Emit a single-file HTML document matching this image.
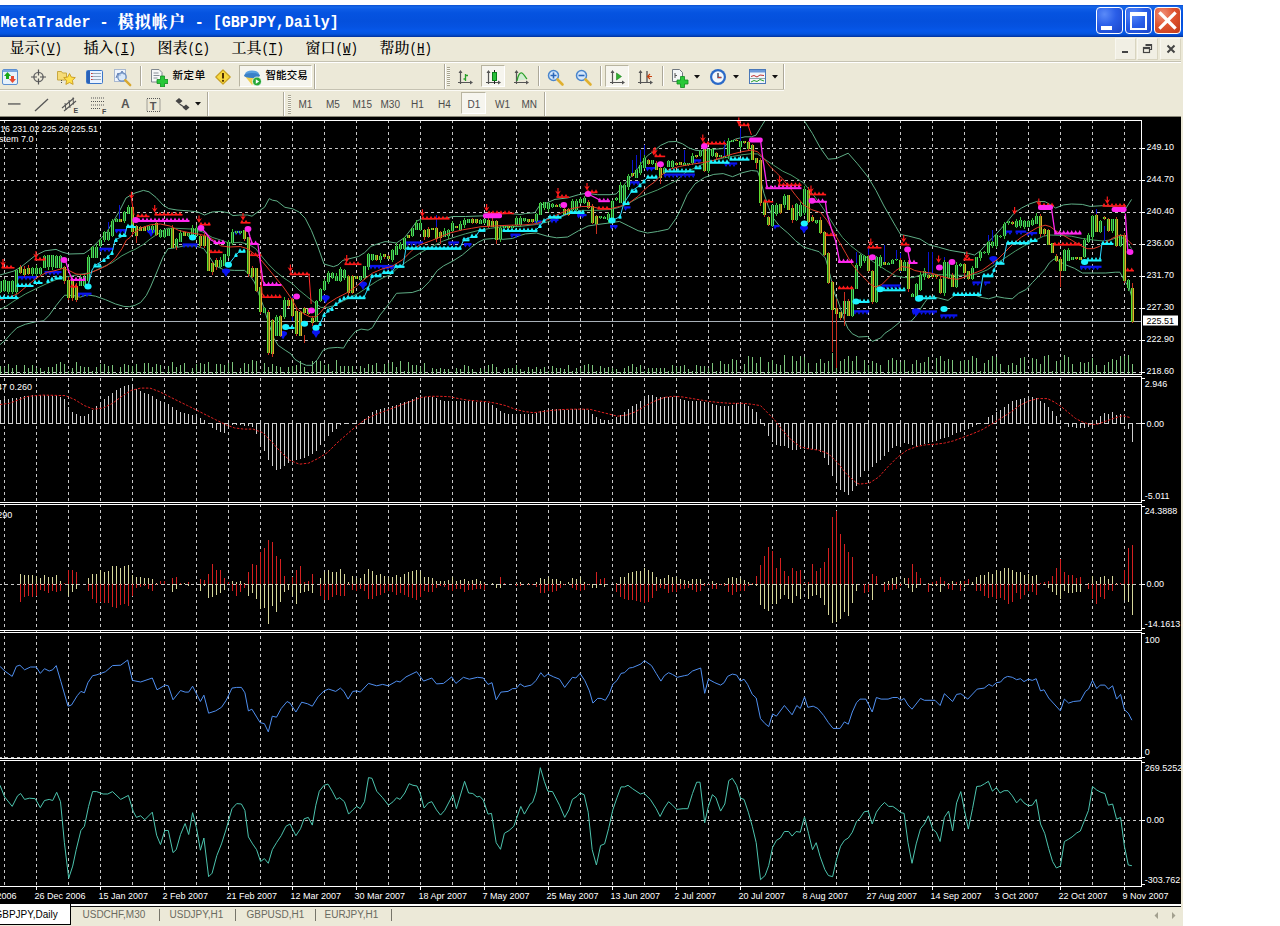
<!DOCTYPE html>
<html><head><meta charset="utf-8"><title>MetaTrader</title>
<style>
html,body{margin:0;padding:0;background:#fff}
body{width:1280px;height:926px;position:relative;overflow:hidden;font-family:"Liberation Sans","Noto Sans CJK SC",sans-serif}
#win{position:absolute;left:0;top:5px;width:1183px;height:921px;background:#ece9d8;overflow:hidden}
#page{position:absolute;left:0;top:0;width:1183px;height:926px;overflow:hidden}
#title{position:absolute;left:0;top:5px;width:1183px;height:32px;background:linear-gradient(to bottom,#0a4fd0 0,#1668ea 2px,#0d5ce6 4px,#0553e0 8px,#0450dc 16px,#0553e2 22px,#0658ea 26px,#0454de 29px,#0340b8 31px,#022f98 32px)}
#ttext{position:absolute;left:0.6px;top:10px;height:22px;line-height:22px;color:#fff;font:bold 15px/22px "Liberation Mono","Noto Serif CJK SC",monospace;white-space:pre;transform:scaleY(1.12);transform-origin:0 78%}
#ttext b{font:900 16px/22px "Noto Serif CJK SC",serif;letter-spacing:1px;display:inline-block;transform:scaleY(0.94);position:relative;top:1px}
.tb{position:absolute;top:7px;width:27px;height:27px;border:1px solid #fff;border-radius:4px;box-sizing:border-box;background:radial-gradient(circle at 30% 25%,#5a8af8 0,#2a5ee8 45%,#1a44c8 100%)}
#menu{position:absolute;left:0;top:37px;width:1183px;height:25px;background:#ece9d8}
.mi{position:absolute;top:41px;height:18px;font:500 15px/18px "Liberation Mono","Noto Serif CJK SC",serif;color:#000;white-space:pre}
.ml{font:12.5px/18px "Liberation Mono",monospace;display:inline-block;transform:scaleY(1.15);transform-origin:0 75%}
.mb{position:absolute;top:38px;width:21px;height:22px;box-sizing:border-box;background:#f1efe4;border:1px solid #f8f7f0;border-right-color:#d8d4c0;border-bottom-color:#d8d4c0}
.cj{position:absolute;font:500 10.5px/13px "Liberation Sans","Noto Sans CJK SC",sans-serif;color:#000;letter-spacing:0.6px;white-space:pre}
</style></head><body><div id="page">
<div id="win"></div>
<div id="title"></div>
<div id="ttext">MetaTrader - <b>模拟帐户</b> - [GBPJPY,Daily]</div>
<div class="tb" style="left:1096px"><div style="position:absolute;left:4px;top:18px;width:11px;height:4px;background:#fff"></div></div>
<div class="tb" style="left:1125px"><div style="position:absolute;left:4px;top:4px;width:13px;height:12px;border:2px solid #fff;border-top-width:4px"></div></div>
<div class="tb" style="left:1154px;background:radial-gradient(circle at 30% 25%,#f0907a 0,#e0532f 45%,#c03a1a 100%)"><svg width="25" height="25" viewBox="0 0 25 25" style="position:absolute;left:0;top:0"><path d="M5.5 5.5l14 14M19.5 5.5l-14 14" stroke="#fff" stroke-width="3.2" stroke-linecap="square"/></svg></div>
<div id="menu"></div>
<div class="mi" style="left:9.5px">显示<span class="ml">(<u>V</u>)</span></div><div class="mi" style="left:83.5px">插入<span class="ml">(<u>I</u>)</span></div><div class="mi" style="left:157.5px">图表<span class="ml">(<u>C</u>)</span></div><div class="mi" style="left:231.5px">工具<span class="ml">(<u>T</u>)</span></div><div class="mi" style="left:305.5px">窗口<span class="ml">(<u>W</u>)</span></div><div class="mi" style="left:379.5px">帮助<span class="ml">(<u>H</u>)</span></div>
<div class="mb" style="left:1115px"><div style="position:absolute;left:6px;top:12px;width:6px;height:2px;background:#444"></div></div>
<div class="mb" style="left:1137px"><svg width="19" height="20" style="position:absolute;left:0;top:0"><path d="M7.5 5.5h6v5h-2M7.5 6.5h6" stroke="#444" fill="none" stroke-width="1.2"/><rect x="5.5" y="8.5" width="6" height="5" fill="#f1efe4" stroke="#444" stroke-width="1.2"/><path d="M5.5 9.5h6" stroke="#444" stroke-width="1.2"/></svg></div>
<div class="mb" style="left:1160px"><svg width="19" height="20" style="position:absolute;left:0;top:0"><path d="M6.5 6.5l7 7M13.5 6.5l-7 7" stroke="#444" stroke-width="2"/></svg></div>
<div style="position:absolute;left:0;top:61px;width:1183px;height:1px;background:#c5c2b2"></div>
<div style="position:absolute;left:0;top:62px;width:1183px;height:1px;background:#fff"></div>
<!-- toolbar bands -->
<div style="position:absolute;left:0;top:89px;width:784px;height:1px;background:#c5c2b2"></div>
<div style="position:absolute;left:0;top:90px;width:784px;height:1px;background:#fbfaf5"></div>
<div style="position:absolute;left:0;top:116px;width:1183px;height:1px;background:#8a8878"></div>
<div style="position:absolute;left:140px;top:66px;width:1px;height:20px;background:#aca899;box-shadow:1px 0 0 #fff"></div><div style="position:absolute;left:314px;top:64px;width:1px;height:25px;background:#aca899;box-shadow:1px 0 0 #fff"></div><div style="position:absolute;left:444px;top:64px;width:1px;height:25px;background:#aca899;box-shadow:1px 0 0 #fff"></div><div style="position:absolute;left:447px;top:67px;width:3px;height:19px;background:repeating-linear-gradient(to bottom,#a8a490 0,#a8a490 1px,#f8f8f0 1px,#f8f8f0 2px)"></div><div style="position:absolute;left:538px;top:66px;width:1px;height:20px;background:#aca899;box-shadow:1px 0 0 #fff"></div><div style="position:absolute;left:600px;top:66px;width:1px;height:20px;background:#aca899;box-shadow:1px 0 0 #fff"></div><div style="position:absolute;left:662px;top:66px;width:1px;height:20px;background:#aca899;box-shadow:1px 0 0 #fff"></div><div style="position:absolute;left:783px;top:64px;width:1px;height:25px;background:#aca899;box-shadow:1px 0 0 #fff"></div><div style="position:absolute;left:207px;top:92px;width:1px;height:24px;background:#aca899;box-shadow:1px 0 0 #fff"></div><div style="position:absolute;left:283px;top:92px;width:1px;height:24px;background:#aca899;box-shadow:1px 0 0 #fff"></div><div style="position:absolute;left:288px;top:95px;width:3px;height:19px;background:repeating-linear-gradient(to bottom,#a8a490 0,#a8a490 1px,#f8f8f0 1px,#f8f8f0 2px)"></div><div style="position:absolute;left:544px;top:92px;width:1px;height:24px;background:#aca899;box-shadow:1px 0 0 #fff"></div><div style="position:absolute;left:239px;top:65px;width:73px;height:22px;background:#f6f5ee;border:1px solid #b8b4a0;border-right-color:#fff;border-bottom-color:#fff;box-sizing:border-box"></div><div style="position:absolute;left:481px;top:65px;width:24px;height:22px;background:#f6f5ee;border:1px solid #b8b4a0;border-right-color:#fff;border-bottom-color:#fff;box-sizing:border-box"></div><div style="position:absolute;left:605px;top:65px;width:24px;height:22px;background:#f6f5ee;border:1px solid #b8b4a0;border-right-color:#fff;border-bottom-color:#fff;box-sizing:border-box"></div><div style="position:absolute;left:461px;top:92px;width:25px;height:22px;background:#f6f5ee;border:1px solid #b8b4a0;border-right-color:#fff;border-bottom-color:#fff;box-sizing:border-box"></div>
<svg style="position:absolute;left:2px;top:69px" width="16" height="16" viewBox="0 0 16 16"><rect x="0.5" y="0.5" width="15" height="15" rx="1.5" fill="#e8f2fc" stroke="#5c8fd0"/><rect x="1" y="1" width="14" height="2" fill="#7aa7e0"/><path d="M5.5 3l3.5 4h-2v3h-3v-3h-2z" fill="#18a818"/><path d="M10.5 14l-3.5-4h2v-3h3v3h2z" fill="#e84a30"/></svg>
<svg style="position:absolute;left:31px;top:69px" width="16" height="16" viewBox="0 0 16 16"><circle cx="7.5" cy="8" r="4.6" fill="none" stroke="#666" stroke-width="1.4"/><path d="M7.5 0.5v6M7.5 9.5v6M0 8h6M9 8h6" stroke="#555" stroke-width="1.2"/></svg>
<svg style="position:absolute;left:57px;top:69px" width="19" height="16" viewBox="0 0 19 16"><path d="M0.5 2.5h4l1 1.5h4v7h-9z" fill="#f6dc78" stroke="#c8a840"/><path d="M12.5 4.5l1.8 3.6 4 .5-2.9 2.8.7 4-3.6-1.9-3.6 1.9.7-4-2.9-2.8 4-.5z" fill="#ffe14a" stroke="#c89a20" stroke-width="0.9"/><path d="M4.5 11v4" stroke="#555" stroke-dasharray="1 1"/></svg>
<svg style="position:absolute;left:86px;top:70px" width="17" height="14" viewBox="0 0 17 14"><rect x="0.5" y="0.5" width="16" height="13" rx="1" fill="#eaf3ff" stroke="#3a76c8"/><rect x="1" y="1" width="3" height="12" fill="#2a62b8"/><path d="M6 3.5h9M6 6.5h9M6 9.5h9" stroke="#9ab" stroke-width="1"/><path d="M5 3.5h1.5M5 6.5h1.5M5 9.5h1.5" stroke="#c33" stroke-width="1.2"/></svg>
<svg style="position:absolute;left:114px;top:69px" width="18" height="18" viewBox="0 0 18 18"><rect x="0.5" y="0.5" width="11" height="12" fill="#eef4fc" stroke="#a8b8d0"/><path d="M2 9l2-5 2 3 2-5 2 4" fill="none" stroke="#5a7ab0"/><circle cx="8" cy="8" r="4.2" fill="#cfe2f8" fill-opacity=".7" stroke="#6a8cc0" stroke-width="1.3"/><path d="M11.2 11.2l5 5" stroke="#d8a830" stroke-width="2.4" stroke-linecap="round"/></svg>
<svg style="position:absolute;left:151px;top:69px" width="17" height="18" viewBox="0 0 17 18"><path d="M0.5 0.5h7.5l3 3v9.5h-10.5z" fill="#f6f8f8" stroke="#808890"/><path d="M2.5 4h5M2.5 6.5h6M2.5 9h4" stroke="#8a9098"/><path d="M8 7.5h4v-0 4h4v4h-4v0h-4z" fill="none"/><path d="M9.5 7h4v3.5h3.5v4h-3.5v3.5h-4v-3.5h-3.5v-4h3.5z" fill="#28c838" stroke="#108a20" stroke-width="0.8"/></svg>
<svg style="position:absolute;left:214px;top:68px" width="18" height="18" viewBox="0 0 18 18"><path d="M9 1.8l7.2 7.2-7.2 7.2-7.2-7.2z" fill="#f8d840" stroke="#c8a020" stroke-width="1.2" stroke-linejoin="round"/><path d="M9 5v5.5" stroke="#503000" stroke-width="2"/><circle cx="9" cy="12.8" r="1.1" fill="#503000"/></svg>
<svg style="position:absolute;left:243px;top:69px" width="20" height="18" viewBox="0 0 20 18"><ellipse cx="9" cy="5" rx="7" ry="3.5" fill="#5aa0e0"/><path d="M1 6l8 10 8-10z" fill="#f0d050"/><ellipse cx="9" cy="6.5" rx="8" ry="2.5" fill="#3a80c8"/><circle cx="14" cy="12.5" r="4.5" fill="#28a838" stroke="#fff" stroke-width="0.8"/><path d="M12.8 10.3l3.4 2.2-3.4 2.2z" fill="#fff"/></svg>
<svg style="position:absolute;left:458px;top:70px" width="16" height="16" viewBox="0 0 16 16"><path d="M2.5 1v13M0 12.5h14" stroke="#555" stroke-width="1.2"/><path d="M2.5 0l-2 3h4zM15 12.5l-3-2v4z" fill="#555"/><path d="M7.5 4v7M5.5 9h2M7.5 5.5h2.5" stroke="#28a028" stroke-width="1.3" fill="none"/></svg>
<svg style="position:absolute;left:486px;top:70px" width="16" height="16" viewBox="0 0 16 16"><path d="M2.5 1v13M0 12.5h14" stroke="#555" stroke-width="1.2"/><path d="M2.5 0l-2 3h4zM15 12.5l-3-2v4z" fill="#555"/><path d="M8.5 0v14" stroke="#222" stroke-width="1"/><rect x="6.5" y="2.5" width="4" height="8" fill="#28c038" stroke="#0a7a1a"/></svg>
<svg style="position:absolute;left:514px;top:70px" width="16" height="16" viewBox="0 0 16 16"><path d="M2.5 1v13M0 12.5h14" stroke="#555" stroke-width="1.2"/><path d="M2.5 0l-2 3h4zM15 12.5l-3-2v4z" fill="#555"/><path d="M3 11c1-6 3-9 5-8s3 4 5 6" fill="#cfeccf" stroke="#28a028" stroke-width="1.2"/></svg>
<svg style="position:absolute;left:547px;top:69px" width="18" height="18" viewBox="0 0 18 18"><circle cx="6.5" cy="6.5" r="5" fill="#d6e8fb" stroke="#4a86cc" stroke-width="1.5"/><path d="M10.5 10.5l5 5" stroke="#e0b030" stroke-width="2.6" stroke-linecap="round"/><path d="M3.5 6.5h6M6.5 3.5v6" stroke="#2a66b8" stroke-width="1.6"/></svg>
<svg style="position:absolute;left:575px;top:69px" width="18" height="18" viewBox="0 0 18 18"><circle cx="6.5" cy="6.5" r="5" fill="#d6e8fb" stroke="#4a86cc" stroke-width="1.5"/><path d="M10.5 10.5l5 5" stroke="#e0b030" stroke-width="2.6" stroke-linecap="round"/><path d="M3.5 6.5h6" stroke="#2a66b8" stroke-width="1.6"/></svg>
<svg style="position:absolute;left:610px;top:70px" width="16" height="16" viewBox="0 0 16 16"><path d="M2.5 1v13M0 12.5h14" stroke="#555" stroke-width="1.2"/><path d="M2.5 0l-2 3h4zM15 12.5l-3-2v4z" fill="#555"/><path d="M6.5 3l5 3.5-5 3.5z" fill="#30b030" stroke="#208020" stroke-width=".6"/></svg>
<svg style="position:absolute;left:638px;top:70px" width="16" height="16" viewBox="0 0 16 16"><path d="M2.5 1v13M0 12.5h14" stroke="#555" stroke-width="1.2"/><path d="M2.5 0l-2 3h4zM15 12.5l-3-2v4z" fill="#555"/><path d="M9 1v11" stroke="#444" stroke-width="1.2"/><path d="M14 6.5h-4.5M12 4l-2.5 2.5 2.5 2.5" stroke="#c84010" stroke-width="1.2" fill="none"/></svg>
<svg style="position:absolute;left:671px;top:68px" width="18" height="20" viewBox="0 0 18 20"><path d="M1.5 1.5h7l3 3v9h-10z" fill="#f4f6f8" stroke="#707880"/><path d="M4 5v5M4 7.5h2" stroke="#555"/><path d="M9.5 8.5h4v3.5h3.5v4h-3.5v3.5h-4v-3.5h-3.5v-4h3.5z" fill="#28c838" stroke="#108a20" stroke-width="0.8"/></svg>
<svg style="position:absolute;left:709px;top:68px" width="18" height="18" viewBox="0 0 18 18"><circle cx="9" cy="9" r="8" fill="#2a6ac8"/><circle cx="9" cy="9" r="5.8" fill="#f4f8fc"/><path d="M9 5v4.5h3.5" stroke="#334" stroke-width="1.3" fill="none"/><path d="M9 9.5h3" stroke="#c33" stroke-width="1"/></svg>
<svg style="position:absolute;left:749px;top:69px" width="17" height="15" viewBox="0 0 17 15"><rect x="0.5" y="0.5" width="16" height="14" fill="#f2f6fa" stroke="#4a78b8"/><rect x="1" y="1" width="15" height="2.5" fill="#6a98d8"/><path d="M2 7.5l3-1 3 1.5 3-2 4 .5" stroke="#c03030" fill="none"/><path d="M1 9.5h15" stroke="#8aa"/><path d="M2 13l3-1.5 3 1 3-2 4 1.5" stroke="#28a028" fill="none"/></svg>
<svg style="position:absolute;left:694px;top:75px" width="7" height="4" viewBox="0 0 7 4"><path d="M0 0h6l-3 3.5z" fill="#111"/></svg>
<svg style="position:absolute;left:733px;top:75px" width="7" height="4" viewBox="0 0 7 4"><path d="M0 0h6l-3 3.5z" fill="#111"/></svg>
<svg style="position:absolute;left:772px;top:75px" width="7" height="4" viewBox="0 0 7 4"><path d="M0 0h6l-3 3.5z" fill="#111"/></svg>
<svg style="position:absolute;left:8px;top:103px" width="13" height="2" viewBox="0 0 13 2"><rect width="12.5" height="1.3" y="0.3" fill="#555"/></svg>
<svg style="position:absolute;left:34px;top:98px" width="15" height="14" viewBox="0 0 15 14"><path d="M1 13L14 1" stroke="#555" stroke-width="1.3"/></svg>
<svg style="position:absolute;left:61px;top:96px" width="18" height="18" viewBox="0 0 18 18"><path d="M1 12L13 2M3 15L15 5" stroke="#555" stroke-width="1.1"/><path d="M4 7l1 7M8 4l1 8M12 1.5l.500 7" stroke="#555" stroke-width="1"/><text x="12.5" y="17" font-size="7" font-weight="bold" fill="#444" font-family="Liberation Sans,sans-serif">E</text></svg>
<svg style="position:absolute;left:90px;top:96px" width="18" height="18" viewBox="0 0 18 18"><path d="M1 2h13M1 5.5h13M1 9h13M1 12.5h9" stroke="#555" stroke-dasharray="1 1" stroke-width="1.2"/><text x="12" y="17.5" font-size="7" font-weight="bold" fill="#444" font-family="Liberation Sans,sans-serif">F</text></svg>
<div style="position:absolute;left:121px;top:97px;font:bold 12px 'Liberation Sans',sans-serif;color:#555">A</div>
<svg style="position:absolute;left:146px;top:97px" width="16" height="16" viewBox="0 0 16 16"><rect x="1" y="1.5" width="13" height="13" fill="none" stroke="#555" stroke-dasharray="1 1"/><text x="3.8" y="12.5" font-size="11" font-weight="bold" fill="#555" font-family="Liberation Sans,sans-serif">T</text></svg>
<svg style="position:absolute;left:175px;top:98px" width="16" height="13" viewBox="0 0 16 13"><path d="M4 0l3.5 3-3.5 3-3.5-3zM11 6.5l3.5 3-3.5 3-3.5-3z" fill="#444"/><path d="M4.5 6l4.5 3" stroke="#444" stroke-width="1.2"/></svg>
<svg style="position:absolute;left:195px;top:102px" width="7" height="4" viewBox="0 0 7 4"><path d="M0 0h6l-3 3.5z" fill="#111"/></svg>
<div style="position:absolute;left:298.5px;top:99px;font:10px 'Liberation Sans',sans-serif;color:#4c4c4c;line-height:12px">M1</div><div style="position:absolute;left:326px;top:99px;font:10px 'Liberation Sans',sans-serif;color:#4c4c4c;line-height:12px">M5</div><div style="position:absolute;left:352.5px;top:99px;font:10px 'Liberation Sans',sans-serif;color:#4c4c4c;line-height:12px">M15</div><div style="position:absolute;left:380.5px;top:99px;font:10px 'Liberation Sans',sans-serif;color:#4c4c4c;line-height:12px">M30</div><div style="position:absolute;left:411px;top:99px;font:10px 'Liberation Sans',sans-serif;color:#4c4c4c;line-height:12px">H1</div><div style="position:absolute;left:438px;top:99px;font:10px 'Liberation Sans',sans-serif;color:#4c4c4c;line-height:12px">H4</div><div style="position:absolute;left:467.5px;top:99px;font:10px 'Liberation Sans',sans-serif;color:#4c4c4c;line-height:12px">D1</div><div style="position:absolute;left:495px;top:99px;font:10px 'Liberation Sans',sans-serif;color:#4c4c4c;line-height:12px">W1</div><div style="position:absolute;left:521.5px;top:99px;font:10px 'Liberation Sans',sans-serif;color:#4c4c4c;line-height:12px">MN</div>
<div class="cj" style="left:172.5px;top:68.5px">新定单</div>
<div class="cj" style="left:265.5px;top:68.5px;letter-spacing:0.1px">智能交易</div>
<svg width="1181" height="787" viewBox="0 117 1181 787" style="position:absolute;left:0;top:117px;display:block" font-family="'Liberation Sans',sans-serif" font-size="9">
<rect x="0" y="117" width="1181" height="787" fill="#000"/>
<g stroke="#c6c6c6" stroke-width="1" stroke-dasharray="3 3" shape-rendering="crispEdges">
<line x1="4.5" y1="120" x2="4.5" y2="886"/>
<line x1="36.5" y1="120" x2="36.5" y2="886"/>
<line x1="68.5" y1="120" x2="68.5" y2="886"/>
<line x1="100.5" y1="120" x2="100.5" y2="886"/>
<line x1="132.5" y1="120" x2="132.5" y2="886"/>
<line x1="164.5" y1="120" x2="164.5" y2="886"/>
<line x1="196.5" y1="120" x2="196.5" y2="886"/>
<line x1="228.5" y1="120" x2="228.5" y2="886"/>
<line x1="260.5" y1="120" x2="260.5" y2="886"/>
<line x1="292.5" y1="120" x2="292.5" y2="886"/>
<line x1="324.5" y1="120" x2="324.5" y2="886"/>
<line x1="356.5" y1="120" x2="356.5" y2="886"/>
<line x1="388.5" y1="120" x2="388.5" y2="886"/>
<line x1="420.5" y1="120" x2="420.5" y2="886"/>
<line x1="452.5" y1="120" x2="452.5" y2="886"/>
<line x1="484.5" y1="120" x2="484.5" y2="886"/>
<line x1="516.5" y1="120" x2="516.5" y2="886"/>
<line x1="548.5" y1="120" x2="548.5" y2="886"/>
<line x1="580.5" y1="120" x2="580.5" y2="886"/>
<line x1="612.5" y1="120" x2="612.5" y2="886"/>
<line x1="644.5" y1="120" x2="644.5" y2="886"/>
<line x1="676.5" y1="120" x2="676.5" y2="886"/>
<line x1="708.5" y1="120" x2="708.5" y2="886"/>
<line x1="740.5" y1="120" x2="740.5" y2="886"/>
<line x1="772.5" y1="120" x2="772.5" y2="886"/>
<line x1="804.5" y1="120" x2="804.5" y2="886"/>
<line x1="836.5" y1="120" x2="836.5" y2="886"/>
<line x1="868.5" y1="120" x2="868.5" y2="886"/>
<line x1="900.5" y1="120" x2="900.5" y2="886"/>
<line x1="932.5" y1="120" x2="932.5" y2="886"/>
<line x1="964.5" y1="120" x2="964.5" y2="886"/>
<line x1="996.5" y1="120" x2="996.5" y2="886"/>
<line x1="1028.5" y1="120" x2="1028.5" y2="886"/>
<line x1="1060.5" y1="120" x2="1060.5" y2="886"/>
<line x1="1092.5" y1="120" x2="1092.5" y2="886"/>
<line x1="1124.5" y1="120" x2="1124.5" y2="886"/>
<line x1="-1" y1="148.5" x2="1141" y2="148.5"/>
<line x1="-1" y1="180.5" x2="1141" y2="180.5"/>
<line x1="-1" y1="212.5" x2="1141" y2="212.5"/>
<line x1="-1" y1="244.5" x2="1141" y2="244.5"/>
<line x1="-1" y1="276.5" x2="1141" y2="276.5"/>
<line x1="-1" y1="308.5" x2="1141" y2="308.5"/>
<line x1="-1" y1="340.5" x2="1141" y2="340.5"/>
<line x1="-1" y1="372.5" x2="1141" y2="372.5"/>
<line x1="-1" y1="584.5" x2="1141" y2="584.5"/>
<line x1="-1" y1="820.5" x2="1141" y2="820.5"/>
<line x1="-1" y1="757.5" x2="1141" y2="757.5"/>
</g>
<g fill="#7cc47c" shape-rendering="crispEdges">
<rect x="0" y="366" width="1" height="8"/>
<rect x="4" y="367.1" width="1" height="6.9"/>
<rect x="8" y="363.8" width="1" height="10.2"/>
<rect x="12" y="367.7" width="1" height="6.3"/>
<rect x="16" y="364.5" width="1" height="9.5"/>
<rect x="20" y="372.9" width="1" height="1.1"/>
<rect x="24" y="364.7" width="1" height="9.3"/>
<rect x="28" y="367.9" width="1" height="6.1"/>
<rect x="32" y="365.2" width="1" height="8.8"/>
<rect x="36" y="367.7" width="1" height="6.3"/>
<rect x="40" y="367.5" width="1" height="6.5"/>
<rect x="44" y="371.3" width="1" height="2.7"/>
<rect x="48" y="367.3" width="1" height="6.7"/>
<rect x="52" y="366.6" width="1" height="7.4"/>
<rect x="56" y="363.9" width="1" height="10.1"/>
<rect x="60" y="361.8" width="1" height="12.2"/>
<rect x="64" y="364.3" width="1" height="9.7"/>
<rect x="68" y="371" width="1" height="3"/>
<rect x="72" y="367.8" width="1" height="6.2"/>
<rect x="76" y="362.4" width="1" height="11.6"/>
<rect x="80" y="366.2" width="1" height="7.8"/>
<rect x="84" y="367.2" width="1" height="6.8"/>
<rect x="88" y="367.4" width="1" height="6.6"/>
<rect x="92" y="371.4" width="1" height="2.6"/>
<rect x="96" y="366.9" width="1" height="7.1"/>
<rect x="100" y="364.2" width="1" height="9.8"/>
<rect x="104" y="363.8" width="1" height="10.2"/>
<rect x="108" y="365.6" width="1" height="8.4"/>
<rect x="112" y="364.5" width="1" height="9.5"/>
<rect x="116" y="372.9" width="1" height="1.1"/>
<rect x="120" y="366.8" width="1" height="7.2"/>
<rect x="124" y="363.6" width="1" height="10.4"/>
<rect x="128" y="365.3" width="1" height="8.7"/>
<rect x="132" y="366" width="1" height="8"/>
<rect x="136" y="364.2" width="1" height="9.8"/>
<rect x="140" y="372.4" width="1" height="1.6"/>
<rect x="144" y="362.8" width="1" height="11.2"/>
<rect x="148" y="363.4" width="1" height="10.6"/>
<rect x="152" y="366.5" width="1" height="7.5"/>
<rect x="156" y="364.3" width="1" height="9.7"/>
<rect x="160" y="364.6" width="1" height="9.4"/>
<rect x="164" y="371.5" width="1" height="2.5"/>
<rect x="168" y="366.2" width="1" height="7.8"/>
<rect x="172" y="361.5" width="1" height="12.5"/>
<rect x="176" y="367.4" width="1" height="6.6"/>
<rect x="180" y="365.3" width="1" height="8.7"/>
<rect x="184" y="363" width="1" height="11"/>
<rect x="188" y="372" width="1" height="2"/>
<rect x="192" y="367.9" width="1" height="6.1"/>
<rect x="196" y="363.6" width="1" height="10.4"/>
<rect x="200" y="363" width="1" height="11"/>
<rect x="204" y="364.3" width="1" height="9.7"/>
<rect x="208" y="362.2" width="1" height="11.8"/>
<rect x="212" y="371.6" width="1" height="2.4"/>
<rect x="216" y="364.1" width="1" height="9.9"/>
<rect x="220" y="364.2" width="1" height="9.8"/>
<rect x="224" y="365.1" width="1" height="8.9"/>
<rect x="228" y="362.5" width="1" height="11.5"/>
<rect x="232" y="361.8" width="1" height="12.2"/>
<rect x="236" y="371.7" width="1" height="2.3"/>
<rect x="240" y="367.7" width="1" height="6.3"/>
<rect x="244" y="363.4" width="1" height="10.6"/>
<rect x="248" y="363.8" width="1" height="10.2"/>
<rect x="252" y="360.1" width="1" height="13.9"/>
<rect x="256" y="361.3" width="1" height="12.7"/>
<rect x="260" y="372.2" width="1" height="1.8"/>
<rect x="264" y="362.5" width="1" height="11.5"/>
<rect x="268" y="367.3" width="1" height="6.7"/>
<rect x="272" y="364" width="1" height="10"/>
<rect x="276" y="366.2" width="1" height="7.8"/>
<rect x="280" y="366.6" width="1" height="7.4"/>
<rect x="284" y="371.5" width="1" height="2.5"/>
<rect x="288" y="366.5" width="1" height="7.5"/>
<rect x="292" y="365.6" width="1" height="8.4"/>
<rect x="296" y="364.6" width="1" height="9.4"/>
<rect x="300" y="361" width="1" height="13"/>
<rect x="304" y="366.9" width="1" height="7.1"/>
<rect x="308" y="371.9" width="1" height="2.1"/>
<rect x="312" y="360.9" width="1" height="13.1"/>
<rect x="316" y="361.4" width="1" height="12.6"/>
<rect x="320" y="361" width="1" height="13"/>
<rect x="324" y="365.4" width="1" height="8.6"/>
<rect x="328" y="364.4" width="1" height="9.6"/>
<rect x="332" y="371.2" width="1" height="2.8"/>
<rect x="336" y="360.3" width="1" height="13.7"/>
<rect x="340" y="366.4" width="1" height="7.6"/>
<rect x="344" y="366.2" width="1" height="7.8"/>
<rect x="348" y="365.8" width="1" height="8.2"/>
<rect x="352" y="365.7" width="1" height="8.3"/>
<rect x="356" y="371.8" width="1" height="2.2"/>
<rect x="360" y="365.5" width="1" height="8.5"/>
<rect x="364" y="367.5" width="1" height="6.5"/>
<rect x="368" y="364.4" width="1" height="9.6"/>
<rect x="372" y="364.7" width="1" height="9.3"/>
<rect x="376" y="363.3" width="1" height="10.7"/>
<rect x="380" y="371.6" width="1" height="2.4"/>
<rect x="384" y="363.6" width="1" height="10.4"/>
<rect x="388" y="362.9" width="1" height="11.1"/>
<rect x="392" y="362.4" width="1" height="11.6"/>
<rect x="396" y="367.1" width="1" height="6.9"/>
<rect x="400" y="360.8" width="1" height="13.2"/>
<rect x="404" y="371.3" width="1" height="2.7"/>
<rect x="408" y="361.5" width="1" height="12.5"/>
<rect x="412" y="364.6" width="1" height="9.4"/>
<rect x="416" y="364.5" width="1" height="9.5"/>
<rect x="420" y="366.7" width="1" height="7.3"/>
<rect x="424" y="362.7" width="1" height="11.3"/>
<rect x="428" y="372.9" width="1" height="1.1"/>
<rect x="432" y="368.4" width="1" height="5.6"/>
<rect x="436" y="368.6" width="1" height="5.4"/>
<rect x="440" y="367.7" width="1" height="6.3"/>
<rect x="444" y="369.2" width="1" height="4.8"/>
<rect x="448" y="369.4" width="1" height="4.6"/>
<rect x="452" y="372.8" width="1" height="1.2"/>
<rect x="456" y="367.5" width="1" height="6.5"/>
<rect x="460" y="369.3" width="1" height="4.7"/>
<rect x="464" y="364.9" width="1" height="9.1"/>
<rect x="468" y="366.2" width="1" height="7.8"/>
<rect x="472" y="368.7" width="1" height="5.3"/>
<rect x="476" y="372.3" width="1" height="1.7"/>
<rect x="480" y="367.5" width="1" height="6.5"/>
<rect x="484" y="368.8" width="1" height="5.2"/>
<rect x="488" y="365" width="1" height="9"/>
<rect x="492" y="364.2" width="1" height="9.8"/>
<rect x="496" y="367" width="1" height="7"/>
<rect x="500" y="372.8" width="1" height="1.2"/>
<rect x="504" y="368.9" width="1" height="5.1"/>
<rect x="508" y="367.7" width="1" height="6.3"/>
<rect x="512" y="368.1" width="1" height="5.9"/>
<rect x="516" y="365.1" width="1" height="8.9"/>
<rect x="520" y="368.6" width="1" height="5.4"/>
<rect x="524" y="371.1" width="1" height="2.9"/>
<rect x="528" y="366.7" width="1" height="7.3"/>
<rect x="532" y="368.7" width="1" height="5.3"/>
<rect x="536" y="366.6" width="1" height="7.4"/>
<rect x="540" y="369.3" width="1" height="4.7"/>
<rect x="544" y="366.7" width="1" height="7.3"/>
<rect x="548" y="371.3" width="1" height="2.7"/>
<rect x="552" y="365.8" width="1" height="8.2"/>
<rect x="556" y="368.1" width="1" height="5.9"/>
<rect x="560" y="367.5" width="1" height="6.5"/>
<rect x="564" y="368.6" width="1" height="5.4"/>
<rect x="568" y="365.4" width="1" height="8.6"/>
<rect x="572" y="371.4" width="1" height="2.6"/>
<rect x="576" y="367.7" width="1" height="6.3"/>
<rect x="580" y="368.3" width="1" height="5.7"/>
<rect x="584" y="365.2" width="1" height="8.8"/>
<rect x="588" y="364.3" width="1" height="9.7"/>
<rect x="592" y="365" width="1" height="9"/>
<rect x="596" y="371.4" width="1" height="2.6"/>
<rect x="600" y="365.6" width="1" height="8.4"/>
<rect x="604" y="368.3" width="1" height="5.7"/>
<rect x="608" y="366.7" width="1" height="7.3"/>
<rect x="612" y="367.6" width="1" height="6.4"/>
<rect x="616" y="369.3" width="1" height="4.7"/>
<rect x="620" y="372.4" width="1" height="1.6"/>
<rect x="624" y="368.1" width="1" height="5.9"/>
<rect x="628" y="365.8" width="1" height="8.2"/>
<rect x="632" y="364.4" width="1" height="9.6"/>
<rect x="636" y="367.1" width="1" height="6.9"/>
<rect x="640" y="364.5" width="1" height="9.5"/>
<rect x="644" y="371.1" width="1" height="2.9"/>
<rect x="648" y="367.5" width="1" height="6.5"/>
<rect x="652" y="368.3" width="1" height="5.7"/>
<rect x="656" y="368.3" width="1" height="5.7"/>
<rect x="660" y="368.4" width="1" height="5.6"/>
<rect x="664" y="368.4" width="1" height="5.6"/>
<rect x="668" y="371.2" width="1" height="2.8"/>
<rect x="672" y="365" width="1" height="9"/>
<rect x="676" y="366.9" width="1" height="7.1"/>
<rect x="680" y="366" width="1" height="8"/>
<rect x="684" y="365.3" width="1" height="8.7"/>
<rect x="688" y="369" width="1" height="5"/>
<rect x="692" y="371.2" width="1" height="2.8"/>
<rect x="696" y="365.3" width="1" height="8.7"/>
<rect x="700" y="365.5" width="1" height="8.5"/>
<rect x="704" y="366.4" width="1" height="7.6"/>
<rect x="708" y="367.7" width="1" height="6.3"/>
<rect x="712" y="363.3" width="1" height="10.7"/>
<rect x="716" y="371.4" width="1" height="2.6"/>
<rect x="720" y="360.7" width="1" height="13.3"/>
<rect x="724" y="364.3" width="1" height="9.7"/>
<rect x="728" y="363.8" width="1" height="10.2"/>
<rect x="732" y="358.7" width="1" height="15.3"/>
<rect x="736" y="359.9" width="1" height="14.1"/>
<rect x="740" y="372.7" width="1" height="1.3"/>
<rect x="744" y="364.2" width="1" height="9.8"/>
<rect x="748" y="356.2" width="1" height="17.8"/>
<rect x="752" y="356.5" width="1" height="17.5"/>
<rect x="756" y="363" width="1" height="11"/>
<rect x="760" y="356.9" width="1" height="17.1"/>
<rect x="764" y="371.7" width="1" height="2.3"/>
<rect x="768" y="361.7" width="1" height="12.3"/>
<rect x="772" y="359.7" width="1" height="14.3"/>
<rect x="776" y="363.9" width="1" height="10.1"/>
<rect x="780" y="365.1" width="1" height="8.9"/>
<rect x="784" y="355.4" width="1" height="18.6"/>
<rect x="788" y="371.9" width="1" height="2.1"/>
<rect x="792" y="355.8" width="1" height="18.2"/>
<rect x="796" y="360.8" width="1" height="13.2"/>
<rect x="800" y="356.4" width="1" height="17.6"/>
<rect x="804" y="356.9" width="1" height="17.1"/>
<rect x="808" y="363.1" width="1" height="10.9"/>
<rect x="812" y="372.4" width="1" height="1.6"/>
<rect x="816" y="362.8" width="1" height="11.2"/>
<rect x="820" y="359.3" width="1" height="14.7"/>
<rect x="824" y="362.6" width="1" height="11.4"/>
<rect x="828" y="361" width="1" height="13"/>
<rect x="832" y="353" width="1" height="21"/>
<rect x="836" y="368" width="1" height="6"/>
<rect x="840" y="360.6" width="1" height="13.4"/>
<rect x="844" y="359.3" width="1" height="14.7"/>
<rect x="848" y="356.1" width="1" height="17.9"/>
<rect x="852" y="361" width="1" height="13"/>
<rect x="856" y="355.9" width="1" height="18.1"/>
<rect x="860" y="371.9" width="1" height="2.1"/>
<rect x="864" y="359.9" width="1" height="14.1"/>
<rect x="868" y="365" width="1" height="9"/>
<rect x="872" y="360.8" width="1" height="13.2"/>
<rect x="876" y="363.4" width="1" height="10.6"/>
<rect x="880" y="365.2" width="1" height="8.8"/>
<rect x="884" y="372.7" width="1" height="1.3"/>
<rect x="888" y="360.4" width="1" height="13.6"/>
<rect x="892" y="357.9" width="1" height="16.1"/>
<rect x="896" y="359.6" width="1" height="14.4"/>
<rect x="900" y="361.9" width="1" height="12.1"/>
<rect x="904" y="360" width="1" height="14"/>
<rect x="908" y="371.4" width="1" height="2.6"/>
<rect x="912" y="364.2" width="1" height="9.8"/>
<rect x="916" y="359.6" width="1" height="14.4"/>
<rect x="920" y="362.7" width="1" height="11.3"/>
<rect x="924" y="362.4" width="1" height="11.6"/>
<rect x="928" y="357.4" width="1" height="16.6"/>
<rect x="932" y="371.9" width="1" height="2.1"/>
<rect x="936" y="357.5" width="1" height="16.5"/>
<rect x="940" y="356" width="1" height="18"/>
<rect x="944" y="360.7" width="1" height="13.3"/>
<rect x="948" y="359" width="1" height="15"/>
<rect x="952" y="360.1" width="1" height="13.9"/>
<rect x="956" y="371.6" width="1" height="2.4"/>
<rect x="960" y="360.6" width="1" height="13.4"/>
<rect x="964" y="359.8" width="1" height="14.2"/>
<rect x="968" y="360.4" width="1" height="13.6"/>
<rect x="972" y="355.7" width="1" height="18.3"/>
<rect x="976" y="358.1" width="1" height="15.9"/>
<rect x="980" y="371.1" width="1" height="2.9"/>
<rect x="984" y="362.6" width="1" height="11.4"/>
<rect x="988" y="359.6" width="1" height="14.4"/>
<rect x="992" y="355.7" width="1" height="18.3"/>
<rect x="996" y="356.7" width="1" height="17.3"/>
<rect x="1000" y="363.8" width="1" height="10.2"/>
<rect x="1004" y="372.1" width="1" height="1.9"/>
<rect x="1008" y="364.5" width="1" height="9.5"/>
<rect x="1012" y="362.8" width="1" height="11.2"/>
<rect x="1016" y="364.5" width="1" height="9.5"/>
<rect x="1020" y="358.4" width="1" height="15.6"/>
<rect x="1024" y="357.3" width="1" height="16.7"/>
<rect x="1028" y="372.7" width="1" height="1.3"/>
<rect x="1032" y="358" width="1" height="16"/>
<rect x="1036" y="358.5" width="1" height="15.5"/>
<rect x="1040" y="363.8" width="1" height="10.2"/>
<rect x="1044" y="356.3" width="1" height="17.7"/>
<rect x="1048" y="355.4" width="1" height="18.6"/>
<rect x="1052" y="371.1" width="1" height="2.9"/>
<rect x="1056" y="361.2" width="1" height="12.8"/>
<rect x="1060" y="360.3" width="1" height="13.7"/>
<rect x="1064" y="355.2" width="1" height="18.8"/>
<rect x="1068" y="356.8" width="1" height="17.2"/>
<rect x="1072" y="363.6" width="1" height="10.4"/>
<rect x="1076" y="372" width="1" height="2"/>
<rect x="1080" y="361.8" width="1" height="12.2"/>
<rect x="1084" y="363.2" width="1" height="10.8"/>
<rect x="1088" y="362" width="1" height="12"/>
<rect x="1092" y="357.9" width="1" height="16.1"/>
<rect x="1096" y="365" width="1" height="9"/>
<rect x="1100" y="372.1" width="1" height="1.9"/>
<rect x="1104" y="365" width="1" height="9"/>
<rect x="1108" y="361.9" width="1" height="12.1"/>
<rect x="1112" y="358.9" width="1" height="15.1"/>
<rect x="1116" y="360" width="1" height="14"/>
<rect x="1120" y="356" width="1" height="18"/>
<rect x="1124" y="356" width="1" height="18"/>
<rect x="1128" y="355.4" width="1" height="18.6"/>
<rect x="1132" y="364.2" width="1" height="9.8"/>
</g>
<polyline points="0,275 14,271 21,267 35,255.7 45,250.8 56,249.4 62,252 69,254 84,253.6 91,248.7 98,241.6 107,231.8 112,223.4 119,212 126,198 131,195 135,193 143.4,190.4 149,191.8 156,197.4 163,205 168.7,208.6 177,210 189.8,211 198,212 204.5,215 212,212 220.7,211.4 228.4,212.8 233,215.6 240,215 247.4,215 252,216.2 259.8,210.4 264.5,207.3 269.2,198.6 272.4,200.2 277,201 284.9,207.3 292.7,208.8 299,212 305.2,218.2 311.5,230.7 317.8,246.4 324,264 333.4,266.7 338,265 342.8,260.4 349,258.8 358.5,256.5 364.7,252.6 371,246.3 377.3,244 385,241.6 390,242 396.5,243 404.4,237.7 410.6,229.9 416.9,221 421.6,218.9 431,218.9 446.6,218 453,216.5 465.4,216.5 484.2,215.8 493.6,214.2 509.3,213.4 520,214.5 525.4,213.5 534.8,212.7 539.5,205.7 547.3,202.6 555,199.4 567.7,197.9 578.6,194.7 586.5,193.2 597.4,194.7 610,194.7 616.2,194 622.5,186.9 628.7,179 635,172.8 641.3,163.4 647.5,155.6 654.3,150.9 660.5,145.4 668.4,141.8 676.2,141.5 682.5,143.8 688.7,147.8 695,150.1 701.2,150.9 713.8,149.3 723.2,148.5 727.9,143 735.7,139 745,136.8 751.4,136.8 756,135.2 760.7,127.4 764.7,121" fill="none" stroke="#5fae86" stroke-width="1" /><polyline points="804.4,121 812.3,133.3 820.3,147.9 828.3,159.2 836.3,158.5 848.2,153.2 857.5,163.8 868,177 876,190.4 884,206 889.6,215.7 895.9,226.7 900.6,234.5 908.4,236 920,239 929.2,244.8 938.6,247.2 949.6,250.3 959,251.9 968.4,253.4 974.6,255 980.9,250.3 987.2,243.2 995,235.4 1001.3,228.4 1007.5,221.3 1013.8,213.5 1021.6,208 1029.4,204 1037.3,201.3 1045.1,201.7 1050,204.5 1055.7,208 1063.5,204.9 1071.3,204 1082.3,204.4 1090.1,206.4 1102.6,205.7 1112,206.4 1121.4,208 1126.1,208 1131.6,199.4" fill="none" stroke="#5fae86" stroke-width="1" />
<polyline points="0,344.7 5.6,339.8 11.3,333.4 16.9,327.8 25.3,324.3 35.2,321.9 43.6,320.8 49.2,315.2 56.3,305.3 61.9,298.3 64.7,295.2 73.1,295.5 80.2,297.2 87.2,294.8 95.6,296.2 105.5,299.7 115.3,303.9 123.8,306.4 129.4,306.7 135,305.3 140.6,302.5 146.3,295.5 150.5,287 156,274 163,257 168,248.7 174.3,248 184.2,245.8 195.4,245.8 203.8,248.7 209.5,257 215,265.5 223.5,269.7 234.7,270.4 244.6,270.4 248.8,274 254.4,282 258.6,293.6 263,305 267,318 271,330 273.9,338.3 278.1,345.3 285.2,350.2 290.8,353.8 295,359.4 300.6,362.9 306.3,365.3 311.9,365.3 317.5,359.4 323.1,350.2 328.8,348.1 337.2,347.4 343.5,348.1 348.5,339.7 355.5,331.3 361.1,329.1 368.1,330.1 372.4,327.7 375.2,322.8 380,315 385,309 392,299.6 396.5,293.3 412.2,292.5 421.6,289.4 429.4,281.5 437.2,270.6 443.5,265.9 452.9,261 462.3,255 471.7,247 478,242.4 484.2,239.3 493.6,238.5 503,239.3 512.4,238.5 520,235.5 525.4,233.9 536.4,233 547.3,236.2 556.7,237.8 567.7,237 578.6,230.7 588,226 597.4,224.5 610,222.9 619.4,221.4 628.7,226 638.1,230.7 647.5,233 657.4,231.5 668.4,229.2 676.2,218.2 680.9,208.8 687.1,194.7 695,183.8 704.4,177.5 713.8,174.4 723.2,173.6 732.6,176.7 742,172.8 751.4,170.5 757.6,171.2 760.7,180.6 763.9,193.2 768.6,207.3 773.3,218.2 779.5,226 787.8,233 795.7,240.8 803.5,247 811.3,249.4 819.1,251.7 825.4,258 828.5,269 831.7,281.5 834.8,294 838,301 841.2,310.8 844.5,320.6 847.8,328.3 852.2,333.7 858.7,337 867.5,336.5 872.4,341.4 876.2,339.8 880.6,338 885,333.2 891.6,328.8 900.3,321.7 911.2,321.2 915.6,316.2 918.3,312 924.5,302.7 929.2,296.5 938.6,298 948,300.4 954.3,295.7 963.7,294.9 974.6,294.9 980.9,297.3 988.7,298.8 996.6,296.5 1004.4,298 1012.2,298.8 1018.5,293.3 1026.3,289.4 1032.6,282.4 1038.8,276 1044.7,269.9 1049.4,262.8 1054.1,258.9 1058.8,261.2 1066.6,265.2 1074.4,268.3 1082.3,273 1105.8,273 1115.2,272.2 1119.9,272.2 1124.6,280.8 1129.3,287.9 1131.6,296.5" fill="none" stroke="#5fae86" stroke-width="1" />
<polyline points="0,309.5 5.6,306.7 14,301 25.3,294 36.6,288.4 46.4,283.8 60,278 78.6,274.6 91,272.5 101,268 112,262.7 122,255.7 130,251.5 135,249.4 143.4,244.4 150.5,238.8 157.5,234 167.3,228.3 175.8,228.3 191.2,229 202.4,231.8 212.3,237.4 220.7,240 229,243 240.4,242.3 248.8,244.4 255.8,248.7 259.8,254 267.7,263.5 275.5,271.4 283.3,277.6 292.7,283.9 299,290 306.8,296.4 314.6,302.7 320.9,307.4 327.2,307.4 333.4,305.8 346,299.6 358.5,293.3 367.9,287 377.3,280.8 385,276.9 390,275 396.5,269 407.5,261 420,253 431,247 443.5,240.8 452.9,237.7 465.4,233.8 478,230.6 490.5,228.3 503,226.7 520,226.4 536.4,224.5 547.3,222 559.8,217.4 569.2,213.5 581.8,210.4 594.3,210.4 610,209.6 619.4,207.3 628.7,203.3 638.1,197.9 647.5,193.8 657.4,190 668.4,184.5 676.2,180.6 687.1,171.2 695,168 704.4,163.4 713.8,160.3 723.2,158 732.6,156.4 742,154.8 751.4,153.7 757.6,154 763.9,158.7 773.3,165 782.7,171.2 791,175 803.5,182.8 811.3,192.2 820.7,204.8 827,214 834.8,226.7 842.6,237.6 850.5,245.5 858.3,251.7 867.7,258 877.1,264.3 886.5,270.5 895.9,276 905.3,277.6 913,277.6 920,275.2 927.7,273.8 938.6,274.6 959,275.3 968.4,275.3 977.8,273.8 987.2,269.9 996.6,263.6 1006,257.3 1015.4,251 1024.7,245.6 1034.1,240.9 1043.5,236.2 1050,235 1060.4,235.4 1071.3,236.2 1082.3,238.5 1093.2,240 1102.6,240.9 1110.5,240 1118.3,237 1124.6,238.5 1127.7,243.2 1131.6,248.7" fill="none" stroke="#4a9a6a" stroke-width="1" />
<rect x="0" y="321" width="1142" height="1" fill="#a8b0b8" shape-rendering="crispEdges"/>
<g fill="#0a14f0">
<rect x="16.5" y="276" width="20" height="2.2"/>
<path d="M16.5 278l3 0l-1.5 2.6z"/>
<path d="M20.5 278l3 0l-1.5 2.6z"/>
<path d="M24.5 278l3 0l-1.5 2.6z"/>
<path d="M28.5 278l3 0l-1.5 2.6z"/>
<path d="M32.5 278l3 0l-1.5 2.6z"/>
<rect x="44.5" y="271" width="17" height="2.2"/>
<path d="M44.5 273l3 0l-1.5 2.6z"/>
<path d="M48.5 273l3 0l-1.5 2.6z"/>
<path d="M52.5 273l3 0l-1.5 2.6z"/>
<path d="M56.5 273l3 0l-1.5 2.6z"/>
<rect x="77.5" y="292.6" width="14" height="2.2"/>
<path d="M77.5 294.6l3 0l-1.5 2.6z"/>
<path d="M81.5 294.6l3 0l-1.5 2.6z"/>
<path d="M85.5 294.6l3 0l-1.5 2.6z"/>
<rect x="99.5" y="247.7" width="14" height="2.2"/>
<path d="M99.5 249.7l3 0l-1.5 2.6z"/>
<path d="M103.5 249.7l3 0l-1.5 2.6z"/>
<path d="M107.5 249.7l3 0l-1.5 2.6z"/>
<rect x="115.1" y="229" width="11.4" height="2.2"/>
<path d="M115.1 231l3 0l-1.5 2.6z"/>
<path d="M119.1 231l3 0l-1.5 2.6z"/>
<path d="M123.1 231l3 0l-1.5 2.6z"/>
<rect x="182.5" y="243.4" width="15" height="2.2"/>
<path d="M182.5 245.4l3 0l-1.5 2.6z"/>
<path d="M186.5 245.4l3 0l-1.5 2.6z"/>
<path d="M190.5 245.4l3 0l-1.5 2.6z"/>
<path d="M194.5 245.4l3 0l-1.5 2.6z"/>
<rect x="234.5" y="230.8" width="7" height="2.2"/>
<path d="M234.5 232.8l3 0l-1.5 2.6z"/>
<path d="M238.5 232.8l3 0l-1.5 2.6z"/>
<rect x="369.5" y="264.9" width="24" height="2.2"/>
<path d="M369.5 266.9l3 0l-1.5 2.6z"/>
<path d="M373.5 266.9l3 0l-1.5 2.6z"/>
<path d="M377.5 266.9l3 0l-1.5 2.6z"/>
<path d="M381.5 266.9l3 0l-1.5 2.6z"/>
<path d="M385.5 266.9l3 0l-1.5 2.6z"/>
<path d="M389.5 266.9l3 0l-1.5 2.6z"/>
<rect x="382.5" y="265.7" width="12" height="2.2"/>
<path d="M382.5 267.7l3 0l-1.5 2.6z"/>
<path d="M386.5 267.7l3 0l-1.5 2.6z"/>
<path d="M390.5 267.7l3 0l-1.5 2.6z"/>
<rect x="406" y="241.4" width="17.1" height="2.2"/>
<path d="M406 243.4l3 0l-1.5 2.6z"/>
<path d="M410 243.4l3 0l-1.5 2.6z"/>
<path d="M414 243.4l3 0l-1.5 2.6z"/>
<path d="M418 243.4l3 0l-1.5 2.6z"/>
<rect x="448.3" y="241.4" width="10.8" height="2.2"/>
<path d="M448.3 243.4l3 0l-1.5 2.6z"/>
<path d="M452.3 243.4l3 0l-1.5 2.6z"/>
<rect x="463.9" y="243" width="7.6" height="2.2"/>
<path d="M463.9 245l3 0l-1.5 2.6z"/>
<path d="M467.9 245l3 0l-1.5 2.6z"/>
<rect x="510.5" y="233.6" width="10" height="2.2"/>
<path d="M510.5 235.6l3 0l-1.5 2.6z"/>
<path d="M514.5 235.6l3 0l-1.5 2.6z"/>
<rect x="534.5" y="220.4" width="7" height="2.2"/>
<path d="M534.5 222.4l3 0l-1.5 2.6z"/>
<path d="M538.5 222.4l3 0l-1.5 2.6z"/>
<rect x="550.5" y="218.8" width="8" height="2.2"/>
<path d="M550.5 220.8l3 0l-1.5 2.6z"/>
<path d="M554.5 220.8l3 0l-1.5 2.6z"/>
<rect x="577.1" y="214" width="9.4" height="2.2"/>
<path d="M577.1 216l3 0l-1.5 2.6z"/>
<path d="M581.1 216l3 0l-1.5 2.6z"/>
<rect x="610" y="225" width="7.5" height="2.2"/>
<path d="M610 227l3 0l-1.5 2.6z"/>
<path d="M614 227l3 0l-1.5 2.6z"/>
<rect x="624.1" y="206.3" width="6.4" height="2.2"/>
<path d="M624.1 208.3l3 0l-1.5 2.6z"/>
<rect x="628.5" y="181.2" width="11" height="2.2"/>
<path d="M628.5 183.2l3 0l-1.5 2.6z"/>
<path d="M632.5 183.2l3 0l-1.5 2.6z"/>
<path d="M636.5 183.2l3 0l-1.5 2.6z"/>
<rect x="646" y="167" width="9.3" height="2.2"/>
<path d="M646 169l3 0l-1.5 2.6z"/>
<path d="M650 169l3 0l-1.5 2.6z"/>
<rect x="663.7" y="173.5" width="31.2" height="2.2"/>
<path d="M663.7 175.5l3 0l-1.5 2.6z"/>
<path d="M667.7 175.5l3 0l-1.5 2.6z"/>
<path d="M671.7 175.5l3 0l-1.5 2.6z"/>
<path d="M675.7 175.5l3 0l-1.5 2.6z"/>
<path d="M679.7 175.5l3 0l-1.5 2.6z"/>
<path d="M683.7 175.5l3 0l-1.5 2.6z"/>
<path d="M687.7 175.5l3 0l-1.5 2.6z"/>
<path d="M691.7 175.5l3 0l-1.5 2.6z"/>
<rect x="693.5" y="159.3" width="7.7" height="2.2"/>
<path d="M693.5 161.3l3 0l-1.5 2.6z"/>
<path d="M697.5 161.3l3 0l-1.5 2.6z"/>
<rect x="724.5" y="162.4" width="12.7" height="2.2"/>
<path d="M724.5 164.4l3 0l-1.5 2.6z"/>
<path d="M728.5 164.4l3 0l-1.5 2.6z"/>
<path d="M732.5 164.4l3 0l-1.5 2.6z"/>
<rect x="773.5" y="225" width="6" height="2.2"/>
<path d="M773.5 227l3 0l-1.5 2.6z"/>
<rect x="853.5" y="310.2" width="15.7" height="2.2"/>
<path d="M853.5 312.2l3 0l-1.5 2.6z"/>
<path d="M857.5 312.2l3 0l-1.5 2.6z"/>
<path d="M861.5 312.2l3 0l-1.5 2.6z"/>
<path d="M865.5 312.2l3 0l-1.5 2.6z"/>
<rect x="881.5" y="284.4" width="19" height="2.2"/>
<path d="M881.5 286.4l3 0l-1.5 2.6z"/>
<path d="M885.5 286.4l3 0l-1.5 2.6z"/>
<path d="M889.5 286.4l3 0l-1.5 2.6z"/>
<path d="M893.5 286.4l3 0l-1.5 2.6z"/>
<path d="M897.5 286.4l3 0l-1.5 2.6z"/>
<rect x="912.1" y="310.4" width="24.9" height="2.2"/>
<path d="M912.1 312.4l3 0l-1.5 2.6z"/>
<path d="M916.1 312.4l3 0l-1.5 2.6z"/>
<path d="M920.1 312.4l3 0l-1.5 2.6z"/>
<path d="M924.1 312.4l3 0l-1.5 2.6z"/>
<path d="M928.1 312.4l3 0l-1.5 2.6z"/>
<path d="M932.1 312.4l3 0l-1.5 2.6z"/>
<rect x="940.3" y="314.3" width="17" height="2.2"/>
<path d="M940.3 316.3l3 0l-1.5 2.6z"/>
<path d="M944.3 316.3l3 0l-1.5 2.6z"/>
<path d="M948.3 316.3l3 0l-1.5 2.6z"/>
<path d="M952.3 316.3l3 0l-1.5 2.6z"/>
<rect x="972.4" y="281.4" width="8.4" height="2.2"/>
<path d="M972.4 283.4l3 0l-1.5 2.6z"/>
<path d="M976.4 283.4l3 0l-1.5 2.6z"/>
<rect x="984.1" y="281.4" width="6.1" height="2.2"/>
<path d="M984.1 283.4l3 0l-1.5 2.6z"/>
<rect x="1004.5" y="230.5" width="7.6" height="2.2"/>
<path d="M1004.5 232.5l3 0l-1.5 2.6z"/>
<path d="M1008.5 232.5l3 0l-1.5 2.6z"/>
<rect x="1015.5" y="230.5" width="10.7" height="2.2"/>
<path d="M1015.5 232.5l3 0l-1.5 2.6z"/>
<path d="M1019.5 232.5l3 0l-1.5 2.6z"/>
<rect x="1026.4" y="232" width="10.8" height="2.2"/>
<path d="M1026.4 234l3 0l-1.5 2.6z"/>
<path d="M1030.4 234l3 0l-1.5 2.6z"/>
<rect x="1080" y="265.7" width="21.5" height="2.2"/>
<path d="M1080 267.7l3 0l-1.5 2.6z"/>
<path d="M1084 267.7l3 0l-1.5 2.6z"/>
<path d="M1088 267.7l3 0l-1.5 2.6z"/>
<path d="M1092 267.7l3 0l-1.5 2.6z"/>
<path d="M1096 267.7l3 0l-1.5 2.6z"/>
<path d="M147 230l8 0l-4 7z"/>
<ellipse cx="151" cy="231" rx="4" ry="2.5"/>
<path d="M222 270l8 0l-4 7z"/>
<ellipse cx="226" cy="271" rx="4" ry="2.5"/>
<path d="M279 332.6l8 0l-4 7z"/>
<ellipse cx="283" cy="333.6" rx="4" ry="2.5"/>
<path d="M312 331l8 0l-4 7z"/>
<ellipse cx="316" cy="332" rx="4" ry="2.5"/>
<path d="M321.6 296.6l8 0l-4 7z"/>
<ellipse cx="325.6" cy="297.6" rx="4" ry="2.5"/>
<path d="M359 283l8 0l-4 7z"/>
<ellipse cx="363" cy="284" rx="4" ry="2.5"/>
<path d="M800 226.8l8 0l-4 7z"/>
<ellipse cx="804" cy="227.8" rx="4" ry="2.5"/>
<path d="M912 309.8l8 0l-4 7z"/>
<ellipse cx="916" cy="310.8" rx="4" ry="2.5"/>
<path d="M989.4 257.5l8 0l-4 7z"/>
<ellipse cx="993.4" cy="258.5" rx="4" ry="2.5"/>
</g>
<g fill="#0a14d0" shape-rendering="crispEdges">
<rect x="108" y="222" width="1" height="10"/>
<rect x="119" y="205" width="1" height="14"/>
<rect x="632" y="160" width="1" height="16"/>
<rect x="636" y="155" width="1" height="15"/>
<rect x="640" y="150" width="1" height="15"/>
<rect x="644" y="145" width="1" height="13"/>
<rect x="856" y="252" width="1" height="20"/>
<rect x="868" y="248" width="1" height="20"/>
<rect x="884" y="245" width="1" height="17"/>
<rect x="896" y="250" width="1" height="10"/>
<rect x="900" y="253" width="1" height="19"/>
<rect x="928" y="252" width="1" height="23"/>
<rect x="932" y="252" width="1" height="24"/>
<rect x="944" y="257" width="1" height="19"/>
<rect x="956" y="262" width="1" height="8"/>
<rect x="988" y="235" width="1" height="8"/>
<rect x="992" y="230" width="1" height="12"/>
<rect x="1096" y="209" width="1" height="21"/>
<rect x="1104" y="226" width="1" height="15"/>
<rect x="292" y="296" width="1" height="25"/>
<rect x="436" y="215" width="1" height="13"/>
<rect x="684" y="150" width="1" height="13"/>
<rect x="724" y="140" width="1" height="16"/>
<rect x="740" y="128" width="1" height="13"/>
</g>
<g shape-rendering="crispEdges">
<rect x="0" y="280.6" width="1" height="12.5" fill="#35c035"/>
<rect x="-1" y="280.6" width="3" height="11" fill="#1c5c1c"/>
<rect x="-1" y="280.6" width="1" height="11" fill="#48e048"/>
<rect x="1" y="280.6" width="1" height="11" fill="#48e070"/>
<rect x="4" y="278.9" width="1" height="13.3" fill="#35c035"/>
<rect x="3" y="280.3" width="3" height="11" fill="#1c5c1c"/>
<rect x="3" y="280.3" width="1" height="11" fill="#48e048"/>
<rect x="5" y="280.3" width="1" height="11" fill="#48e070"/>
<rect x="8" y="281" width="1" height="12.5" fill="#35c035"/>
<rect x="7" y="281.4" width="3" height="11" fill="#1c5c1c"/>
<rect x="7" y="281.4" width="1" height="11" fill="#48e048"/>
<rect x="9" y="281.4" width="1" height="11" fill="#48e070"/>
<rect x="12" y="279.7" width="1" height="14.5" fill="#35c035"/>
<rect x="11" y="280.6" width="3" height="11" fill="#1c5c1c"/>
<rect x="11" y="280.6" width="1" height="11" fill="#48e048"/>
<rect x="13" y="280.6" width="1" height="11" fill="#48e070"/>
<rect x="16" y="270" width="1" height="24.3" fill="#35c035"/>
<rect x="15" y="270" width="3" height="22" fill="#1c5c1c"/>
<rect x="15" y="270" width="1" height="22" fill="#48e048"/>
<rect x="17" y="270" width="1" height="22" fill="#48e070"/>
<rect x="20" y="264.9" width="1" height="8.9" fill="#d03020"/>
<rect x="19" y="267.4" width="3" height="6" fill="#6a7a18"/>
<rect x="19" y="267.4" width="1" height="6" fill="#60e030"/>
<rect x="21" y="267.4" width="1" height="6" fill="#e0b428"/>
<rect x="24" y="265.8" width="1" height="10.9" fill="#d03020"/>
<rect x="23" y="268.6" width="3" height="6" fill="#6a7a18"/>
<rect x="23" y="268.6" width="1" height="6" fill="#60e030"/>
<rect x="25" y="268.6" width="1" height="6" fill="#e0b428"/>
<rect x="28" y="265.1" width="1" height="9.6" fill="#d03020"/>
<rect x="27" y="267.8" width="3" height="6" fill="#6a7a18"/>
<rect x="27" y="267.8" width="1" height="6" fill="#60e030"/>
<rect x="29" y="267.8" width="1" height="6" fill="#e0b428"/>
<rect x="32" y="267.2" width="1" height="8.3" fill="#35c035"/>
<rect x="31" y="268.3" width="3" height="6" fill="#1c5c1c"/>
<rect x="31" y="268.3" width="1" height="6" fill="#48e048"/>
<rect x="33" y="268.3" width="1" height="6" fill="#48e070"/>
<rect x="36" y="264.7" width="1" height="10.8" fill="#35c035"/>
<rect x="35" y="267.6" width="3" height="6" fill="#1c5c1c"/>
<rect x="35" y="267.6" width="1" height="6" fill="#48e048"/>
<rect x="37" y="267.6" width="1" height="6" fill="#48e070"/>
<rect x="40" y="266.8" width="1" height="8.4" fill="#35c035"/>
<rect x="39" y="267.9" width="3" height="6" fill="#1c5c1c"/>
<rect x="39" y="267.9" width="1" height="6" fill="#48e048"/>
<rect x="41" y="267.9" width="1" height="6" fill="#48e070"/>
<rect x="44" y="254.8" width="1" height="13" fill="#35c035"/>
<rect x="43" y="255.6" width="3" height="12" fill="#1c5c1c"/>
<rect x="43" y="255.6" width="1" height="12" fill="#48e048"/>
<rect x="45" y="255.6" width="1" height="12" fill="#48e070"/>
<rect x="48" y="254.9" width="1" height="14.8" fill="#35c035"/>
<rect x="47" y="255.2" width="3" height="12" fill="#1c5c1c"/>
<rect x="47" y="255.2" width="1" height="12" fill="#48e048"/>
<rect x="49" y="255.2" width="1" height="12" fill="#48e070"/>
<rect x="52" y="254.5" width="1" height="15.7" fill="#35c035"/>
<rect x="51" y="255.3" width="3" height="12" fill="#1c5c1c"/>
<rect x="51" y="255.3" width="1" height="12" fill="#48e048"/>
<rect x="53" y="255.3" width="1" height="12" fill="#48e070"/>
<rect x="56" y="254.9" width="1" height="13.5" fill="#35c035"/>
<rect x="55" y="255.6" width="3" height="12" fill="#1c5c1c"/>
<rect x="55" y="255.6" width="1" height="12" fill="#48e048"/>
<rect x="57" y="255.6" width="1" height="12" fill="#48e070"/>
<rect x="60" y="254.6" width="1" height="14.1" fill="#35c035"/>
<rect x="59" y="256.2" width="3" height="12" fill="#1c5c1c"/>
<rect x="59" y="256.2" width="1" height="12" fill="#48e048"/>
<rect x="61" y="256.2" width="1" height="12" fill="#48e070"/>
<rect x="64" y="265.9" width="1" height="18" fill="#d03020"/>
<rect x="63" y="267" width="3" height="14" fill="#6a7a18"/>
<rect x="63" y="267" width="1" height="14" fill="#60e030"/>
<rect x="65" y="267" width="1" height="14" fill="#e0b428"/>
<rect x="68" y="276.8" width="1" height="23.6" fill="#d03020"/>
<rect x="67" y="279.5" width="3" height="18.5" fill="#6a7a18"/>
<rect x="67" y="279.5" width="1" height="18.5" fill="#60e030"/>
<rect x="69" y="279.5" width="1" height="18.5" fill="#e0b428"/>
<rect x="72" y="277.6" width="1" height="23.1" fill="#d03020"/>
<rect x="71" y="279.5" width="3" height="18.5" fill="#6a7a18"/>
<rect x="71" y="279.5" width="1" height="18.5" fill="#60e030"/>
<rect x="73" y="279.5" width="1" height="18.5" fill="#e0b428"/>
<rect x="76" y="283.2" width="1" height="18.5" fill="#d03020"/>
<rect x="75" y="286" width="3" height="14" fill="#6a7a18"/>
<rect x="75" y="286" width="1" height="14" fill="#60e030"/>
<rect x="77" y="286" width="1" height="14" fill="#e0b428"/>
<rect x="80" y="274.8" width="1" height="11.3" fill="#35c035"/>
<rect x="79" y="277" width="3" height="9" fill="#1c5c1c"/>
<rect x="79" y="277" width="1" height="9" fill="#48e048"/>
<rect x="81" y="277" width="1" height="9" fill="#48e070"/>
<rect x="84" y="274.8" width="1" height="12.5" fill="#35c035"/>
<rect x="83" y="277" width="3" height="9" fill="#1c5c1c"/>
<rect x="83" y="277" width="1" height="9" fill="#48e048"/>
<rect x="85" y="277" width="1" height="9" fill="#48e070"/>
<rect x="88" y="254.7" width="1" height="28.2" fill="#35c035"/>
<rect x="87" y="257" width="3" height="24" fill="#1c5c1c"/>
<rect x="87" y="257" width="1" height="24" fill="#48e048"/>
<rect x="89" y="257" width="1" height="24" fill="#48e070"/>
<rect x="92" y="246.1" width="1" height="12" fill="#35c035"/>
<rect x="91" y="247" width="3" height="11" fill="#1c5c1c"/>
<rect x="91" y="247" width="1" height="11" fill="#48e048"/>
<rect x="93" y="247" width="1" height="11" fill="#48e070"/>
<rect x="96" y="244.2" width="1" height="14.2" fill="#35c035"/>
<rect x="95" y="247" width="3" height="11" fill="#1c5c1c"/>
<rect x="95" y="247" width="1" height="11" fill="#48e048"/>
<rect x="97" y="247" width="1" height="11" fill="#48e070"/>
<rect x="100" y="238.1" width="1" height="8.9" fill="#35c035"/>
<rect x="99" y="239.6" width="3" height="6.5" fill="#1c5c1c"/>
<rect x="99" y="239.6" width="1" height="6.5" fill="#48e048"/>
<rect x="101" y="239.6" width="1" height="6.5" fill="#48e070"/>
<rect x="104" y="231.1" width="1" height="11.1" fill="#35c035"/>
<rect x="103" y="232" width="3" height="8" fill="#1c5c1c"/>
<rect x="103" y="232" width="1" height="8" fill="#48e048"/>
<rect x="105" y="232" width="1" height="8" fill="#48e070"/>
<rect x="108" y="229.1" width="1" height="11.7" fill="#35c035"/>
<rect x="107" y="232" width="3" height="8" fill="#1c5c1c"/>
<rect x="107" y="232" width="1" height="8" fill="#48e048"/>
<rect x="109" y="232" width="1" height="8" fill="#48e070"/>
<rect x="112" y="218.5" width="1" height="18.4" fill="#35c035"/>
<rect x="111" y="220.5" width="3" height="15.5" fill="#1c5c1c"/>
<rect x="111" y="220.5" width="1" height="15.5" fill="#48e048"/>
<rect x="113" y="220.5" width="1" height="15.5" fill="#48e070"/>
<rect x="116" y="218" width="1" height="4.1" fill="#35c035"/>
<rect x="115" y="218.6" width="3" height="3" fill="#1c5c1c"/>
<rect x="115" y="218.6" width="1" height="3" fill="#48e048"/>
<rect x="117" y="218.6" width="1" height="3" fill="#48e070"/>
<rect x="120" y="218.7" width="1" height="3.4" fill="#d03020"/>
<rect x="119" y="218.9" width="3" height="3" fill="#6a7a18"/>
<rect x="119" y="218.9" width="1" height="3" fill="#60e030"/>
<rect x="121" y="218.9" width="1" height="3" fill="#e0b428"/>
<rect x="124" y="211.4" width="1" height="11.8" fill="#35c035"/>
<rect x="123" y="212" width="3" height="8.5" fill="#1c5c1c"/>
<rect x="123" y="212" width="1" height="8.5" fill="#48e048"/>
<rect x="125" y="212" width="1" height="8.5" fill="#48e070"/>
<rect x="128" y="205" width="1" height="9.2" fill="#35c035"/>
<rect x="127" y="206.5" width="3" height="7" fill="#1c5c1c"/>
<rect x="127" y="206.5" width="1" height="7" fill="#48e048"/>
<rect x="129" y="206.5" width="1" height="7" fill="#48e070"/>
<rect x="132" y="203.8" width="1" height="31.2" fill="#d03020"/>
<rect x="131" y="206.5" width="3" height="25.5" fill="#6a7a18"/>
<rect x="131" y="206.5" width="1" height="25.5" fill="#60e030"/>
<rect x="133" y="206.5" width="1" height="25.5" fill="#e0b428"/>
<rect x="136" y="224.7" width="1" height="11.8" fill="#d03020"/>
<rect x="135" y="226" width="3" height="10" fill="#6a7a18"/>
<rect x="135" y="226" width="1" height="10" fill="#60e030"/>
<rect x="137" y="226" width="1" height="10" fill="#e0b428"/>
<rect x="140" y="226.2" width="1" height="4.8" fill="#d03020"/>
<rect x="139" y="226.8" width="3" height="4" fill="#6a7a18"/>
<rect x="139" y="226.8" width="1" height="4" fill="#60e030"/>
<rect x="141" y="226.8" width="1" height="4" fill="#e0b428"/>
<rect x="144" y="225.7" width="1" height="5.3" fill="#d03020"/>
<rect x="143" y="226.7" width="3" height="4" fill="#6a7a18"/>
<rect x="143" y="226.7" width="1" height="4" fill="#60e030"/>
<rect x="145" y="226.7" width="1" height="4" fill="#e0b428"/>
<rect x="148" y="225.5" width="1" height="5.5" fill="#35c035"/>
<rect x="147" y="226.2" width="3" height="4" fill="#1c5c1c"/>
<rect x="147" y="226.2" width="1" height="4" fill="#48e048"/>
<rect x="149" y="226.2" width="1" height="4" fill="#48e070"/>
<rect x="152" y="224.3" width="1" height="8.4" fill="#35c035"/>
<rect x="151" y="226" width="3" height="4" fill="#1c5c1c"/>
<rect x="151" y="226" width="1" height="4" fill="#48e048"/>
<rect x="153" y="226" width="1" height="4" fill="#48e070"/>
<rect x="156" y="220.8" width="1" height="15.1" fill="#d03020"/>
<rect x="155" y="223" width="3" height="11.6" fill="#6a7a18"/>
<rect x="155" y="223" width="1" height="11.6" fill="#60e030"/>
<rect x="157" y="223" width="1" height="11.6" fill="#e0b428"/>
<rect x="160" y="228.5" width="1" height="9.8" fill="#35c035"/>
<rect x="159" y="229.7" width="3" height="7" fill="#1c5c1c"/>
<rect x="159" y="229.7" width="1" height="7" fill="#48e048"/>
<rect x="161" y="229.7" width="1" height="7" fill="#48e070"/>
<rect x="164" y="228.6" width="1" height="9.1" fill="#35c035"/>
<rect x="163" y="229.8" width="3" height="7" fill="#1c5c1c"/>
<rect x="163" y="229.8" width="1" height="7" fill="#48e048"/>
<rect x="165" y="229.8" width="1" height="7" fill="#48e070"/>
<rect x="168" y="228.4" width="1" height="8" fill="#35c035"/>
<rect x="167" y="228.6" width="3" height="7" fill="#1c5c1c"/>
<rect x="167" y="228.6" width="1" height="7" fill="#48e048"/>
<rect x="169" y="228.6" width="1" height="7" fill="#48e070"/>
<rect x="172" y="225.1" width="1" height="23.3" fill="#d03020"/>
<rect x="171" y="228" width="3" height="20" fill="#6a7a18"/>
<rect x="171" y="228" width="1" height="20" fill="#60e030"/>
<rect x="173" y="228" width="1" height="20" fill="#e0b428"/>
<rect x="176" y="237.5" width="1" height="10.9" fill="#35c035"/>
<rect x="175" y="239" width="3" height="7.5" fill="#1c5c1c"/>
<rect x="175" y="239" width="1" height="7.5" fill="#48e048"/>
<rect x="177" y="239" width="1" height="7.5" fill="#48e070"/>
<rect x="180" y="229.9" width="1" height="12.3" fill="#35c035"/>
<rect x="179" y="232.5" width="3" height="9.1" fill="#1c5c1c"/>
<rect x="179" y="232.5" width="1" height="9.1" fill="#48e048"/>
<rect x="181" y="232.5" width="1" height="9.1" fill="#48e070"/>
<rect x="184" y="231.7" width="1" height="4.1" fill="#d03020"/>
<rect x="183" y="232" width="3" height="3.5" fill="#6a7a18"/>
<rect x="183" y="232" width="1" height="3.5" fill="#60e030"/>
<rect x="185" y="232" width="1" height="3.5" fill="#e0b428"/>
<rect x="188" y="232.2" width="1" height="4.5" fill="#35c035"/>
<rect x="187" y="232.7" width="3" height="3.5" fill="#1c5c1c"/>
<rect x="187" y="232.7" width="1" height="3.5" fill="#48e048"/>
<rect x="189" y="232.7" width="1" height="3.5" fill="#48e070"/>
<rect x="192" y="224.8" width="1" height="13.4" fill="#35c035"/>
<rect x="191" y="227.7" width="3" height="8" fill="#1c5c1c"/>
<rect x="191" y="227.7" width="1" height="8" fill="#48e048"/>
<rect x="193" y="227.7" width="1" height="8" fill="#48e070"/>
<rect x="196" y="225.4" width="1" height="10.7" fill="#35c035"/>
<rect x="195" y="228" width="3" height="8" fill="#1c5c1c"/>
<rect x="195" y="228" width="1" height="8" fill="#48e048"/>
<rect x="197" y="228" width="1" height="8" fill="#48e070"/>
<rect x="200" y="235.4" width="1" height="12.7" fill="#d03020"/>
<rect x="199" y="235.5" width="3" height="10.5" fill="#6a7a18"/>
<rect x="199" y="235.5" width="1" height="10.5" fill="#60e030"/>
<rect x="201" y="235.5" width="1" height="10.5" fill="#e0b428"/>
<rect x="204" y="233.1" width="1" height="14.6" fill="#d03020"/>
<rect x="203" y="235.8" width="3" height="10.5" fill="#6a7a18"/>
<rect x="203" y="235.8" width="1" height="10.5" fill="#60e030"/>
<rect x="205" y="235.8" width="1" height="10.5" fill="#e0b428"/>
<rect x="208" y="235.2" width="1" height="35.8" fill="#d03020"/>
<rect x="207" y="237" width="3" height="34" fill="#6a7a18"/>
<rect x="207" y="237" width="1" height="34" fill="#60e030"/>
<rect x="209" y="237" width="1" height="34" fill="#e0b428"/>
<rect x="212" y="261.5" width="1" height="13.3" fill="#d03020"/>
<rect x="211" y="262.7" width="3" height="9.3" fill="#6a7a18"/>
<rect x="211" y="262.7" width="1" height="9.3" fill="#60e030"/>
<rect x="213" y="262.7" width="1" height="9.3" fill="#e0b428"/>
<rect x="216" y="257.8" width="1" height="12" fill="#d03020"/>
<rect x="215" y="260.2" width="3" height="7" fill="#6a7a18"/>
<rect x="215" y="260.2" width="1" height="7" fill="#60e030"/>
<rect x="217" y="260.2" width="1" height="7" fill="#e0b428"/>
<rect x="220" y="257.3" width="1" height="10.7" fill="#35c035"/>
<rect x="219" y="260.3" width="3" height="7" fill="#1c5c1c"/>
<rect x="219" y="260.3" width="1" height="7" fill="#48e048"/>
<rect x="221" y="260.3" width="1" height="7" fill="#48e070"/>
<rect x="224" y="253.7" width="1" height="12.3" fill="#35c035"/>
<rect x="223" y="254" width="3" height="11.5" fill="#1c5c1c"/>
<rect x="223" y="254" width="1" height="11.5" fill="#48e048"/>
<rect x="225" y="254" width="1" height="11.5" fill="#48e070"/>
<rect x="228" y="240" width="1" height="17.7" fill="#35c035"/>
<rect x="227" y="241.6" width="3" height="14.1" fill="#1c5c1c"/>
<rect x="227" y="241.6" width="1" height="14.1" fill="#48e048"/>
<rect x="229" y="241.6" width="1" height="14.1" fill="#48e070"/>
<rect x="232" y="229" width="1" height="16.2" fill="#35c035"/>
<rect x="231" y="231.8" width="3" height="11.2" fill="#1c5c1c"/>
<rect x="231" y="231.8" width="1" height="11.2" fill="#48e048"/>
<rect x="233" y="231.8" width="1" height="11.2" fill="#48e070"/>
<rect x="236" y="230.6" width="1" height="3.7" fill="#35c035"/>
<rect x="235" y="231.4" width="3" height="2" fill="#1c5c1c"/>
<rect x="235" y="231.4" width="1" height="2" fill="#48e048"/>
<rect x="237" y="231.4" width="1" height="2" fill="#48e070"/>
<rect x="240" y="230.5" width="1" height="3.2" fill="#35c035"/>
<rect x="239" y="231" width="3" height="2" fill="#1c5c1c"/>
<rect x="239" y="231" width="1" height="2" fill="#48e048"/>
<rect x="241" y="231" width="1" height="2" fill="#48e070"/>
<rect x="244" y="229.9" width="1" height="11.5" fill="#d03020"/>
<rect x="243" y="230" width="3" height="9" fill="#6a7a18"/>
<rect x="243" y="230" width="1" height="9" fill="#60e030"/>
<rect x="245" y="230" width="1" height="9" fill="#e0b428"/>
<rect x="248" y="236.7" width="1" height="40.1" fill="#d03020"/>
<rect x="247" y="237.4" width="3" height="36.6" fill="#6a7a18"/>
<rect x="247" y="237.4" width="1" height="36.6" fill="#60e030"/>
<rect x="249" y="237.4" width="1" height="36.6" fill="#e0b428"/>
<rect x="252" y="266.1" width="1" height="11.5" fill="#d03020"/>
<rect x="251" y="268" width="3" height="8.7" fill="#6a7a18"/>
<rect x="251" y="268" width="1" height="8.7" fill="#60e030"/>
<rect x="253" y="268" width="1" height="8.7" fill="#e0b428"/>
<rect x="256" y="267.6" width="1" height="23.9" fill="#d03020"/>
<rect x="255" y="268" width="3" height="22.8" fill="#6a7a18"/>
<rect x="255" y="268" width="1" height="22.8" fill="#60e030"/>
<rect x="257" y="268" width="1" height="22.8" fill="#e0b428"/>
<rect x="260" y="285.1" width="1" height="29" fill="#d03020"/>
<rect x="259" y="287" width="3" height="25" fill="#6a7a18"/>
<rect x="259" y="287" width="1" height="25" fill="#60e030"/>
<rect x="261" y="287" width="1" height="25" fill="#e0b428"/>
<rect x="264" y="307.4" width="1" height="5.5" fill="#35c035"/>
<rect x="263" y="307.7" width="3" height="5" fill="#1c5c1c"/>
<rect x="263" y="307.7" width="1" height="5" fill="#48e048"/>
<rect x="265" y="307.7" width="1" height="5" fill="#48e070"/>
<rect x="268" y="310.4" width="1" height="44.1" fill="#d03020"/>
<rect x="267" y="312" width="3" height="40.8" fill="#6a7a18"/>
<rect x="267" y="312" width="1" height="40.8" fill="#60e030"/>
<rect x="269" y="312" width="1" height="40.8" fill="#e0b428"/>
<rect x="272" y="318.8" width="1" height="35.8" fill="#d03020"/>
<rect x="271" y="320" width="3" height="34" fill="#6a7a18"/>
<rect x="271" y="320" width="1" height="34" fill="#60e030"/>
<rect x="273" y="320" width="1" height="34" fill="#e0b428"/>
<rect x="276" y="315" width="1" height="20.6" fill="#35c035"/>
<rect x="275" y="316.8" width="3" height="18.8" fill="#1c5c1c"/>
<rect x="275" y="316.8" width="1" height="18.8" fill="#48e048"/>
<rect x="277" y="316.8" width="1" height="18.8" fill="#48e070"/>
<rect x="280" y="315.1" width="1" height="21.9" fill="#d03020"/>
<rect x="279" y="316" width="3" height="19.6" fill="#6a7a18"/>
<rect x="279" y="316" width="1" height="19.6" fill="#60e030"/>
<rect x="281" y="316" width="1" height="19.6" fill="#e0b428"/>
<rect x="284" y="296.7" width="1" height="22" fill="#35c035"/>
<rect x="283" y="299.6" width="3" height="17.2" fill="#1c5c1c"/>
<rect x="283" y="299.6" width="1" height="17.2" fill="#48e048"/>
<rect x="285" y="299.6" width="1" height="17.2" fill="#48e070"/>
<rect x="288" y="297.6" width="1" height="10.1" fill="#d03020"/>
<rect x="287" y="300.3" width="3" height="6" fill="#6a7a18"/>
<rect x="287" y="300.3" width="1" height="6" fill="#60e030"/>
<rect x="289" y="300.3" width="1" height="6" fill="#e0b428"/>
<rect x="292" y="298.3" width="1" height="18.4" fill="#d03020"/>
<rect x="291" y="299" width="3" height="17" fill="#6a7a18"/>
<rect x="291" y="299" width="1" height="17" fill="#60e030"/>
<rect x="293" y="299" width="1" height="17" fill="#e0b428"/>
<rect x="296" y="307.6" width="1" height="28.5" fill="#d03020"/>
<rect x="295" y="310.5" width="3" height="23.5" fill="#6a7a18"/>
<rect x="295" y="310.5" width="1" height="23.5" fill="#60e030"/>
<rect x="297" y="310.5" width="1" height="23.5" fill="#e0b428"/>
<rect x="300" y="311.1" width="1" height="24.6" fill="#d03020"/>
<rect x="299" y="312" width="3" height="23.6" fill="#6a7a18"/>
<rect x="299" y="312" width="1" height="23.6" fill="#60e030"/>
<rect x="301" y="312" width="1" height="23.6" fill="#e0b428"/>
<rect x="304" y="306.8" width="1" height="8.5" fill="#d03020"/>
<rect x="303" y="308.3" width="3" height="5" fill="#6a7a18"/>
<rect x="303" y="308.3" width="1" height="5" fill="#60e030"/>
<rect x="305" y="308.3" width="1" height="5" fill="#e0b428"/>
<rect x="308" y="307.5" width="1" height="7" fill="#d03020"/>
<rect x="307" y="308.8" width="3" height="5" fill="#6a7a18"/>
<rect x="307" y="308.8" width="1" height="5" fill="#60e030"/>
<rect x="309" y="308.8" width="1" height="5" fill="#e0b428"/>
<rect x="312" y="316" width="1" height="9.8" fill="#d03020"/>
<rect x="311" y="318" width="3" height="5" fill="#6a7a18"/>
<rect x="311" y="318" width="1" height="5" fill="#60e030"/>
<rect x="313" y="318" width="1" height="5" fill="#e0b428"/>
<rect x="316" y="300.3" width="1" height="21.3" fill="#35c035"/>
<rect x="315" y="301" width="3" height="20.5" fill="#1c5c1c"/>
<rect x="315" y="301" width="1" height="20.5" fill="#48e048"/>
<rect x="317" y="301" width="1" height="20.5" fill="#48e070"/>
<rect x="320" y="287.6" width="1" height="14.7" fill="#35c035"/>
<rect x="319" y="288.6" width="3" height="12.4" fill="#1c5c1c"/>
<rect x="319" y="288.6" width="1" height="12.4" fill="#48e048"/>
<rect x="321" y="288.6" width="1" height="12.4" fill="#48e070"/>
<rect x="324" y="278.8" width="1" height="11.8" fill="#35c035"/>
<rect x="323" y="280.8" width="3" height="9.2" fill="#1c5c1c"/>
<rect x="323" y="280.8" width="1" height="9.2" fill="#48e048"/>
<rect x="325" y="280.8" width="1" height="9.2" fill="#48e070"/>
<rect x="328" y="270.6" width="1" height="13.6" fill="#35c035"/>
<rect x="327" y="273" width="3" height="9" fill="#1c5c1c"/>
<rect x="327" y="273" width="1" height="9" fill="#48e048"/>
<rect x="329" y="273" width="1" height="9" fill="#48e070"/>
<rect x="332" y="271.8" width="1" height="6.7" fill="#35c035"/>
<rect x="331" y="273.3" width="3" height="4.6" fill="#1c5c1c"/>
<rect x="331" y="273.3" width="1" height="4.6" fill="#48e048"/>
<rect x="333" y="273.3" width="1" height="4.6" fill="#48e070"/>
<rect x="336" y="272.8" width="1" height="8.6" fill="#35c035"/>
<rect x="335" y="275.7" width="3" height="4.8" fill="#1c5c1c"/>
<rect x="335" y="275.7" width="1" height="4.8" fill="#48e048"/>
<rect x="337" y="275.7" width="1" height="4.8" fill="#48e070"/>
<rect x="340" y="266.5" width="1" height="15" fill="#35c035"/>
<rect x="339" y="269" width="3" height="11.8" fill="#1c5c1c"/>
<rect x="339" y="269" width="1" height="11.8" fill="#48e048"/>
<rect x="341" y="269" width="1" height="11.8" fill="#48e070"/>
<rect x="344" y="269.1" width="1" height="10.7" fill="#35c035"/>
<rect x="343" y="269.8" width="3" height="7.8" fill="#1c5c1c"/>
<rect x="343" y="269.8" width="1" height="7.8" fill="#48e048"/>
<rect x="345" y="269.8" width="1" height="7.8" fill="#48e070"/>
<rect x="348" y="275.1" width="1" height="20.7" fill="#d03020"/>
<rect x="347" y="276" width="3" height="17" fill="#6a7a18"/>
<rect x="347" y="276" width="1" height="17" fill="#60e030"/>
<rect x="349" y="276" width="1" height="17" fill="#e0b428"/>
<rect x="352" y="274.5" width="1" height="19" fill="#d03020"/>
<rect x="351" y="276" width="3" height="17" fill="#6a7a18"/>
<rect x="351" y="276" width="1" height="17" fill="#60e030"/>
<rect x="353" y="276" width="1" height="17" fill="#e0b428"/>
<rect x="356" y="275.6" width="1" height="3.8" fill="#d03020"/>
<rect x="355" y="275.8" width="3" height="3" fill="#6a7a18"/>
<rect x="355" y="275.8" width="1" height="3" fill="#60e030"/>
<rect x="357" y="275.8" width="1" height="3" fill="#e0b428"/>
<rect x="360" y="276" width="1" height="4.9" fill="#35c035"/>
<rect x="359" y="276.8" width="3" height="3" fill="#1c5c1c"/>
<rect x="359" y="276.8" width="1" height="3" fill="#48e048"/>
<rect x="361" y="276.8" width="1" height="3" fill="#48e070"/>
<rect x="364" y="265.6" width="1" height="14" fill="#35c035"/>
<rect x="363" y="266" width="3" height="12.4" fill="#1c5c1c"/>
<rect x="363" y="266" width="1" height="12.4" fill="#48e048"/>
<rect x="365" y="266" width="1" height="12.4" fill="#48e070"/>
<rect x="368" y="253.4" width="1" height="16.3" fill="#35c035"/>
<rect x="367" y="254" width="3" height="12.7" fill="#1c5c1c"/>
<rect x="367" y="254" width="1" height="12.7" fill="#48e048"/>
<rect x="369" y="254" width="1" height="12.7" fill="#48e070"/>
<rect x="372" y="253.6" width="1" height="7" fill="#35c035"/>
<rect x="371" y="254" width="3" height="6.4" fill="#1c5c1c"/>
<rect x="371" y="254" width="1" height="6.4" fill="#48e048"/>
<rect x="373" y="254" width="1" height="6.4" fill="#48e070"/>
<rect x="376" y="254.7" width="1" height="6.1" fill="#d03020"/>
<rect x="375" y="254.9" width="3" height="4.7" fill="#6a7a18"/>
<rect x="375" y="254.9" width="1" height="4.7" fill="#60e030"/>
<rect x="377" y="254.9" width="1" height="4.7" fill="#e0b428"/>
<rect x="380" y="252.9" width="1" height="10" fill="#35c035"/>
<rect x="379" y="255.6" width="3" height="4.7" fill="#1c5c1c"/>
<rect x="379" y="255.6" width="1" height="4.7" fill="#48e048"/>
<rect x="381" y="255.6" width="1" height="4.7" fill="#48e070"/>
<rect x="384" y="253.5" width="1" height="5.1" fill="#d03020"/>
<rect x="383" y="254.3" width="3" height="3" fill="#6a7a18"/>
<rect x="383" y="254.3" width="1" height="3" fill="#60e030"/>
<rect x="385" y="254.3" width="1" height="3" fill="#e0b428"/>
<rect x="388" y="254.5" width="1" height="4.5" fill="#d03020"/>
<rect x="387" y="255.6" width="3" height="3" fill="#6a7a18"/>
<rect x="387" y="255.6" width="1" height="3" fill="#60e030"/>
<rect x="389" y="255.6" width="1" height="3" fill="#e0b428"/>
<rect x="392" y="249.4" width="1" height="13" fill="#35c035"/>
<rect x="391" y="250" width="3" height="9.6" fill="#1c5c1c"/>
<rect x="391" y="250" width="1" height="9.6" fill="#48e048"/>
<rect x="393" y="250" width="1" height="9.6" fill="#48e070"/>
<rect x="396" y="243.3" width="1" height="11.8" fill="#35c035"/>
<rect x="395" y="245.5" width="3" height="9.5" fill="#1c5c1c"/>
<rect x="395" y="245.5" width="1" height="9.5" fill="#48e048"/>
<rect x="397" y="245.5" width="1" height="9.5" fill="#48e070"/>
<rect x="400" y="242" width="1" height="7.7" fill="#35c035"/>
<rect x="399" y="244" width="3" height="4.6" fill="#1c5c1c"/>
<rect x="399" y="244" width="1" height="4.6" fill="#48e048"/>
<rect x="401" y="244" width="1" height="4.6" fill="#48e070"/>
<rect x="404" y="236.6" width="1" height="13" fill="#35c035"/>
<rect x="403" y="237.7" width="3" height="10.9" fill="#1c5c1c"/>
<rect x="403" y="237.7" width="1" height="10.9" fill="#48e048"/>
<rect x="405" y="237.7" width="1" height="10.9" fill="#48e070"/>
<rect x="408" y="234.5" width="1" height="3.4" fill="#d03020"/>
<rect x="407" y="234.7" width="3" height="3.2" fill="#6a7a18"/>
<rect x="407" y="234.7" width="1" height="3.2" fill="#60e030"/>
<rect x="409" y="234.7" width="1" height="3.2" fill="#e0b428"/>
<rect x="412" y="227.5" width="1" height="9.6" fill="#35c035"/>
<rect x="411" y="228.3" width="3" height="7.7" fill="#1c5c1c"/>
<rect x="411" y="228.3" width="1" height="7.7" fill="#48e048"/>
<rect x="413" y="228.3" width="1" height="7.7" fill="#48e070"/>
<rect x="416" y="220" width="1" height="10.2" fill="#35c035"/>
<rect x="415" y="222.9" width="3" height="7" fill="#1c5c1c"/>
<rect x="415" y="222.9" width="1" height="7" fill="#48e048"/>
<rect x="417" y="222.9" width="1" height="7" fill="#48e070"/>
<rect x="420" y="220.2" width="1" height="10.5" fill="#35c035"/>
<rect x="419" y="223.1" width="3" height="7" fill="#1c5c1c"/>
<rect x="419" y="223.1" width="1" height="7" fill="#48e048"/>
<rect x="421" y="223.1" width="1" height="7" fill="#48e070"/>
<rect x="424" y="228.5" width="1" height="11.3" fill="#d03020"/>
<rect x="423" y="229.5" width="3" height="7.8" fill="#6a7a18"/>
<rect x="423" y="229.5" width="1" height="7.8" fill="#60e030"/>
<rect x="425" y="229.5" width="1" height="7.8" fill="#e0b428"/>
<rect x="428" y="226.6" width="1" height="11.6" fill="#d03020"/>
<rect x="427" y="229.1" width="3" height="7.8" fill="#6a7a18"/>
<rect x="427" y="229.1" width="1" height="7.8" fill="#60e030"/>
<rect x="429" y="229.1" width="1" height="7.8" fill="#e0b428"/>
<rect x="432" y="227.7" width="1" height="2.6" fill="#d03020"/>
<rect x="431" y="227.8" width="3" height="2" fill="#6a7a18"/>
<rect x="431" y="227.8" width="1" height="2" fill="#60e030"/>
<rect x="433" y="227.8" width="1" height="2" fill="#e0b428"/>
<rect x="436" y="227.2" width="1" height="14.6" fill="#d03020"/>
<rect x="435" y="228.3" width="3" height="10.7" fill="#6a7a18"/>
<rect x="435" y="228.3" width="1" height="10.7" fill="#60e030"/>
<rect x="437" y="228.3" width="1" height="10.7" fill="#e0b428"/>
<rect x="440" y="231.4" width="1" height="7.7" fill="#d03020"/>
<rect x="439" y="232" width="3" height="6" fill="#6a7a18"/>
<rect x="439" y="232" width="1" height="6" fill="#60e030"/>
<rect x="441" y="232" width="1" height="6" fill="#e0b428"/>
<rect x="444" y="228" width="1" height="8.9" fill="#35c035"/>
<rect x="443" y="230.7" width="3" height="6.1" fill="#1c5c1c"/>
<rect x="443" y="230.7" width="1" height="6.1" fill="#48e048"/>
<rect x="445" y="230.7" width="1" height="6.1" fill="#48e070"/>
<rect x="448" y="228.7" width="1" height="9.8" fill="#35c035"/>
<rect x="447" y="230" width="3" height="6.1" fill="#1c5c1c"/>
<rect x="447" y="230" width="1" height="6.1" fill="#48e048"/>
<rect x="449" y="230" width="1" height="6.1" fill="#48e070"/>
<rect x="452" y="220.5" width="1" height="11" fill="#35c035"/>
<rect x="451" y="222.8" width="3" height="8.6" fill="#1c5c1c"/>
<rect x="451" y="222.8" width="1" height="8.6" fill="#48e048"/>
<rect x="453" y="222.8" width="1" height="8.6" fill="#48e070"/>
<rect x="456" y="225.5" width="1" height="2.1" fill="#d03020"/>
<rect x="455" y="225.6" width="3" height="2" fill="#6a7a18"/>
<rect x="455" y="225.6" width="1" height="2" fill="#60e030"/>
<rect x="457" y="225.6" width="1" height="2" fill="#e0b428"/>
<rect x="460" y="220.8" width="1" height="9.8" fill="#35c035"/>
<rect x="459" y="223.6" width="3" height="6.3" fill="#1c5c1c"/>
<rect x="459" y="223.6" width="1" height="6.3" fill="#48e048"/>
<rect x="461" y="223.6" width="1" height="6.3" fill="#48e070"/>
<rect x="464" y="217.5" width="1" height="10.2" fill="#35c035"/>
<rect x="463" y="219.7" width="3" height="5.3" fill="#1c5c1c"/>
<rect x="463" y="219.7" width="1" height="5.3" fill="#48e048"/>
<rect x="465" y="219.7" width="1" height="5.3" fill="#48e070"/>
<rect x="468" y="218.8" width="1" height="4.6" fill="#35c035"/>
<rect x="467" y="219.2" width="3" height="3.9" fill="#1c5c1c"/>
<rect x="467" y="219.2" width="1" height="3.9" fill="#48e048"/>
<rect x="469" y="219.2" width="1" height="3.9" fill="#48e070"/>
<rect x="472" y="217.8" width="1" height="5.8" fill="#d03020"/>
<rect x="471" y="218.9" width="3" height="3.9" fill="#6a7a18"/>
<rect x="471" y="218.9" width="1" height="3.9" fill="#60e030"/>
<rect x="473" y="218.9" width="1" height="3.9" fill="#e0b428"/>
<rect x="476" y="218.7" width="1" height="5.1" fill="#d03020"/>
<rect x="475" y="219" width="3" height="3.9" fill="#6a7a18"/>
<rect x="475" y="219" width="1" height="3.9" fill="#60e030"/>
<rect x="477" y="219" width="1" height="3.9" fill="#e0b428"/>
<rect x="480" y="219.3" width="1" height="4.6" fill="#35c035"/>
<rect x="479" y="219.7" width="3" height="3.9" fill="#1c5c1c"/>
<rect x="479" y="219.7" width="1" height="3.9" fill="#48e048"/>
<rect x="481" y="219.7" width="1" height="3.9" fill="#48e070"/>
<rect x="484" y="219.3" width="1" height="4.8" fill="#35c035"/>
<rect x="483" y="219.3" width="3" height="3.9" fill="#1c5c1c"/>
<rect x="483" y="219.3" width="1" height="3.9" fill="#48e048"/>
<rect x="485" y="219.3" width="1" height="3.9" fill="#48e070"/>
<rect x="488" y="217.1" width="1" height="10.9" fill="#d03020"/>
<rect x="487" y="219.8" width="3" height="6.2" fill="#6a7a18"/>
<rect x="487" y="219.8" width="1" height="6.2" fill="#60e030"/>
<rect x="489" y="219.8" width="1" height="6.2" fill="#e0b428"/>
<rect x="492" y="218.2" width="1" height="9.1" fill="#d03020"/>
<rect x="491" y="221" width="3" height="6.2" fill="#6a7a18"/>
<rect x="491" y="221" width="1" height="6.2" fill="#60e030"/>
<rect x="493" y="221" width="1" height="6.2" fill="#e0b428"/>
<rect x="496" y="220.3" width="1" height="21.1" fill="#d03020"/>
<rect x="495" y="221" width="3" height="19" fill="#6a7a18"/>
<rect x="495" y="221" width="1" height="19" fill="#60e030"/>
<rect x="497" y="221" width="1" height="19" fill="#e0b428"/>
<rect x="500" y="225.4" width="1" height="16.4" fill="#35c035"/>
<rect x="499" y="228.3" width="3" height="10.7" fill="#1c5c1c"/>
<rect x="499" y="228.3" width="1" height="10.7" fill="#48e048"/>
<rect x="501" y="228.3" width="1" height="10.7" fill="#48e070"/>
<rect x="504" y="225.5" width="1" height="2.8" fill="#35c035"/>
<rect x="503" y="225.9" width="3" height="2" fill="#1c5c1c"/>
<rect x="503" y="225.9" width="1" height="2" fill="#48e048"/>
<rect x="505" y="225.9" width="1" height="2" fill="#48e070"/>
<rect x="508" y="225.8" width="1" height="3.1" fill="#d03020"/>
<rect x="507" y="226.3" width="3" height="2" fill="#6a7a18"/>
<rect x="507" y="226.3" width="1" height="2" fill="#60e030"/>
<rect x="509" y="226.3" width="1" height="2" fill="#e0b428"/>
<rect x="512" y="225.1" width="1" height="3.3" fill="#35c035"/>
<rect x="511" y="226.2" width="3" height="2" fill="#1c5c1c"/>
<rect x="511" y="226.2" width="1" height="2" fill="#48e048"/>
<rect x="513" y="226.2" width="1" height="2" fill="#48e070"/>
<rect x="516" y="215.6" width="1" height="11.1" fill="#35c035"/>
<rect x="515" y="218" width="3" height="6.5" fill="#1c5c1c"/>
<rect x="515" y="218" width="1" height="6.5" fill="#48e048"/>
<rect x="517" y="218" width="1" height="6.5" fill="#48e070"/>
<rect x="520" y="215.5" width="1" height="11.3" fill="#35c035"/>
<rect x="519" y="218" width="3" height="6.5" fill="#1c5c1c"/>
<rect x="519" y="218" width="1" height="6.5" fill="#48e048"/>
<rect x="521" y="218" width="1" height="6.5" fill="#48e070"/>
<rect x="524" y="217.6" width="1" height="4.1" fill="#35c035"/>
<rect x="523" y="218.3" width="3" height="3" fill="#1c5c1c"/>
<rect x="523" y="218.3" width="1" height="3" fill="#48e048"/>
<rect x="525" y="218.3" width="1" height="3" fill="#48e070"/>
<rect x="528" y="218.9" width="1" height="3.8" fill="#d03020"/>
<rect x="527" y="219.3" width="3" height="3" fill="#6a7a18"/>
<rect x="527" y="219.3" width="1" height="3" fill="#60e030"/>
<rect x="529" y="219.3" width="1" height="3" fill="#e0b428"/>
<rect x="532" y="218.5" width="1" height="4" fill="#d03020"/>
<rect x="531" y="219.4" width="3" height="3" fill="#6a7a18"/>
<rect x="531" y="219.4" width="1" height="3" fill="#60e030"/>
<rect x="533" y="219.4" width="1" height="3" fill="#e0b428"/>
<rect x="536" y="212.9" width="1" height="10.4" fill="#35c035"/>
<rect x="535" y="213.5" width="3" height="7.5" fill="#1c5c1c"/>
<rect x="535" y="213.5" width="1" height="7.5" fill="#48e048"/>
<rect x="537" y="213.5" width="1" height="7.5" fill="#48e070"/>
<rect x="540" y="202.3" width="1" height="12.9" fill="#35c035"/>
<rect x="539" y="203" width="3" height="12" fill="#1c5c1c"/>
<rect x="539" y="203" width="1" height="12" fill="#48e048"/>
<rect x="541" y="203" width="1" height="12" fill="#48e070"/>
<rect x="544" y="202.3" width="1" height="7.6" fill="#35c035"/>
<rect x="543" y="202.4" width="3" height="5.8" fill="#1c5c1c"/>
<rect x="543" y="202.4" width="1" height="5.8" fill="#48e048"/>
<rect x="545" y="202.4" width="1" height="5.8" fill="#48e070"/>
<rect x="548" y="202.4" width="1" height="9.7" fill="#35c035"/>
<rect x="547" y="203.4" width="3" height="5.8" fill="#1c5c1c"/>
<rect x="547" y="203.4" width="1" height="5.8" fill="#48e048"/>
<rect x="549" y="203.4" width="1" height="5.8" fill="#48e070"/>
<rect x="552" y="203.2" width="1" height="4.7" fill="#35c035"/>
<rect x="551" y="204.2" width="3" height="2.5" fill="#1c5c1c"/>
<rect x="551" y="204.2" width="1" height="2.5" fill="#48e048"/>
<rect x="553" y="204.2" width="1" height="2.5" fill="#48e070"/>
<rect x="556" y="204.2" width="1" height="2.9" fill="#d03020"/>
<rect x="555" y="204.5" width="3" height="2.5" fill="#6a7a18"/>
<rect x="555" y="204.5" width="1" height="2.5" fill="#60e030"/>
<rect x="557" y="204.5" width="1" height="2.5" fill="#e0b428"/>
<rect x="560" y="204.3" width="1" height="3.2" fill="#35c035"/>
<rect x="559" y="204.4" width="3" height="2.5" fill="#1c5c1c"/>
<rect x="559" y="204.4" width="1" height="2.5" fill="#48e048"/>
<rect x="561" y="204.4" width="1" height="2.5" fill="#48e070"/>
<rect x="564" y="206.7" width="1" height="9.7" fill="#d03020"/>
<rect x="563" y="208.8" width="3" height="6.2" fill="#6a7a18"/>
<rect x="563" y="208.8" width="1" height="6.2" fill="#60e030"/>
<rect x="565" y="208.8" width="1" height="6.2" fill="#e0b428"/>
<rect x="568" y="208.1" width="1" height="8.2" fill="#d03020"/>
<rect x="567" y="208.8" width="3" height="6.2" fill="#6a7a18"/>
<rect x="567" y="208.8" width="1" height="6.2" fill="#60e030"/>
<rect x="569" y="208.8" width="1" height="6.2" fill="#e0b428"/>
<rect x="572" y="199.1" width="1" height="12.5" fill="#35c035"/>
<rect x="571" y="201" width="3" height="8.6" fill="#1c5c1c"/>
<rect x="571" y="201" width="1" height="8.6" fill="#48e048"/>
<rect x="573" y="201" width="1" height="8.6" fill="#48e070"/>
<rect x="576" y="198.8" width="1" height="13.4" fill="#35c035"/>
<rect x="575" y="201" width="3" height="8.6" fill="#1c5c1c"/>
<rect x="575" y="201" width="1" height="8.6" fill="#48e048"/>
<rect x="577" y="201" width="1" height="8.6" fill="#48e070"/>
<rect x="580" y="196.6" width="1" height="7.1" fill="#35c035"/>
<rect x="579" y="198.6" width="3" height="4.7" fill="#1c5c1c"/>
<rect x="579" y="198.6" width="1" height="4.7" fill="#48e048"/>
<rect x="581" y="198.6" width="1" height="4.7" fill="#48e070"/>
<rect x="584" y="195.8" width="1" height="8.1" fill="#35c035"/>
<rect x="583" y="198.3" width="3" height="4.7" fill="#1c5c1c"/>
<rect x="583" y="198.3" width="1" height="4.7" fill="#48e048"/>
<rect x="585" y="198.3" width="1" height="4.7" fill="#48e070"/>
<rect x="588" y="200.1" width="1" height="9" fill="#d03020"/>
<rect x="587" y="201.8" width="3" height="6.2" fill="#6a7a18"/>
<rect x="587" y="201.8" width="1" height="6.2" fill="#60e030"/>
<rect x="589" y="201.8" width="1" height="6.2" fill="#e0b428"/>
<rect x="592" y="203.5" width="1" height="20.1" fill="#d03020"/>
<rect x="591" y="205.7" width="3" height="17.3" fill="#6a7a18"/>
<rect x="591" y="205.7" width="1" height="17.3" fill="#60e030"/>
<rect x="593" y="205.7" width="1" height="17.3" fill="#e0b428"/>
<rect x="596" y="215.2" width="1" height="9.6" fill="#d03020"/>
<rect x="595" y="215.9" width="3" height="8.1" fill="#6a7a18"/>
<rect x="595" y="215.9" width="1" height="8.1" fill="#60e030"/>
<rect x="597" y="215.9" width="1" height="8.1" fill="#e0b428"/>
<rect x="600" y="215.9" width="1" height="3.2" fill="#35c035"/>
<rect x="599" y="216.1" width="3" height="2" fill="#1c5c1c"/>
<rect x="599" y="216.1" width="1" height="2" fill="#48e048"/>
<rect x="601" y="216.1" width="1" height="2" fill="#48e070"/>
<rect x="604" y="215.8" width="1" height="3.1" fill="#35c035"/>
<rect x="603" y="216.5" width="3" height="2" fill="#1c5c1c"/>
<rect x="603" y="216.5" width="1" height="2" fill="#48e048"/>
<rect x="605" y="216.5" width="1" height="2" fill="#48e070"/>
<rect x="608" y="212.3" width="1" height="10.5" fill="#35c035"/>
<rect x="607" y="213.5" width="3" height="6.3" fill="#1c5c1c"/>
<rect x="607" y="213.5" width="1" height="6.3" fill="#48e048"/>
<rect x="609" y="213.5" width="1" height="6.3" fill="#48e070"/>
<rect x="612" y="199.5" width="1" height="21" fill="#35c035"/>
<rect x="611" y="201" width="3" height="18.8" fill="#1c5c1c"/>
<rect x="611" y="201" width="1" height="18.8" fill="#48e048"/>
<rect x="613" y="201" width="1" height="18.8" fill="#48e070"/>
<rect x="616" y="197.4" width="1" height="3.8" fill="#35c035"/>
<rect x="615" y="198.3" width="3" height="2" fill="#1c5c1c"/>
<rect x="615" y="198.3" width="1" height="2" fill="#48e048"/>
<rect x="617" y="198.3" width="1" height="2" fill="#48e070"/>
<rect x="620" y="182" width="1" height="20.9" fill="#35c035"/>
<rect x="619" y="185" width="3" height="17.6" fill="#1c5c1c"/>
<rect x="619" y="185" width="1" height="17.6" fill="#48e048"/>
<rect x="621" y="185" width="1" height="17.6" fill="#48e070"/>
<rect x="624" y="183.6" width="1" height="21.5" fill="#35c035"/>
<rect x="623" y="185" width="3" height="17.6" fill="#1c5c1c"/>
<rect x="623" y="185" width="1" height="17.6" fill="#48e048"/>
<rect x="625" y="185" width="1" height="17.6" fill="#48e070"/>
<rect x="628" y="173.5" width="1" height="16.3" fill="#35c035"/>
<rect x="627" y="176" width="3" height="11" fill="#1c5c1c"/>
<rect x="627" y="176" width="1" height="11" fill="#48e048"/>
<rect x="629" y="176" width="1" height="11" fill="#48e070"/>
<rect x="632" y="173.4" width="1" height="3.4" fill="#d03020"/>
<rect x="631" y="173.4" width="3" height="3" fill="#6a7a18"/>
<rect x="631" y="173.4" width="1" height="3" fill="#60e030"/>
<rect x="633" y="173.4" width="1" height="3" fill="#e0b428"/>
<rect x="636" y="169.3" width="1" height="8.7" fill="#35c035"/>
<rect x="635" y="169.7" width="3" height="7.8" fill="#1c5c1c"/>
<rect x="635" y="169.7" width="1" height="7.8" fill="#48e048"/>
<rect x="637" y="169.7" width="1" height="7.8" fill="#48e070"/>
<rect x="640" y="162.1" width="1" height="12.5" fill="#35c035"/>
<rect x="639" y="165" width="3" height="7.8" fill="#1c5c1c"/>
<rect x="639" y="165" width="1" height="7.8" fill="#48e048"/>
<rect x="641" y="165" width="1" height="7.8" fill="#48e070"/>
<rect x="644" y="155.2" width="1" height="13.9" fill="#35c035"/>
<rect x="643" y="158" width="3" height="10" fill="#1c5c1c"/>
<rect x="643" y="158" width="1" height="10" fill="#48e048"/>
<rect x="645" y="158" width="1" height="10" fill="#48e070"/>
<rect x="648" y="159.2" width="1" height="5.5" fill="#d03020"/>
<rect x="647" y="160.2" width="3" height="3.9" fill="#6a7a18"/>
<rect x="647" y="160.2" width="1" height="3.9" fill="#60e030"/>
<rect x="649" y="160.2" width="1" height="3.9" fill="#e0b428"/>
<rect x="652" y="159.7" width="1" height="5.1" fill="#35c035"/>
<rect x="651" y="160" width="3" height="3.9" fill="#1c5c1c"/>
<rect x="651" y="160" width="1" height="3.9" fill="#48e048"/>
<rect x="653" y="160" width="1" height="3.9" fill="#48e070"/>
<rect x="656" y="160.6" width="1" height="9.5" fill="#d03020"/>
<rect x="655" y="163.4" width="3" height="6.3" fill="#6a7a18"/>
<rect x="655" y="163.4" width="1" height="6.3" fill="#60e030"/>
<rect x="657" y="163.4" width="1" height="6.3" fill="#e0b428"/>
<rect x="660" y="166.2" width="1" height="13.1" fill="#d03020"/>
<rect x="659" y="168" width="3" height="9.5" fill="#6a7a18"/>
<rect x="659" y="168" width="1" height="9.5" fill="#60e030"/>
<rect x="661" y="168" width="1" height="9.5" fill="#e0b428"/>
<rect x="664" y="167.3" width="1" height="6.5" fill="#35c035"/>
<rect x="663" y="168" width="3" height="4.7" fill="#1c5c1c"/>
<rect x="663" y="168" width="1" height="4.7" fill="#48e048"/>
<rect x="665" y="168" width="1" height="4.7" fill="#48e070"/>
<rect x="668" y="160.1" width="1" height="7.2" fill="#35c035"/>
<rect x="667" y="160.5" width="3" height="6.2" fill="#1c5c1c"/>
<rect x="667" y="160.5" width="1" height="6.2" fill="#48e048"/>
<rect x="669" y="160.5" width="1" height="6.2" fill="#48e070"/>
<rect x="672" y="159.7" width="1" height="8.8" fill="#35c035"/>
<rect x="671" y="160.5" width="3" height="6.2" fill="#1c5c1c"/>
<rect x="671" y="160.5" width="1" height="6.2" fill="#48e048"/>
<rect x="673" y="160.5" width="1" height="6.2" fill="#48e070"/>
<rect x="676" y="162.1" width="1" height="3.4" fill="#d03020"/>
<rect x="675" y="162.9" width="3" height="2.4" fill="#6a7a18"/>
<rect x="675" y="162.9" width="1" height="2.4" fill="#60e030"/>
<rect x="677" y="162.9" width="1" height="2.4" fill="#e0b428"/>
<rect x="680" y="162.2" width="1" height="2.8" fill="#d03020"/>
<rect x="679" y="162.2" width="3" height="2.4" fill="#6a7a18"/>
<rect x="679" y="162.2" width="1" height="2.4" fill="#60e030"/>
<rect x="681" y="162.2" width="1" height="2.4" fill="#e0b428"/>
<rect x="684" y="162.3" width="1" height="3.4" fill="#35c035"/>
<rect x="683" y="163.1" width="3" height="2.4" fill="#1c5c1c"/>
<rect x="683" y="163.1" width="1" height="2.4" fill="#48e048"/>
<rect x="685" y="163.1" width="1" height="2.4" fill="#48e070"/>
<rect x="688" y="162.5" width="1" height="3" fill="#35c035"/>
<rect x="687" y="162.9" width="3" height="2.4" fill="#1c5c1c"/>
<rect x="687" y="162.9" width="1" height="2.4" fill="#48e048"/>
<rect x="689" y="162.9" width="1" height="2.4" fill="#48e070"/>
<rect x="692" y="153.2" width="1" height="11.8" fill="#35c035"/>
<rect x="691" y="155.6" width="3" height="7.8" fill="#1c5c1c"/>
<rect x="691" y="155.6" width="1" height="7.8" fill="#48e048"/>
<rect x="693" y="155.6" width="1" height="7.8" fill="#48e070"/>
<rect x="696" y="155.3" width="1" height="2.2" fill="#d03020"/>
<rect x="695" y="155.4" width="3" height="2" fill="#6a7a18"/>
<rect x="695" y="155.4" width="1" height="2" fill="#60e030"/>
<rect x="697" y="155.4" width="1" height="2" fill="#e0b428"/>
<rect x="700" y="149.7" width="1" height="7.5" fill="#35c035"/>
<rect x="699" y="150.9" width="3" height="4.7" fill="#1c5c1c"/>
<rect x="699" y="150.9" width="1" height="4.7" fill="#48e048"/>
<rect x="701" y="150.9" width="1" height="4.7" fill="#48e070"/>
<rect x="704" y="147.4" width="1" height="24.1" fill="#d03020"/>
<rect x="703" y="149.3" width="3" height="21.9" fill="#6a7a18"/>
<rect x="703" y="149.3" width="1" height="21.9" fill="#60e030"/>
<rect x="705" y="149.3" width="1" height="21.9" fill="#e0b428"/>
<rect x="708" y="148.8" width="1" height="24.5" fill="#35c035"/>
<rect x="707" y="149.3" width="3" height="21.9" fill="#1c5c1c"/>
<rect x="707" y="149.3" width="1" height="21.9" fill="#48e048"/>
<rect x="709" y="149.3" width="1" height="21.9" fill="#48e070"/>
<rect x="712" y="148.1" width="1" height="8.4" fill="#35c035"/>
<rect x="711" y="149.3" width="3" height="6.3" fill="#1c5c1c"/>
<rect x="711" y="149.3" width="1" height="6.3" fill="#48e048"/>
<rect x="713" y="149.3" width="1" height="6.3" fill="#48e070"/>
<rect x="716" y="151.6" width="1" height="8.3" fill="#d03020"/>
<rect x="715" y="152.5" width="3" height="4.5" fill="#6a7a18"/>
<rect x="715" y="152.5" width="1" height="4.5" fill="#60e030"/>
<rect x="717" y="152.5" width="1" height="4.5" fill="#e0b428"/>
<rect x="720" y="154.8" width="1" height="2.5" fill="#35c035"/>
<rect x="719" y="155.2" width="3" height="1.4" fill="#1c5c1c"/>
<rect x="719" y="155.2" width="1" height="1.4" fill="#48e048"/>
<rect x="721" y="155.2" width="1" height="1.4" fill="#48e070"/>
<rect x="724" y="155.7" width="1" height="2.3" fill="#35c035"/>
<rect x="723" y="156.2" width="3" height="1.4" fill="#1c5c1c"/>
<rect x="723" y="156.2" width="1" height="1.4" fill="#48e048"/>
<rect x="725" y="156.2" width="1" height="1.4" fill="#48e070"/>
<rect x="728" y="138.1" width="1" height="20.5" fill="#35c035"/>
<rect x="727" y="140.7" width="3" height="14.9" fill="#1c5c1c"/>
<rect x="727" y="140.7" width="1" height="14.9" fill="#48e048"/>
<rect x="729" y="140.7" width="1" height="14.9" fill="#48e070"/>
<rect x="732" y="139.9" width="1" height="2.2" fill="#35c035"/>
<rect x="731" y="140.4" width="3" height="1.5" fill="#1c5c1c"/>
<rect x="731" y="140.4" width="1" height="1.5" fill="#48e048"/>
<rect x="733" y="140.4" width="1" height="1.5" fill="#48e070"/>
<rect x="736" y="138.7" width="1" height="2.6" fill="#d03020"/>
<rect x="735" y="139.6" width="3" height="1.5" fill="#6a7a18"/>
<rect x="735" y="139.6" width="1" height="1.5" fill="#60e030"/>
<rect x="737" y="139.6" width="1" height="1.5" fill="#e0b428"/>
<rect x="740" y="140.7" width="1" height="9" fill="#35c035"/>
<rect x="739" y="140.7" width="3" height="6.3" fill="#1c5c1c"/>
<rect x="739" y="140.7" width="1" height="6.3" fill="#48e048"/>
<rect x="741" y="140.7" width="1" height="6.3" fill="#48e070"/>
<rect x="744" y="140.5" width="1" height="3.5" fill="#d03020"/>
<rect x="743" y="141" width="3" height="2" fill="#6a7a18"/>
<rect x="743" y="141" width="1" height="2" fill="#60e030"/>
<rect x="745" y="141" width="1" height="2" fill="#e0b428"/>
<rect x="748" y="141.1" width="1" height="10.1" fill="#d03020"/>
<rect x="747" y="142.3" width="3" height="6.2" fill="#6a7a18"/>
<rect x="747" y="142.3" width="1" height="6.2" fill="#60e030"/>
<rect x="749" y="142.3" width="1" height="6.2" fill="#e0b428"/>
<rect x="752" y="144" width="1" height="16" fill="#d03020"/>
<rect x="751" y="145.4" width="3" height="14.1" fill="#6a7a18"/>
<rect x="751" y="145.4" width="1" height="14.1" fill="#60e030"/>
<rect x="753" y="145.4" width="1" height="14.1" fill="#e0b428"/>
<rect x="756" y="158" width="1" height="6.3" fill="#d03020"/>
<rect x="755" y="158" width="3" height="4.6" fill="#6a7a18"/>
<rect x="755" y="158" width="1" height="4.6" fill="#60e030"/>
<rect x="757" y="158" width="1" height="4.6" fill="#e0b428"/>
<rect x="760" y="158.4" width="1" height="47.7" fill="#d03020"/>
<rect x="759" y="160.3" width="3" height="43" fill="#6a7a18"/>
<rect x="759" y="160.3" width="1" height="43" fill="#60e030"/>
<rect x="761" y="160.3" width="1" height="43" fill="#e0b428"/>
<rect x="764" y="201.5" width="1" height="15.3" fill="#d03020"/>
<rect x="763" y="201.8" width="3" height="13.2" fill="#6a7a18"/>
<rect x="763" y="201.8" width="1" height="13.2" fill="#60e030"/>
<rect x="765" y="201.8" width="1" height="13.2" fill="#e0b428"/>
<rect x="768" y="215.5" width="1" height="10.5" fill="#d03020"/>
<rect x="767" y="216.6" width="3" height="7.9" fill="#6a7a18"/>
<rect x="767" y="216.6" width="1" height="7.9" fill="#60e030"/>
<rect x="769" y="216.6" width="1" height="7.9" fill="#e0b428"/>
<rect x="772" y="204.6" width="1" height="22.3" fill="#35c035"/>
<rect x="771" y="205" width="3" height="21" fill="#1c5c1c"/>
<rect x="771" y="205" width="1" height="21" fill="#48e048"/>
<rect x="773" y="205" width="1" height="21" fill="#48e070"/>
<rect x="776" y="203.4" width="1" height="12.8" fill="#35c035"/>
<rect x="775" y="205" width="3" height="8.5" fill="#1c5c1c"/>
<rect x="775" y="205" width="1" height="8.5" fill="#48e048"/>
<rect x="777" y="205" width="1" height="8.5" fill="#48e070"/>
<rect x="780" y="203.7" width="1" height="10.4" fill="#d03020"/>
<rect x="779" y="204" width="3" height="8.6" fill="#6a7a18"/>
<rect x="779" y="204" width="1" height="8.6" fill="#60e030"/>
<rect x="781" y="204" width="1" height="8.6" fill="#e0b428"/>
<rect x="784" y="193.6" width="1" height="14.1" fill="#35c035"/>
<rect x="783" y="196" width="3" height="8.8" fill="#1c5c1c"/>
<rect x="783" y="196" width="1" height="8.8" fill="#48e048"/>
<rect x="785" y="196" width="1" height="8.8" fill="#48e070"/>
<rect x="788" y="194.8" width="1" height="15.1" fill="#d03020"/>
<rect x="787" y="195.4" width="3" height="14.1" fill="#6a7a18"/>
<rect x="787" y="195.4" width="1" height="14.1" fill="#60e030"/>
<rect x="789" y="195.4" width="1" height="14.1" fill="#e0b428"/>
<rect x="792" y="205.1" width="1" height="18.3" fill="#d03020"/>
<rect x="791" y="207.9" width="3" height="12.5" fill="#6a7a18"/>
<rect x="791" y="207.9" width="1" height="12.5" fill="#60e030"/>
<rect x="793" y="207.9" width="1" height="12.5" fill="#e0b428"/>
<rect x="796" y="202.6" width="1" height="18" fill="#35c035"/>
<rect x="795" y="204" width="3" height="16.4" fill="#1c5c1c"/>
<rect x="795" y="204" width="1" height="16.4" fill="#48e048"/>
<rect x="797" y="204" width="1" height="16.4" fill="#48e070"/>
<rect x="800" y="202" width="1" height="14.8" fill="#35c035"/>
<rect x="799" y="204.8" width="3" height="10.9" fill="#1c5c1c"/>
<rect x="799" y="204.8" width="1" height="10.9" fill="#48e048"/>
<rect x="801" y="204.8" width="1" height="10.9" fill="#48e070"/>
<rect x="804" y="186.3" width="1" height="28.2" fill="#35c035"/>
<rect x="803" y="189" width="3" height="23.6" fill="#1c5c1c"/>
<rect x="803" y="189" width="1" height="23.6" fill="#48e048"/>
<rect x="805" y="189" width="1" height="23.6" fill="#48e070"/>
<rect x="808" y="187.4" width="1" height="35.1" fill="#d03020"/>
<rect x="807" y="189.9" width="3" height="32.1" fill="#6a7a18"/>
<rect x="807" y="189.9" width="1" height="32.1" fill="#60e030"/>
<rect x="809" y="189.9" width="1" height="32.1" fill="#e0b428"/>
<rect x="812" y="215" width="1" height="7" fill="#d03020"/>
<rect x="811" y="217.3" width="3" height="4" fill="#6a7a18"/>
<rect x="811" y="217.3" width="1" height="4" fill="#60e030"/>
<rect x="813" y="217.3" width="1" height="4" fill="#e0b428"/>
<rect x="816" y="219.9" width="1" height="4.5" fill="#35c035"/>
<rect x="815" y="220.4" width="3" height="3" fill="#1c5c1c"/>
<rect x="815" y="220.4" width="1" height="3" fill="#48e048"/>
<rect x="817" y="220.4" width="1" height="3" fill="#48e070"/>
<rect x="820" y="217.1" width="1" height="16.4" fill="#d03020"/>
<rect x="819" y="219.6" width="3" height="13.4" fill="#6a7a18"/>
<rect x="819" y="219.6" width="1" height="13.4" fill="#60e030"/>
<rect x="821" y="219.6" width="1" height="13.4" fill="#e0b428"/>
<rect x="824" y="231.3" width="1" height="24.8" fill="#d03020"/>
<rect x="823" y="232" width="3" height="22.9" fill="#6a7a18"/>
<rect x="823" y="232" width="1" height="22.9" fill="#60e030"/>
<rect x="825" y="232" width="1" height="22.9" fill="#e0b428"/>
<rect x="828" y="251.7" width="1" height="32.4" fill="#d03020"/>
<rect x="827" y="253.3" width="3" height="29.7" fill="#6a7a18"/>
<rect x="827" y="253.3" width="1" height="29.7" fill="#60e030"/>
<rect x="829" y="253.3" width="1" height="29.7" fill="#e0b428"/>
<rect x="832" y="281.1" width="1" height="29.3" fill="#d03020"/>
<rect x="831" y="281.5" width="3" height="28.2" fill="#6a7a18"/>
<rect x="831" y="281.5" width="1" height="28.2" fill="#60e030"/>
<rect x="833" y="281.5" width="1" height="28.2" fill="#e0b428"/>
<rect x="836" y="305.8" width="1" height="10.4" fill="#d03020"/>
<rect x="835" y="308" width="3" height="5.5" fill="#6a7a18"/>
<rect x="835" y="308" width="1" height="5.5" fill="#60e030"/>
<rect x="837" y="308" width="1" height="5.5" fill="#e0b428"/>
<rect x="840" y="311.8" width="1" height="8.3" fill="#d03020"/>
<rect x="839" y="311.9" width="3" height="6.5" fill="#6a7a18"/>
<rect x="839" y="311.9" width="1" height="6.5" fill="#60e030"/>
<rect x="841" y="311.9" width="1" height="6.5" fill="#e0b428"/>
<rect x="844" y="298.7" width="1" height="14.9" fill="#35c035"/>
<rect x="843" y="301" width="3" height="12.5" fill="#1c5c1c"/>
<rect x="843" y="301" width="1" height="12.5" fill="#48e048"/>
<rect x="845" y="301" width="1" height="12.5" fill="#48e070"/>
<rect x="848" y="298.5" width="1" height="17.6" fill="#d03020"/>
<rect x="847" y="301" width="3" height="14.7" fill="#6a7a18"/>
<rect x="847" y="301" width="1" height="14.7" fill="#60e030"/>
<rect x="849" y="301" width="1" height="14.7" fill="#e0b428"/>
<rect x="852" y="286.7" width="1" height="30.6" fill="#35c035"/>
<rect x="851" y="288.5" width="3" height="27.2" fill="#1c5c1c"/>
<rect x="851" y="288.5" width="1" height="27.2" fill="#48e048"/>
<rect x="853" y="288.5" width="1" height="27.2" fill="#48e070"/>
<rect x="856" y="263.1" width="1" height="26.3" fill="#35c035"/>
<rect x="855" y="265" width="3" height="23.5" fill="#1c5c1c"/>
<rect x="855" y="265" width="1" height="23.5" fill="#48e048"/>
<rect x="857" y="265" width="1" height="23.5" fill="#48e070"/>
<rect x="860" y="253.6" width="1" height="13.9" fill="#35c035"/>
<rect x="859" y="254.9" width="3" height="10.9" fill="#1c5c1c"/>
<rect x="859" y="254.9" width="1" height="10.9" fill="#48e048"/>
<rect x="861" y="254.9" width="1" height="10.9" fill="#48e070"/>
<rect x="864" y="255" width="1" height="8.3" fill="#35c035"/>
<rect x="863" y="256.3" width="3" height="5" fill="#1c5c1c"/>
<rect x="863" y="256.3" width="1" height="5" fill="#48e048"/>
<rect x="865" y="256.3" width="1" height="5" fill="#48e070"/>
<rect x="868" y="255.1" width="1" height="16.8" fill="#d03020"/>
<rect x="867" y="256.4" width="3" height="14.1" fill="#6a7a18"/>
<rect x="867" y="256.4" width="1" height="14.1" fill="#60e030"/>
<rect x="869" y="256.4" width="1" height="14.1" fill="#e0b428"/>
<rect x="872" y="270.4" width="1" height="33.2" fill="#d03020"/>
<rect x="871" y="270.5" width="3" height="31.3" fill="#6a7a18"/>
<rect x="871" y="270.5" width="1" height="31.3" fill="#60e030"/>
<rect x="873" y="270.5" width="1" height="31.3" fill="#e0b428"/>
<rect x="876" y="255.7" width="1" height="46.8" fill="#35c035"/>
<rect x="875" y="257.2" width="3" height="44.6" fill="#1c5c1c"/>
<rect x="875" y="257.2" width="1" height="44.6" fill="#48e048"/>
<rect x="877" y="257.2" width="1" height="44.6" fill="#48e070"/>
<rect x="880" y="254.9" width="1" height="13.2" fill="#35c035"/>
<rect x="879" y="257.2" width="3" height="8.6" fill="#1c5c1c"/>
<rect x="879" y="257.2" width="1" height="8.6" fill="#48e048"/>
<rect x="881" y="257.2" width="1" height="8.6" fill="#48e070"/>
<rect x="884" y="261.9" width="1" height="3.1" fill="#d03020"/>
<rect x="883" y="262.4" width="3" height="2.3" fill="#6a7a18"/>
<rect x="883" y="262.4" width="1" height="2.3" fill="#60e030"/>
<rect x="885" y="262.4" width="1" height="2.3" fill="#e0b428"/>
<rect x="888" y="262.3" width="1" height="3" fill="#35c035"/>
<rect x="887" y="262.9" width="3" height="2.3" fill="#1c5c1c"/>
<rect x="887" y="262.9" width="1" height="2.3" fill="#48e048"/>
<rect x="889" y="262.9" width="1" height="2.3" fill="#48e070"/>
<rect x="892" y="259.4" width="1" height="4.6" fill="#35c035"/>
<rect x="891" y="259.6" width="3" height="3.9" fill="#1c5c1c"/>
<rect x="891" y="259.6" width="1" height="3.9" fill="#48e048"/>
<rect x="893" y="259.6" width="1" height="3.9" fill="#48e070"/>
<rect x="896" y="258.7" width="1" height="2" fill="#35c035"/>
<rect x="895" y="258.8" width="3" height="1.4" fill="#1c5c1c"/>
<rect x="895" y="258.8" width="1" height="1.4" fill="#48e048"/>
<rect x="897" y="258.8" width="1" height="1.4" fill="#48e070"/>
<rect x="900" y="258.1" width="1" height="12.6" fill="#d03020"/>
<rect x="899" y="259.6" width="3" height="10.9" fill="#6a7a18"/>
<rect x="899" y="259.6" width="1" height="10.9" fill="#60e030"/>
<rect x="901" y="259.6" width="1" height="10.9" fill="#e0b428"/>
<rect x="904" y="260.1" width="1" height="10.7" fill="#35c035"/>
<rect x="903" y="262" width="3" height="8.5" fill="#1c5c1c"/>
<rect x="903" y="262" width="1" height="8.5" fill="#48e048"/>
<rect x="905" y="262" width="1" height="8.5" fill="#48e070"/>
<rect x="908" y="259.8" width="1" height="31.8" fill="#d03020"/>
<rect x="907" y="262" width="3" height="27.3" fill="#6a7a18"/>
<rect x="907" y="262" width="1" height="27.3" fill="#60e030"/>
<rect x="909" y="262" width="1" height="27.3" fill="#e0b428"/>
<rect x="912" y="293.4" width="1" height="3.7" fill="#35c035"/>
<rect x="911" y="294" width="3" height="3" fill="#1c5c1c"/>
<rect x="911" y="294" width="1" height="3" fill="#48e048"/>
<rect x="913" y="294" width="1" height="3" fill="#48e070"/>
<rect x="916" y="282.5" width="1" height="16.6" fill="#35c035"/>
<rect x="915" y="284" width="3" height="14" fill="#1c5c1c"/>
<rect x="915" y="284" width="1" height="14" fill="#48e048"/>
<rect x="917" y="284" width="1" height="14" fill="#48e070"/>
<rect x="920" y="271.7" width="1" height="18.9" fill="#35c035"/>
<rect x="919" y="274.6" width="3" height="15.6" fill="#1c5c1c"/>
<rect x="919" y="274.6" width="1" height="15.6" fill="#48e048"/>
<rect x="921" y="274.6" width="1" height="15.6" fill="#48e070"/>
<rect x="924" y="268" width="1" height="11.9" fill="#35c035"/>
<rect x="923" y="270.6" width="3" height="6.3" fill="#1c5c1c"/>
<rect x="923" y="270.6" width="1" height="6.3" fill="#48e048"/>
<rect x="925" y="270.6" width="1" height="6.3" fill="#48e070"/>
<rect x="928" y="274.4" width="1" height="4.4" fill="#d03020"/>
<rect x="927" y="275.3" width="3" height="2.5" fill="#6a7a18"/>
<rect x="927" y="275.3" width="1" height="2.5" fill="#60e030"/>
<rect x="929" y="275.3" width="1" height="2.5" fill="#e0b428"/>
<rect x="932" y="274.4" width="1" height="3.9" fill="#d03020"/>
<rect x="931" y="274.7" width="3" height="2.5" fill="#6a7a18"/>
<rect x="931" y="274.7" width="1" height="2.5" fill="#60e030"/>
<rect x="933" y="274.7" width="1" height="2.5" fill="#e0b428"/>
<rect x="936" y="274.4" width="1" height="4.2" fill="#d03020"/>
<rect x="935" y="274.9" width="3" height="2.5" fill="#6a7a18"/>
<rect x="935" y="274.9" width="1" height="2.5" fill="#60e030"/>
<rect x="937" y="274.9" width="1" height="2.5" fill="#e0b428"/>
<rect x="940" y="275.8" width="1" height="18" fill="#d03020"/>
<rect x="939" y="278.5" width="3" height="14.8" fill="#6a7a18"/>
<rect x="939" y="278.5" width="1" height="14.8" fill="#60e030"/>
<rect x="941" y="278.5" width="1" height="14.8" fill="#e0b428"/>
<rect x="944" y="259.6" width="1" height="36.5" fill="#35c035"/>
<rect x="943" y="262" width="3" height="31.3" fill="#1c5c1c"/>
<rect x="943" y="262" width="1" height="31.3" fill="#48e048"/>
<rect x="945" y="262" width="1" height="31.3" fill="#48e070"/>
<rect x="948" y="261.8" width="1" height="16.9" fill="#35c035"/>
<rect x="947" y="262" width="3" height="15.7" fill="#1c5c1c"/>
<rect x="947" y="262" width="1" height="15.7" fill="#48e048"/>
<rect x="949" y="262" width="1" height="15.7" fill="#48e070"/>
<rect x="952" y="273" width="1" height="14.4" fill="#d03020"/>
<rect x="951" y="275.3" width="3" height="11.7" fill="#6a7a18"/>
<rect x="951" y="275.3" width="1" height="11.7" fill="#60e030"/>
<rect x="953" y="275.3" width="1" height="11.7" fill="#e0b428"/>
<rect x="956" y="262.3" width="1" height="25.5" fill="#35c035"/>
<rect x="955" y="265" width="3" height="22" fill="#1c5c1c"/>
<rect x="955" y="265" width="1" height="22" fill="#48e048"/>
<rect x="957" y="265" width="1" height="22" fill="#48e070"/>
<rect x="960" y="263.4" width="1" height="3.2" fill="#35c035"/>
<rect x="959" y="264.4" width="3" height="2" fill="#1c5c1c"/>
<rect x="959" y="264.4" width="1" height="2" fill="#48e048"/>
<rect x="961" y="264.4" width="1" height="2" fill="#48e070"/>
<rect x="964" y="262.9" width="1" height="12.9" fill="#d03020"/>
<rect x="963" y="264.4" width="3" height="8.6" fill="#6a7a18"/>
<rect x="963" y="264.4" width="1" height="8.6" fill="#60e030"/>
<rect x="965" y="264.4" width="1" height="8.6" fill="#e0b428"/>
<rect x="968" y="270.8" width="1" height="9.3" fill="#d03020"/>
<rect x="967" y="271.4" width="3" height="7.9" fill="#6a7a18"/>
<rect x="967" y="271.4" width="1" height="7.9" fill="#60e030"/>
<rect x="969" y="271.4" width="1" height="7.9" fill="#e0b428"/>
<rect x="972" y="266" width="1" height="13.5" fill="#35c035"/>
<rect x="971" y="267.5" width="3" height="11" fill="#1c5c1c"/>
<rect x="971" y="267.5" width="1" height="11" fill="#48e048"/>
<rect x="973" y="267.5" width="1" height="11" fill="#48e070"/>
<rect x="976" y="256.5" width="1" height="11.6" fill="#35c035"/>
<rect x="975" y="256.6" width="3" height="10.9" fill="#1c5c1c"/>
<rect x="975" y="256.6" width="1" height="10.9" fill="#48e048"/>
<rect x="977" y="256.6" width="1" height="10.9" fill="#48e070"/>
<rect x="980" y="251.4" width="1" height="9.4" fill="#35c035"/>
<rect x="979" y="251.9" width="3" height="6.1" fill="#1c5c1c"/>
<rect x="979" y="251.9" width="1" height="6.1" fill="#48e048"/>
<rect x="981" y="251.9" width="1" height="6.1" fill="#48e070"/>
<rect x="984" y="250.8" width="1" height="3.4" fill="#35c035"/>
<rect x="983" y="251.6" width="3" height="1.5" fill="#1c5c1c"/>
<rect x="983" y="251.6" width="1" height="1.5" fill="#48e048"/>
<rect x="985" y="251.6" width="1" height="1.5" fill="#48e070"/>
<rect x="988" y="241.2" width="1" height="13.8" fill="#35c035"/>
<rect x="987" y="241.7" width="3" height="10.9" fill="#1c5c1c"/>
<rect x="987" y="241.7" width="1" height="10.9" fill="#48e048"/>
<rect x="989" y="241.7" width="1" height="10.9" fill="#48e070"/>
<rect x="992" y="241.4" width="1" height="6.6" fill="#35c035"/>
<rect x="991" y="241.7" width="3" height="4.7" fill="#1c5c1c"/>
<rect x="991" y="241.7" width="1" height="4.7" fill="#48e048"/>
<rect x="993" y="241.7" width="1" height="4.7" fill="#48e070"/>
<rect x="996" y="233.5" width="1" height="14" fill="#35c035"/>
<rect x="995" y="235.4" width="3" height="11" fill="#1c5c1c"/>
<rect x="995" y="235.4" width="1" height="11" fill="#48e048"/>
<rect x="997" y="235.4" width="1" height="11" fill="#48e070"/>
<rect x="1000" y="234.7" width="1" height="3.2" fill="#35c035"/>
<rect x="999" y="235.7" width="3" height="1.5" fill="#1c5c1c"/>
<rect x="999" y="235.7" width="1" height="1.5" fill="#48e048"/>
<rect x="1001" y="235.7" width="1" height="1.5" fill="#48e070"/>
<rect x="1004" y="222" width="1" height="16.9" fill="#35c035"/>
<rect x="1003" y="223.7" width="3" height="12.5" fill="#1c5c1c"/>
<rect x="1003" y="223.7" width="1" height="12.5" fill="#48e048"/>
<rect x="1005" y="223.7" width="1" height="12.5" fill="#48e070"/>
<rect x="1008" y="220.8" width="1" height="3.7" fill="#35c035"/>
<rect x="1007" y="221" width="3" height="2.4" fill="#1c5c1c"/>
<rect x="1007" y="221" width="1" height="2.4" fill="#48e048"/>
<rect x="1009" y="221" width="1" height="2.4" fill="#48e070"/>
<rect x="1012" y="221.1" width="1" height="3.6" fill="#d03020"/>
<rect x="1011" y="221.8" width="3" height="2.4" fill="#6a7a18"/>
<rect x="1011" y="221.8" width="1" height="2.4" fill="#60e030"/>
<rect x="1013" y="221.8" width="1" height="2.4" fill="#e0b428"/>
<rect x="1016" y="218.9" width="1" height="8.7" fill="#35c035"/>
<rect x="1015" y="221.3" width="3" height="5.5" fill="#1c5c1c"/>
<rect x="1015" y="221.3" width="1" height="5.5" fill="#48e048"/>
<rect x="1017" y="221.3" width="1" height="5.5" fill="#48e070"/>
<rect x="1020" y="217.3" width="1" height="10.2" fill="#35c035"/>
<rect x="1019" y="220.3" width="3" height="5.5" fill="#1c5c1c"/>
<rect x="1019" y="220.3" width="1" height="5.5" fill="#48e048"/>
<rect x="1021" y="220.3" width="1" height="5.5" fill="#48e070"/>
<rect x="1024" y="220.1" width="1" height="8.9" fill="#35c035"/>
<rect x="1023" y="221.2" width="3" height="5.5" fill="#1c5c1c"/>
<rect x="1023" y="221.2" width="1" height="5.5" fill="#48e048"/>
<rect x="1025" y="221.2" width="1" height="5.5" fill="#48e070"/>
<rect x="1028" y="219.9" width="1" height="7.4" fill="#35c035"/>
<rect x="1027" y="221.2" width="3" height="5.5" fill="#1c5c1c"/>
<rect x="1027" y="221.2" width="1" height="5.5" fill="#48e048"/>
<rect x="1029" y="221.2" width="1" height="5.5" fill="#48e070"/>
<rect x="1032" y="217.6" width="1" height="7.9" fill="#35c035"/>
<rect x="1031" y="219.8" width="3" height="5.5" fill="#1c5c1c"/>
<rect x="1031" y="219.8" width="1" height="5.5" fill="#48e048"/>
<rect x="1033" y="219.8" width="1" height="5.5" fill="#48e070"/>
<rect x="1036" y="213.3" width="1" height="11.1" fill="#35c035"/>
<rect x="1035" y="215.8" width="3" height="7.9" fill="#1c5c1c"/>
<rect x="1035" y="215.8" width="1" height="7.9" fill="#48e048"/>
<rect x="1037" y="215.8" width="1" height="7.9" fill="#48e070"/>
<rect x="1040" y="213.9" width="1" height="22.9" fill="#d03020"/>
<rect x="1039" y="215.8" width="3" height="18" fill="#6a7a18"/>
<rect x="1039" y="215.8" width="1" height="18" fill="#60e030"/>
<rect x="1041" y="215.8" width="1" height="18" fill="#e0b428"/>
<rect x="1044" y="227.6" width="1" height="8.3" fill="#d03020"/>
<rect x="1043" y="229.3" width="3" height="4.6" fill="#6a7a18"/>
<rect x="1043" y="229.3" width="1" height="4.6" fill="#60e030"/>
<rect x="1045" y="229.3" width="1" height="4.6" fill="#e0b428"/>
<rect x="1048" y="229.1" width="1" height="15.7" fill="#d03020"/>
<rect x="1047" y="230" width="3" height="14.8" fill="#6a7a18"/>
<rect x="1047" y="230" width="1" height="14.8" fill="#60e030"/>
<rect x="1049" y="230" width="1" height="14.8" fill="#e0b428"/>
<rect x="1052" y="243.1" width="1" height="9.9" fill="#d03020"/>
<rect x="1051" y="243.2" width="3" height="9.4" fill="#6a7a18"/>
<rect x="1051" y="243.2" width="1" height="9.4" fill="#60e030"/>
<rect x="1053" y="243.2" width="1" height="9.4" fill="#e0b428"/>
<rect x="1056" y="254" width="1" height="7.8" fill="#d03020"/>
<rect x="1055" y="255.8" width="3" height="4.7" fill="#6a7a18"/>
<rect x="1055" y="255.8" width="1" height="4.7" fill="#60e030"/>
<rect x="1057" y="255.8" width="1" height="4.7" fill="#e0b428"/>
<rect x="1060" y="257.4" width="1" height="15.9" fill="#d03020"/>
<rect x="1059" y="258.9" width="3" height="11.7" fill="#6a7a18"/>
<rect x="1059" y="258.9" width="1" height="11.7" fill="#60e030"/>
<rect x="1061" y="258.9" width="1" height="11.7" fill="#e0b428"/>
<rect x="1064" y="249.1" width="1" height="22.2" fill="#35c035"/>
<rect x="1063" y="249.5" width="3" height="21.1" fill="#1c5c1c"/>
<rect x="1063" y="249.5" width="1" height="21.1" fill="#48e048"/>
<rect x="1065" y="249.5" width="1" height="21.1" fill="#48e070"/>
<rect x="1068" y="247.5" width="1" height="13" fill="#35c035"/>
<rect x="1067" y="249.5" width="3" height="11" fill="#1c5c1c"/>
<rect x="1067" y="249.5" width="1" height="11" fill="#48e048"/>
<rect x="1069" y="249.5" width="1" height="11" fill="#48e070"/>
<rect x="1072" y="257.3" width="1" height="2.8" fill="#35c035"/>
<rect x="1071" y="257.3" width="3" height="2.4" fill="#1c5c1c"/>
<rect x="1071" y="257.3" width="1" height="2.4" fill="#48e048"/>
<rect x="1073" y="257.3" width="1" height="2.4" fill="#48e070"/>
<rect x="1076" y="256.6" width="1" height="3" fill="#d03020"/>
<rect x="1075" y="256.8" width="3" height="2.4" fill="#6a7a18"/>
<rect x="1075" y="256.8" width="1" height="2.4" fill="#60e030"/>
<rect x="1077" y="256.8" width="1" height="2.4" fill="#e0b428"/>
<rect x="1080" y="256.9" width="1" height="3.4" fill="#d03020"/>
<rect x="1079" y="257.2" width="3" height="2.4" fill="#6a7a18"/>
<rect x="1079" y="257.2" width="1" height="2.4" fill="#60e030"/>
<rect x="1081" y="257.2" width="1" height="2.4" fill="#e0b428"/>
<rect x="1084" y="238.2" width="1" height="19.7" fill="#35c035"/>
<rect x="1083" y="240" width="3" height="17.3" fill="#1c5c1c"/>
<rect x="1083" y="240" width="1" height="17.3" fill="#48e048"/>
<rect x="1085" y="240" width="1" height="17.3" fill="#48e070"/>
<rect x="1088" y="232.7" width="1" height="10.4" fill="#35c035"/>
<rect x="1087" y="234.6" width="3" height="7.1" fill="#1c5c1c"/>
<rect x="1087" y="234.6" width="1" height="7.1" fill="#48e048"/>
<rect x="1089" y="234.6" width="1" height="7.1" fill="#48e070"/>
<rect x="1092" y="215.4" width="1" height="24.4" fill="#35c035"/>
<rect x="1091" y="215.8" width="3" height="21.2" fill="#1c5c1c"/>
<rect x="1091" y="215.8" width="1" height="21.2" fill="#48e048"/>
<rect x="1093" y="215.8" width="1" height="21.2" fill="#48e070"/>
<rect x="1096" y="214.3" width="1" height="17.7" fill="#d03020"/>
<rect x="1095" y="215" width="3" height="16.5" fill="#6a7a18"/>
<rect x="1095" y="215" width="1" height="16.5" fill="#60e030"/>
<rect x="1097" y="215" width="1" height="16.5" fill="#e0b428"/>
<rect x="1100" y="220.2" width="1" height="13.2" fill="#35c035"/>
<rect x="1099" y="220.5" width="3" height="11" fill="#1c5c1c"/>
<rect x="1099" y="220.5" width="1" height="11" fill="#48e048"/>
<rect x="1101" y="220.5" width="1" height="11" fill="#48e070"/>
<rect x="1104" y="215.9" width="1" height="4.3" fill="#d03020"/>
<rect x="1103" y="217" width="3" height="2.3" fill="#6a7a18"/>
<rect x="1103" y="217" width="1" height="2.3" fill="#60e030"/>
<rect x="1105" y="217" width="1" height="2.3" fill="#e0b428"/>
<rect x="1108" y="217.8" width="1" height="13.7" fill="#d03020"/>
<rect x="1107" y="219" width="3" height="11.7" fill="#6a7a18"/>
<rect x="1107" y="219" width="1" height="11.7" fill="#60e030"/>
<rect x="1109" y="219" width="1" height="11.7" fill="#e0b428"/>
<rect x="1112" y="219" width="1" height="13.7" fill="#35c035"/>
<rect x="1111" y="219" width="3" height="11.7" fill="#1c5c1c"/>
<rect x="1111" y="219" width="1" height="11.7" fill="#48e048"/>
<rect x="1113" y="219" width="1" height="11.7" fill="#48e070"/>
<rect x="1116" y="217.3" width="1" height="29.3" fill="#d03020"/>
<rect x="1115" y="219" width="3" height="26.6" fill="#6a7a18"/>
<rect x="1115" y="219" width="1" height="26.6" fill="#60e030"/>
<rect x="1117" y="219" width="1" height="26.6" fill="#e0b428"/>
<rect x="1120" y="233.5" width="1" height="13.5" fill="#35c035"/>
<rect x="1119" y="235.4" width="3" height="10.2" fill="#1c5c1c"/>
<rect x="1119" y="235.4" width="1" height="10.2" fill="#48e048"/>
<rect x="1121" y="235.4" width="1" height="10.2" fill="#48e070"/>
<rect x="1124" y="232.6" width="1" height="50.4" fill="#d03020"/>
<rect x="1123" y="235.4" width="3" height="45.4" fill="#6a7a18"/>
<rect x="1123" y="235.4" width="1" height="45.4" fill="#60e030"/>
<rect x="1125" y="235.4" width="1" height="45.4" fill="#e0b428"/>
<rect x="1128" y="279.1" width="1" height="11.5" fill="#35c035"/>
<rect x="1127" y="279.8" width="3" height="8" fill="#1c5c1c"/>
<rect x="1127" y="279.8" width="1" height="8" fill="#48e048"/>
<rect x="1129" y="279.8" width="1" height="8" fill="#48e070"/>
<rect x="1132" y="287.8" width="1" height="35.3" fill="#d03020"/>
<rect x="1131" y="287.9" width="3" height="33.6" fill="#6a7a18"/>
<rect x="1131" y="287.9" width="1" height="33.6" fill="#60e030"/>
<rect x="1133" y="287.9" width="1" height="33.6" fill="#e0b428"/>
<rect x="136" y="236" width="1" height="7" fill="#c83020"/>
<rect x="212" y="272" width="1" height="2" fill="#c83020"/>
<rect x="596" y="224" width="1" height="10" fill="#c83020"/>
<rect x="660" y="177.5" width="1" height="6.5" fill="#c83020"/>
<rect x="756" y="162.6" width="1" height="6.4" fill="#c83020"/>
<rect x="832" y="309.7" width="1" height="42.6" fill="#c83020"/>
<rect x="836" y="298.7" width="1" height="69" fill="#c83020"/>
<rect x="844" y="292" width="1" height="34" fill="#c83020"/>
<rect x="1060" y="270.6" width="1" height="16.4" fill="#c83020"/>
<rect x="1132" y="283" width="1" height="5" fill="#c83020"/>
<rect x="176" y="246" width="1" height="4" fill="#c83020"/>
<rect x="272" y="352" width="1" height="5" fill="#c83020"/>
<rect x="304" y="335" width="1" height="8" fill="#c83020"/>
<rect x="440" y="238" width="1" height="6" fill="#c83020"/>
<rect x="496" y="240" width="1" height="4" fill="#c83020"/>
</g>
<polyline points="0,300 10,297 18,293.6 28,285 36.5,278 46.4,272.5 56,270.4 63,268.3 70,271 76,274 84,274.6 91,272.5 98,269.7 107,265.5 115,258.5 122,248.7 126.4,240 130,237.5 133.6,233 142,227.6 150.5,224.8 160.3,224 170,226 178.6,230.4 188.4,232.5 198.2,234 206.7,236 213.7,240 220.7,245.8 229,247 240.4,246.5 247.4,248.7 254.4,254 259.8,258.5 267.7,268 275.5,277.6 283.3,287 291,298 297.4,309 303.7,313.7 310,316.8 316.2,316.8 320.9,312 327.2,304 336.6,298 346,293.3 355.4,287 364.7,279 372.6,273 382,269 392,266.3 402.8,259.6 412.2,250.2 420,244.7 431,240.8 440.4,236.9 449.8,233 462.3,229.9 471.7,228.3 481,226.7 493.6,226 509.3,225.2 524,224.9 536.4,223.7 547.3,219.8 559.8,213.5 570.8,208.8 581.8,206.5 591.2,206.5 600.6,208.8 610,208.8 619.4,206.5 628.7,203.3 638.1,196.3 647.5,186.9 654.3,182.2 660.5,175.9 668.4,169.7 679.3,166.5 691.8,164.2 702.8,162.6 713.8,160.3 723.2,157 732.6,154 742,151.7 751.4,150.1 757.6,151.7 763.9,158.7 770.1,166.5 776.4,172.8 782.7,179 787.8,185 795.7,195.4 803.5,204.8 811.3,209.5 820.7,212.6 827,220.4 833.2,231.4 839.5,242.3 845.8,253.3 852,264.3 858.3,272 864.6,278.4 870.8,284.6 875.5,287 881.8,284.6 889.6,276.8 895.9,270.5 902.1,266.6 908.4,267.4 914.7,270.5 921.4,271.8 930.8,273 940.2,276 949.6,278.5 957.4,279.3 965.2,277 974.6,273 982.5,269.9 990.3,264.4 998.1,258.9 1006,251 1013.8,243.2 1021.6,237 1029.4,232.3 1037.3,227.6 1045.1,225.2 1050,226.5 1055.7,230.7 1063.5,235.4 1071.3,240 1079.2,244.8 1087,248.7 1093.2,248.7 1099.5,246.4 1105.8,242.5 1112,238.5 1118.3,235.4 1123,235.4 1127.7,240 1132.4,244.8" fill="none" stroke="#e03a28" stroke-width="1" />
<g fill="#ff1a1a" stroke="none">
<rect x="1.5" y="267" width="13" height="1.6"/>
<path d="M1.5 267.3l3 0l-1.5 -2.6z"/>
<path d="M5.5 267.3l3 0l-1.5 -2.6z"/>
<path d="M9.5 267.3l3 0l-1.5 -2.6z"/>
<rect x="34.5" y="259" width="11" height="1.6"/>
<path d="M34.5 259.3l3 0l-1.5 -2.6z"/>
<path d="M38.5 259.3l3 0l-1.5 -2.6z"/>
<path d="M42.5 259.3l3 0l-1.5 -2.6z"/>
<rect x="70.5" y="286" width="7" height="1.6"/>
<path d="M70.5 286.3l3 0l-1.5 -2.6z"/>
<path d="M74.5 286.3l3 0l-1.5 -2.6z"/>
<rect x="136.5" y="215.6" width="13" height="1.6"/>
<path d="M136.5 215.9l3 0l-1.5 -2.6z"/>
<path d="M140.5 215.9l3 0l-1.5 -2.6z"/>
<path d="M144.5 215.9l3 0l-1.5 -2.6z"/>
<rect x="154.5" y="214" width="28" height="1.6"/>
<path d="M154.5 214.3l3 0l-1.5 -2.6z"/>
<path d="M158.5 214.3l3 0l-1.5 -2.6z"/>
<path d="M162.5 214.3l3 0l-1.5 -2.6z"/>
<path d="M166.5 214.3l3 0l-1.5 -2.6z"/>
<path d="M170.5 214.3l3 0l-1.5 -2.6z"/>
<path d="M174.5 214.3l3 0l-1.5 -2.6z"/>
<path d="M178.5 214.3l3 0l-1.5 -2.6z"/>
<rect x="199.5" y="224" width="11" height="1.6"/>
<path d="M199.5 224.3l3 0l-1.5 -2.6z"/>
<path d="M203.5 224.3l3 0l-1.5 -2.6z"/>
<path d="M207.5 224.3l3 0l-1.5 -2.6z"/>
<rect x="209.5" y="251.5" width="13" height="1.6"/>
<path d="M209.5 251.8l3 0l-1.5 -2.6z"/>
<path d="M213.5 251.8l3 0l-1.5 -2.6z"/>
<path d="M217.5 251.8l3 0l-1.5 -2.6z"/>
<rect x="240.5" y="222" width="10" height="1.6"/>
<path d="M240.5 222.3l3 0l-1.5 -2.6z"/>
<path d="M244.5 222.3l3 0l-1.5 -2.6z"/>
<rect x="250.1" y="254.5" width="11.4" height="1.6"/>
<path d="M250.1 254.8l3 0l-1.5 -2.6z"/>
<path d="M254.1 254.8l3 0l-1.5 -2.6z"/>
<path d="M258.1 254.8l3 0l-1.5 -2.6z"/>
<rect x="262.2" y="296.4" width="19.3" height="1.6"/>
<path d="M262.2 296.7l3 0l-1.5 -2.6z"/>
<path d="M266.2 296.7l3 0l-1.5 -2.6z"/>
<path d="M270.2 296.7l3 0l-1.5 -2.6z"/>
<path d="M274.2 296.7l3 0l-1.5 -2.6z"/>
<path d="M278.2 296.7l3 0l-1.5 -2.6z"/>
<rect x="289.5" y="273.7" width="20.4" height="1.6"/>
<path d="M289.5 274l3 0l-1.5 -2.6z"/>
<path d="M293.5 274l3 0l-1.5 -2.6z"/>
<path d="M297.5 274l3 0l-1.5 -2.6z"/>
<path d="M301.5 274l3 0l-1.5 -2.6z"/>
<path d="M305.5 274l3 0l-1.5 -2.6z"/>
<rect x="344.5" y="263.5" width="17" height="1.6"/>
<path d="M344.5 263.8l3 0l-1.5 -2.6z"/>
<path d="M348.5 263.8l3 0l-1.5 -2.6z"/>
<path d="M352.5 263.8l3 0l-1.5 -2.6z"/>
<path d="M356.5 263.8l3 0l-1.5 -2.6z"/>
<rect x="421.5" y="218" width="28" height="1.6"/>
<path d="M421.5 218.3l3 0l-1.5 -2.6z"/>
<path d="M425.5 218.3l3 0l-1.5 -2.6z"/>
<path d="M429.5 218.3l3 0l-1.5 -2.6z"/>
<path d="M433.5 218.3l3 0l-1.5 -2.6z"/>
<path d="M437.5 218.3l3 0l-1.5 -2.6z"/>
<path d="M441.5 218.3l3 0l-1.5 -2.6z"/>
<path d="M445.5 218.3l3 0l-1.5 -2.6z"/>
<rect x="487.5" y="212.6" width="26.4" height="1.6"/>
<path d="M487.5 212.9l3 0l-1.5 -2.6z"/>
<path d="M491.5 212.9l3 0l-1.5 -2.6z"/>
<path d="M495.5 212.9l3 0l-1.5 -2.6z"/>
<path d="M499.5 212.9l3 0l-1.5 -2.6z"/>
<path d="M503.5 212.9l3 0l-1.5 -2.6z"/>
<path d="M507.5 212.9l3 0l-1.5 -2.6z"/>
<rect x="556.5" y="196.3" width="12.7" height="1.6"/>
<path d="M556.5 196.6l3 0l-1.5 -2.6z"/>
<path d="M560.5 196.6l3 0l-1.5 -2.6z"/>
<path d="M564.5 196.6l3 0l-1.5 -2.6z"/>
<rect x="586.5" y="191.6" width="11" height="1.6"/>
<path d="M586.5 191.9l3 0l-1.5 -2.6z"/>
<path d="M590.5 191.9l3 0l-1.5 -2.6z"/>
<path d="M594.5 191.9l3 0l-1.5 -2.6z"/>
<rect x="597.5" y="208" width="12.4" height="1.6"/>
<path d="M597.5 208.3l3 0l-1.5 -2.6z"/>
<path d="M601.5 208.3l3 0l-1.5 -2.6z"/>
<path d="M605.5 208.3l3 0l-1.5 -2.6z"/>
<rect x="654.5" y="155.6" width="10.7" height="1.6"/>
<path d="M654.5 155.9l3 0l-1.5 -2.6z"/>
<path d="M658.5 155.9l3 0l-1.5 -2.6z"/>
<rect x="702.5" y="143" width="23.7" height="1.6"/>
<path d="M702.5 143.3l3 0l-1.5 -2.6z"/>
<path d="M706.5 143.3l3 0l-1.5 -2.6z"/>
<path d="M710.5 143.3l3 0l-1.5 -2.6z"/>
<path d="M714.5 143.3l3 0l-1.5 -2.6z"/>
<path d="M718.5 143.3l3 0l-1.5 -2.6z"/>
<path d="M722.5 143.3l3 0l-1.5 -2.6z"/>
<rect x="738.5" y="124.6" width="11" height="1.6"/>
<path d="M738.5 124.9l3 0l-1.5 -2.6z"/>
<path d="M742.5 124.9l3 0l-1.5 -2.6z"/>
<path d="M746.5 124.9l3 0l-1.5 -2.6z"/>
<rect x="763.5" y="201" width="9.7" height="1.6"/>
<path d="M763.5 201.3l3 0l-1.5 -2.6z"/>
<path d="M767.5 201.3l3 0l-1.5 -2.6z"/>
<rect x="778" y="184.5" width="23.5" height="1.6"/>
<path d="M778 184.8l3 0l-1.5 -2.6z"/>
<path d="M782 184.8l3 0l-1.5 -2.6z"/>
<path d="M786 184.8l3 0l-1.5 -2.6z"/>
<path d="M790 184.8l3 0l-1.5 -2.6z"/>
<path d="M794 184.8l3 0l-1.5 -2.6z"/>
<path d="M798 184.8l3 0l-1.5 -2.6z"/>
<rect x="809.5" y="193.8" width="16.6" height="1.6"/>
<path d="M809.5 194.1l3 0l-1.5 -2.6z"/>
<path d="M813.5 194.1l3 0l-1.5 -2.6z"/>
<path d="M817.5 194.1l3 0l-1.5 -2.6z"/>
<path d="M821.5 194.1l3 0l-1.5 -2.6z"/>
<rect x="825.5" y="234.5" width="10.8" height="1.6"/>
<path d="M825.5 234.8l3 0l-1.5 -2.6z"/>
<path d="M829.5 234.8l3 0l-1.5 -2.6z"/>
<rect x="838" y="287.7" width="15.5" height="1.6"/>
<path d="M838 288l3 0l-1.5 -2.6z"/>
<path d="M842 288l3 0l-1.5 -2.6z"/>
<path d="M846 288l3 0l-1.5 -2.6z"/>
<path d="M850 288l3 0l-1.5 -2.6z"/>
<rect x="867.5" y="247" width="14" height="1.6"/>
<path d="M867.5 247.3l3 0l-1.5 -2.6z"/>
<path d="M871.5 247.3l3 0l-1.5 -2.6z"/>
<path d="M875.5 247.3l3 0l-1.5 -2.6z"/>
<rect x="900.5" y="243.9" width="9" height="1.6"/>
<path d="M900.5 244.2l3 0l-1.5 -2.6z"/>
<path d="M904.5 244.2l3 0l-1.5 -2.6z"/>
<rect x="963.5" y="259" width="10" height="1.6"/>
<path d="M963.5 259.3l3 0l-1.5 -2.6z"/>
<path d="M967.5 259.3l3 0l-1.5 -2.6z"/>
<rect x="1038.5" y="204.9" width="15.5" height="1.6"/>
<path d="M1038.5 205.2l3 0l-1.5 -2.6z"/>
<path d="M1042.5 205.2l3 0l-1.5 -2.6z"/>
<path d="M1046.5 205.2l3 0l-1.5 -2.6z"/>
<path d="M1050.5 205.2l3 0l-1.5 -2.6z"/>
<rect x="1053.4" y="244" width="28.1" height="1.6"/>
<path d="M1053.4 244.3l3 0l-1.5 -2.6z"/>
<path d="M1057.4 244.3l3 0l-1.5 -2.6z"/>
<path d="M1061.4 244.3l3 0l-1.5 -2.6z"/>
<path d="M1065.4 244.3l3 0l-1.5 -2.6z"/>
<path d="M1069.4 244.3l3 0l-1.5 -2.6z"/>
<path d="M1073.4 244.3l3 0l-1.5 -2.6z"/>
<path d="M1077.4 244.3l3 0l-1.5 -2.6z"/>
<rect x="1102.5" y="205.2" width="23.6" height="1.6"/>
<path d="M1102.5 205.5l3 0l-1.5 -2.6z"/>
<path d="M1106.5 205.5l3 0l-1.5 -2.6z"/>
<path d="M1110.5 205.5l3 0l-1.5 -2.6z"/>
<path d="M1114.5 205.5l3 0l-1.5 -2.6z"/>
<path d="M1118.5 205.5l3 0l-1.5 -2.6z"/>
<path d="M1122.5 205.5l3 0l-1.5 -2.6z"/>
<rect x="1126.2" y="269.9" width="7.7" height="1.6"/>
<path d="M1126.2 270.2l3 0l-1.5 -2.6z"/>
<path d="M1130.2 270.2l3 0l-1.5 -2.6z"/>
<path d="M2.4 259l1.2 0l0 4l2.3 -1.5l-2.9 5l-2.9 -5l2.3 1.5z"/>
<path d="M35.4 251l1.2 0l0 4l2.3 -1.5l-2.9 5l-2.9 -5l2.3 1.5z"/>
<path d="M130.9 191.7l1.2 0l0 4l2.3 -1.5l-2.9 5l-2.9 -5l2.3 1.5z"/>
<path d="M154.1 205l1.2 0l0 4l2.3 -1.5l-2.9 5l-2.9 -5l2.3 1.5z"/>
<path d="M198.4 215.5l1.2 0l0 4l2.3 -1.5l-2.9 5l-2.9 -5l2.3 1.5z"/>
<path d="M242.4 213l1.2 0l0 4l2.3 -1.5l-2.9 5l-2.9 -5l2.3 1.5z"/>
<path d="M289.8 264.5l1.2 0l0 4l2.3 -1.5l-2.9 5l-2.9 -5l2.3 1.5z"/>
<path d="M346.1 255l1.2 0l0 4l2.3 -1.5l-2.9 5l-2.9 -5l2.3 1.5z"/>
<path d="M421.8 209.2l1.2 0l0 4l2.3 -1.5l-2.9 5l-2.9 -5l2.3 1.5z"/>
<path d="M486 204l1.2 0l0 4l2.3 -1.5l-2.9 5l-2.9 -5l2.3 1.5z"/>
<path d="M557.4 188l1.2 0l0 4l2.3 -1.5l-2.9 5l-2.9 -5l2.3 1.5z"/>
<path d="M586.4 183l1.2 0l0 4l2.3 -1.5l-2.9 5l-2.9 -5l2.3 1.5z"/>
<path d="M654.4 147l1.2 0l0 4l2.3 -1.5l-2.9 5l-2.9 -5l2.3 1.5z"/>
<path d="M702.2 134.5l1.2 0l0 4l2.3 -1.5l-2.9 5l-2.9 -5l2.3 1.5z"/>
<path d="M738.2 117.5l1.2 0l0 4l2.3 -1.5l-2.9 5l-2.9 -5l2.3 1.5z"/>
<path d="M778.9 176l1.2 0l0 4l2.3 -1.5l-2.9 5l-2.9 -5l2.3 1.5z"/>
<path d="M810.4 185.5l1.2 0l0 4l2.3 -1.5l-2.9 5l-2.9 -5l2.3 1.5z"/>
<path d="M870.2 238.5l1.2 0l0 4l2.3 -1.5l-2.9 5l-2.9 -5l2.3 1.5z"/>
<path d="M903.1 235l1.2 0l0 4l2.3 -1.5l-2.9 5l-2.9 -5l2.3 1.5z"/>
<path d="M938 255.5l1.2 0l0 4l2.3 -1.5l-2.9 5l-2.9 -5l2.3 1.5z"/>
<path d="M966.2 251.5l1.2 0l0 4l2.3 -1.5l-2.9 5l-2.9 -5l2.3 1.5z"/>
<path d="M1014 207l1.2 0l0 4l2.3 -1.5l-2.9 5l-2.9 -5l2.3 1.5z"/>
<path d="M1038.2 198.5l1.2 0l0 4l2.3 -1.5l-2.9 5l-2.9 -5l2.3 1.5z"/>
<path d="M1106.7 196.5l1.2 0l0 4l2.3 -1.5l-2.9 5l-2.9 -5l2.3 1.5z"/>
<path d="M653.2 148l1.2 0l0 4l2.3 -1.5l-2.9 5l-2.9 -5l2.3 1.5z"/>
</g>
<polyline points="131.5,199 134,215" fill="none" stroke="#ff2a2a" stroke-width="1" />
<polyline points="260,255.7 262,293 263.7,296.4" fill="none" stroke="#ff2a2a" stroke-width="1" />
<polyline points="309,274.5 311.2,304" fill="none" stroke="#ff2a2a" stroke-width="1" />
<polyline points="748,125 751.4,135" fill="none" stroke="#ff2a2a" stroke-width="1" />
<g fill="#ff28ee">
<rect x="70.5" y="279" width="15" height="2"/>
<path d="M70.5 279.3l3 0l-1.5 -2.8z"/>
<path d="M74.5 279.3l3 0l-1.5 -2.8z"/>
<path d="M78.5 279.3l3 0l-1.5 -2.8z"/>
<path d="M82.5 279.3l3 0l-1.5 -2.8z"/>
<rect x="137.5" y="220" width="52" height="2"/>
<path d="M137.5 220.3l3 0l-1.5 -2.8z"/>
<path d="M141.5 220.3l3 0l-1.5 -2.8z"/>
<path d="M145.5 220.3l3 0l-1.5 -2.8z"/>
<path d="M149.5 220.3l3 0l-1.5 -2.8z"/>
<path d="M153.5 220.3l3 0l-1.5 -2.8z"/>
<path d="M157.5 220.3l3 0l-1.5 -2.8z"/>
<path d="M161.5 220.3l3 0l-1.5 -2.8z"/>
<path d="M165.5 220.3l3 0l-1.5 -2.8z"/>
<path d="M169.5 220.3l3 0l-1.5 -2.8z"/>
<path d="M173.5 220.3l3 0l-1.5 -2.8z"/>
<path d="M177.5 220.3l3 0l-1.5 -2.8z"/>
<path d="M181.5 220.3l3 0l-1.5 -2.8z"/>
<path d="M185.5 220.3l3 0l-1.5 -2.8z"/>
<rect x="213.5" y="242" width="11.5" height="2"/>
<path d="M213.5 242.3l3 0l-1.5 -2.8z"/>
<path d="M217.5 242.3l3 0l-1.5 -2.8z"/>
<path d="M221.5 242.3l3 0l-1.5 -2.8z"/>
<rect x="250.1" y="243" width="8.4" height="2"/>
<path d="M250.1 243.3l3 0l-1.5 -2.8z"/>
<path d="M254.1 243.3l3 0l-1.5 -2.8z"/>
<rect x="263" y="284" width="18.5" height="2"/>
<path d="M263 284.3l3 0l-1.5 -2.8z"/>
<path d="M267 284.3l3 0l-1.5 -2.8z"/>
<path d="M271 284.3l3 0l-1.5 -2.8z"/>
<path d="M275 284.3l3 0l-1.5 -2.8z"/>
<rect x="598.3" y="200.2" width="11.6" height="2"/>
<path d="M598.3 200.5l3 0l-1.5 -2.8z"/>
<path d="M602.3 200.5l3 0l-1.5 -2.8z"/>
<path d="M606.3 200.5l3 0l-1.5 -2.8z"/>
<rect x="765.5" y="187.2" width="36" height="2"/>
<path d="M765.5 187.5l3 0l-1.5 -2.8z"/>
<path d="M769.5 187.5l3 0l-1.5 -2.8z"/>
<path d="M773.5 187.5l3 0l-1.5 -2.8z"/>
<path d="M777.5 187.5l3 0l-1.5 -2.8z"/>
<path d="M781.5 187.5l3 0l-1.5 -2.8z"/>
<path d="M785.5 187.5l3 0l-1.5 -2.8z"/>
<path d="M789.5 187.5l3 0l-1.5 -2.8z"/>
<path d="M793.5 187.5l3 0l-1.5 -2.8z"/>
<path d="M797.5 187.5l3 0l-1.5 -2.8z"/>
<rect x="813" y="200.8" width="13.9" height="2"/>
<path d="M813 201.1l3 0l-1.5 -2.8z"/>
<path d="M817 201.1l3 0l-1.5 -2.8z"/>
<path d="M821 201.1l3 0l-1.5 -2.8z"/>
<rect x="838" y="261" width="15.5" height="2"/>
<path d="M838 261.3l3 0l-1.5 -2.8z"/>
<path d="M842 261.3l3 0l-1.5 -2.8z"/>
<path d="M846 261.3l3 0l-1.5 -2.8z"/>
<path d="M850 261.3l3 0l-1.5 -2.8z"/>
<rect x="908.5" y="262" width="9" height="2"/>
<path d="M908.5 262.3l3 0l-1.5 -2.8z"/>
<path d="M912.5 262.3l3 0l-1.5 -2.8z"/>
<rect x="1054.2" y="232.6" width="27.3" height="2"/>
<path d="M1054.2 232.9l3 0l-1.5 -2.8z"/>
<path d="M1058.2 232.9l3 0l-1.5 -2.8z"/>
<path d="M1062.2 232.9l3 0l-1.5 -2.8z"/>
<path d="M1066.2 232.9l3 0l-1.5 -2.8z"/>
<path d="M1070.2 232.9l3 0l-1.5 -2.8z"/>
<path d="M1074.2 232.9l3 0l-1.5 -2.8z"/>
<path d="M1078.2 232.9l3 0l-1.5 -2.8z"/>
<ellipse cx="64" cy="260" rx="3.4" ry="3"/>
<ellipse cx="135.7" cy="220" rx="3.4" ry="3"/>
<ellipse cx="201" cy="228" rx="3.4" ry="3"/>
<ellipse cx="248" cy="229" rx="3.4" ry="3"/>
<ellipse cx="296.6" cy="296.4" rx="3.4" ry="3"/>
<ellipse cx="311.5" cy="310.5" rx="3.4" ry="3"/>
<ellipse cx="563.8" cy="204.9" rx="3.4" ry="3"/>
<ellipse cx="588" cy="194" rx="3.4" ry="3"/>
<ellipse cx="660.5" cy="164.2" rx="3.4" ry="3"/>
<ellipse cx="704.4" cy="146.2" rx="3.4" ry="3"/>
<ellipse cx="812" cy="200.8" rx="3.4" ry="3"/>
<ellipse cx="872.4" cy="257.2" rx="3.4" ry="3"/>
<ellipse cx="907.6" cy="249.4" rx="3.4" ry="3"/>
<ellipse cx="939.4" cy="267.5" rx="3.4" ry="3"/>
<ellipse cx="952" cy="262" rx="3.4" ry="3"/>
<ellipse cx="1130" cy="251.9" rx="3.4" ry="3"/>
<rect x="483" y="213.3" width="19" height="5" rx="2"/>
<rect x="749" y="137.5" width="13.7" height="5" rx="2"/>
<rect x="1038" y="205" width="15" height="5" rx="2"/>
<rect x="1111.6" y="207.1" width="15" height="5" rx="2"/>
</g>
<polyline points="64,260 66,262 69,272 72,279" fill="none" stroke="#ff28ee" stroke-width="1.3" />
<polyline points="201,228 206,233 211,240 215,242" fill="none" stroke="#ff28ee" stroke-width="1.3" />
<polyline points="248,229 250,237 252,243" fill="none" stroke="#ff28ee" stroke-width="1.3" />
<polyline points="257,243 258,245 263,281 264.5,284" fill="none" stroke="#ff28ee" stroke-width="1.3" />
<polyline points="588,194 596,198 600,200.2" fill="none" stroke="#ff28ee" stroke-width="1.3" />
<polyline points="760.7,141.5 763,160 767,186.9" fill="none" stroke="#ff28ee" stroke-width="1.3" />
<polyline points="825.4,201.6 827,214 831.7,229.8 835.6,240.8 839.5,261" fill="none" stroke="#ff28ee" stroke-width="1.3" />
<polyline points="907.6,249.4 910,262" fill="none" stroke="#ff28ee" stroke-width="1.3" />
<polyline points="1051.7,210 1054.9,232" fill="none" stroke="#ff28ee" stroke-width="1.3" />
<polyline points="1125.3,213.5 1127.7,249.5 1130,251.9" fill="none" stroke="#ff28ee" stroke-width="1.3" />
<polyline points="61,277.5 62,276" fill="none" stroke="#30d8ff" stroke-width="1" />
<polyline points="88,286.5 92,270 95,265.5 104,260 112,253 115,240 125,235 127,226 134,226" fill="none" stroke="#30d8ff" stroke-width="1" />
<polyline points="228.4,264.8 236,255 240,250.8" fill="none" stroke="#30d8ff" stroke-width="1" />
<polyline points="316,327.7 320,324 324,315 336,304 348,297.2 364,297.2 368,288.6 372,276 380,275.3 384,272 392,272 396,265.9 403,265.9 406,248 460,247.9 464,239.3 476,236 480,229.9 484,229.9" fill="none" stroke="#30d8ff" stroke-width="1" />
<polyline points="536,230 540,226 544,220.6 550,216.7 560,216.7 571,212 583,212" fill="none" stroke="#30d8ff" stroke-width="1" />
<polyline points="612,220.6 620,216.7 624,203 632,190.8 640,185.3 644,181.4 648,176.7" fill="none" stroke="#30d8ff" stroke-width="1" />
<polyline points="980,294 983,275.3 992,275.3 997,262.8 1003,262.8 1007,242.5 1028,242.5 1036,240" fill="none" stroke="#30d8ff" stroke-width="1" />
<polyline points="1100,259 1102,243" fill="none" stroke="#30d8ff" stroke-width="1" />
<g fill="#1ef2ff">
<rect x="-1.5" y="297" width="20" height="2"/>
<path d="M-1.5 297.3l3 0l-1.5 -2.8z"/>
<path d="M2.5 297.3l3 0l-1.5 -2.8z"/>
<path d="M6.5 297.3l3 0l-1.5 -2.8z"/>
<path d="M10.5 297.3l3 0l-1.5 -2.8z"/>
<path d="M14.5 297.3l3 0l-1.5 -2.8z"/>
<rect x="16.5" y="285" width="17" height="2"/>
<path d="M16.5 285.3l3 0l-1.5 -2.8z"/>
<path d="M20.5 285.3l3 0l-1.5 -2.8z"/>
<path d="M24.5 285.3l3 0l-1.5 -2.8z"/>
<path d="M28.5 285.3l3 0l-1.5 -2.8z"/>
<rect x="33.5" y="282" width="9" height="2"/>
<path d="M33.5 282.3l3 0l-1.5 -2.8z"/>
<path d="M37.5 282.3l3 0l-1.5 -2.8z"/>
<rect x="46.5" y="281" width="3" height="2"/>
<path d="M46.5 281.3l3 0l-1.5 -2.8z"/>
<rect x="50.5" y="279" width="3" height="2"/>
<path d="M50.5 279.3l3 0l-1.5 -2.8z"/>
<rect x="54.5" y="277.5" width="8" height="2"/>
<path d="M54.5 277.8l3 0l-1.5 -2.8z"/>
<path d="M58.5 277.8l3 0l-1.5 -2.8z"/>
<rect x="93.5" y="265.5" width="8" height="2"/>
<path d="M93.5 265.8l3 0l-1.5 -2.8z"/>
<path d="M97.5 265.8l3 0l-1.5 -2.8z"/>
<rect x="102.5" y="260" width="3" height="2"/>
<path d="M102.5 260.3l3 0l-1.5 -2.8z"/>
<rect x="106.5" y="257" width="3" height="2"/>
<path d="M106.5 257.3l3 0l-1.5 -2.8z"/>
<rect x="110.5" y="253" width="3" height="2"/>
<path d="M110.5 253.3l3 0l-1.5 -2.8z"/>
<rect x="114.5" y="240" width="3" height="2"/>
<path d="M114.5 240.3l3 0l-1.5 -2.8z"/>
<rect x="118.5" y="235" width="8" height="2"/>
<path d="M118.5 235.3l3 0l-1.5 -2.8z"/>
<path d="M122.5 235.3l3 0l-1.5 -2.8z"/>
<rect x="126.5" y="226" width="9" height="2"/>
<path d="M126.5 226.3l3 0l-1.5 -2.8z"/>
<path d="M130.5 226.3l3 0l-1.5 -2.8z"/>
<rect x="234.5" y="255" width="3" height="2"/>
<path d="M234.5 255.3l3 0l-1.5 -2.8z"/>
<rect x="238.5" y="250.8" width="7" height="2"/>
<path d="M238.5 251.1l3 0l-1.5 -2.8z"/>
<path d="M242.5 251.1l3 0l-1.5 -2.8z"/>
<rect x="286.5" y="327" width="8" height="2"/>
<path d="M286.5 327.3l3 0l-1.5 -2.8z"/>
<path d="M290.5 327.3l3 0l-1.5 -2.8z"/>
<rect x="318.5" y="324" width="3" height="2"/>
<path d="M318.5 324.3l3 0l-1.5 -2.8z"/>
<rect x="322.5" y="315" width="3" height="2"/>
<path d="M322.5 315.3l3 0l-1.5 -2.8z"/>
<rect x="326.5" y="310.5" width="3" height="2"/>
<path d="M326.5 310.8l3 0l-1.5 -2.8z"/>
<rect x="330.5" y="309" width="3" height="2"/>
<path d="M330.5 309.3l3 0l-1.5 -2.8z"/>
<rect x="334.5" y="304" width="3" height="2"/>
<path d="M334.5 304.3l3 0l-1.5 -2.8z"/>
<rect x="338.5" y="300" width="3" height="2"/>
<path d="M338.5 300.3l3 0l-1.5 -2.8z"/>
<rect x="342.5" y="298" width="3" height="2"/>
<path d="M342.5 298.3l3 0l-1.5 -2.8z"/>
<rect x="346.5" y="297.2" width="19" height="2"/>
<path d="M346.5 297.5l3 0l-1.5 -2.8z"/>
<path d="M350.5 297.5l3 0l-1.5 -2.8z"/>
<path d="M354.5 297.5l3 0l-1.5 -2.8z"/>
<path d="M358.5 297.5l3 0l-1.5 -2.8z"/>
<path d="M362.5 297.5l3 0l-1.5 -2.8z"/>
<rect x="366.5" y="288.6" width="3" height="2"/>
<path d="M366.5 288.9l3 0l-1.5 -2.8z"/>
<rect x="370.5" y="276" width="3" height="2"/>
<path d="M370.5 276.3l3 0l-1.5 -2.8z"/>
<rect x="374.5" y="275.3" width="7" height="2"/>
<path d="M374.5 275.6l3 0l-1.5 -2.8z"/>
<path d="M378.5 275.6l3 0l-1.5 -2.8z"/>
<rect x="382.5" y="272" width="11" height="2"/>
<path d="M382.5 272.3l3 0l-1.5 -2.8z"/>
<path d="M386.5 272.3l3 0l-1.5 -2.8z"/>
<path d="M390.5 272.3l3 0l-1.5 -2.8z"/>
<rect x="394.5" y="265.9" width="10" height="2"/>
<path d="M394.5 266.2l3 0l-1.5 -2.8z"/>
<path d="M398.5 266.2l3 0l-1.5 -2.8z"/>
<rect x="406.5" y="247.9" width="55" height="2"/>
<path d="M406.5 248.2l3 0l-1.5 -2.8z"/>
<path d="M410.5 248.2l3 0l-1.5 -2.8z"/>
<path d="M414.5 248.2l3 0l-1.5 -2.8z"/>
<path d="M418.5 248.2l3 0l-1.5 -2.8z"/>
<path d="M422.5 248.2l3 0l-1.5 -2.8z"/>
<path d="M426.5 248.2l3 0l-1.5 -2.8z"/>
<path d="M430.5 248.2l3 0l-1.5 -2.8z"/>
<path d="M434.5 248.2l3 0l-1.5 -2.8z"/>
<path d="M438.5 248.2l3 0l-1.5 -2.8z"/>
<path d="M442.5 248.2l3 0l-1.5 -2.8z"/>
<path d="M446.5 248.2l3 0l-1.5 -2.8z"/>
<path d="M450.5 248.2l3 0l-1.5 -2.8z"/>
<path d="M454.5 248.2l3 0l-1.5 -2.8z"/>
<path d="M458.5 248.2l3 0l-1.5 -2.8z"/>
<rect x="462.5" y="239.3" width="7" height="2"/>
<path d="M462.5 239.6l3 0l-1.5 -2.8z"/>
<path d="M466.5 239.6l3 0l-1.5 -2.8z"/>
<rect x="470.5" y="236" width="7" height="2"/>
<path d="M470.5 236.3l3 0l-1.5 -2.8z"/>
<path d="M474.5 236.3l3 0l-1.5 -2.8z"/>
<rect x="478.5" y="229.9" width="7" height="2"/>
<path d="M478.5 230.2l3 0l-1.5 -2.8z"/>
<path d="M482.5 230.2l3 0l-1.5 -2.8z"/>
<rect x="502.5" y="230" width="35" height="2"/>
<path d="M502.5 230.3l3 0l-1.5 -2.8z"/>
<path d="M506.5 230.3l3 0l-1.5 -2.8z"/>
<path d="M510.5 230.3l3 0l-1.5 -2.8z"/>
<path d="M514.5 230.3l3 0l-1.5 -2.8z"/>
<path d="M518.5 230.3l3 0l-1.5 -2.8z"/>
<path d="M522.5 230.3l3 0l-1.5 -2.8z"/>
<path d="M526.5 230.3l3 0l-1.5 -2.8z"/>
<path d="M530.5 230.3l3 0l-1.5 -2.8z"/>
<path d="M534.5 230.3l3 0l-1.5 -2.8z"/>
<rect x="538.5" y="226" width="3" height="2"/>
<path d="M538.5 226.3l3 0l-1.5 -2.8z"/>
<rect x="542.5" y="220.6" width="3" height="2"/>
<path d="M542.5 220.9l3 0l-1.5 -2.8z"/>
<rect x="548.5" y="216.7" width="13" height="2"/>
<path d="M548.5 217l3 0l-1.5 -2.8z"/>
<path d="M552.5 217l3 0l-1.5 -2.8z"/>
<path d="M556.5 217l3 0l-1.5 -2.8z"/>
<rect x="569.5" y="212" width="15" height="2"/>
<path d="M569.5 212.3l3 0l-1.5 -2.8z"/>
<path d="M573.5 212.3l3 0l-1.5 -2.8z"/>
<path d="M577.5 212.3l3 0l-1.5 -2.8z"/>
<path d="M581.5 212.3l3 0l-1.5 -2.8z"/>
<rect x="618.5" y="216.7" width="3" height="2"/>
<path d="M618.5 217l3 0l-1.5 -2.8z"/>
<rect x="622.5" y="203" width="7" height="2"/>
<path d="M622.5 203.3l3 0l-1.5 -2.8z"/>
<path d="M626.5 203.3l3 0l-1.5 -2.8z"/>
<rect x="630.5" y="190.8" width="7" height="2"/>
<path d="M630.5 191.1l3 0l-1.5 -2.8z"/>
<path d="M634.5 191.1l3 0l-1.5 -2.8z"/>
<rect x="638.5" y="185.3" width="3" height="2"/>
<path d="M638.5 185.6l3 0l-1.5 -2.8z"/>
<rect x="642.5" y="181.4" width="3" height="2"/>
<path d="M642.5 181.7l3 0l-1.5 -2.8z"/>
<rect x="646.5" y="176.7" width="11" height="2"/>
<path d="M646.5 177l3 0l-1.5 -2.8z"/>
<path d="M650.5 177l3 0l-1.5 -2.8z"/>
<path d="M654.5 177l3 0l-1.5 -2.8z"/>
<rect x="664.5" y="170.5" width="30" height="2"/>
<path d="M664.5 170.8l3 0l-1.5 -2.8z"/>
<path d="M668.5 170.8l3 0l-1.5 -2.8z"/>
<path d="M672.5 170.8l3 0l-1.5 -2.8z"/>
<path d="M676.5 170.8l3 0l-1.5 -2.8z"/>
<path d="M680.5 170.8l3 0l-1.5 -2.8z"/>
<path d="M684.5 170.8l3 0l-1.5 -2.8z"/>
<path d="M688.5 170.8l3 0l-1.5 -2.8z"/>
<rect x="694.5" y="167.3" width="7" height="2"/>
<path d="M694.5 167.6l3 0l-1.5 -2.8z"/>
<path d="M698.5 167.6l3 0l-1.5 -2.8z"/>
<rect x="709.5" y="161.8" width="20" height="2"/>
<path d="M709.5 162.1l3 0l-1.5 -2.8z"/>
<path d="M713.5 162.1l3 0l-1.5 -2.8z"/>
<path d="M717.5 162.1l3 0l-1.5 -2.8z"/>
<path d="M721.5 162.1l3 0l-1.5 -2.8z"/>
<path d="M725.5 162.1l3 0l-1.5 -2.8z"/>
<rect x="729.5" y="158.7" width="20" height="2"/>
<path d="M729.5 159l3 0l-1.5 -2.8z"/>
<path d="M733.5 159l3 0l-1.5 -2.8z"/>
<path d="M737.5 159l3 0l-1.5 -2.8z"/>
<path d="M741.5 159l3 0l-1.5 -2.8z"/>
<path d="M745.5 159l3 0l-1.5 -2.8z"/>
<rect x="858.5" y="301" width="11" height="2"/>
<path d="M858.5 301.3l3 0l-1.5 -2.8z"/>
<path d="M862.5 301.3l3 0l-1.5 -2.8z"/>
<path d="M866.5 301.3l3 0l-1.5 -2.8z"/>
<rect x="878.5" y="289.3" width="27" height="2"/>
<path d="M878.5 289.6l3 0l-1.5 -2.8z"/>
<path d="M882.5 289.6l3 0l-1.5 -2.8z"/>
<path d="M886.5 289.6l3 0l-1.5 -2.8z"/>
<path d="M890.5 289.6l3 0l-1.5 -2.8z"/>
<path d="M894.5 289.6l3 0l-1.5 -2.8z"/>
<path d="M898.5 289.6l3 0l-1.5 -2.8z"/>
<path d="M902.5 289.6l3 0l-1.5 -2.8z"/>
<rect x="920.5" y="297.3" width="16" height="2"/>
<path d="M920.5 297.6l3 0l-1.5 -2.8z"/>
<path d="M924.5 297.6l3 0l-1.5 -2.8z"/>
<path d="M928.5 297.6l3 0l-1.5 -2.8z"/>
<path d="M932.5 297.6l3 0l-1.5 -2.8z"/>
<rect x="952.5" y="294" width="29" height="2"/>
<path d="M952.5 294.3l3 0l-1.5 -2.8z"/>
<path d="M956.5 294.3l3 0l-1.5 -2.8z"/>
<path d="M960.5 294.3l3 0l-1.5 -2.8z"/>
<path d="M964.5 294.3l3 0l-1.5 -2.8z"/>
<path d="M968.5 294.3l3 0l-1.5 -2.8z"/>
<path d="M972.5 294.3l3 0l-1.5 -2.8z"/>
<path d="M976.5 294.3l3 0l-1.5 -2.8z"/>
<rect x="982.5" y="275.3" width="11" height="2"/>
<path d="M982.5 275.6l3 0l-1.5 -2.8z"/>
<path d="M986.5 275.6l3 0l-1.5 -2.8z"/>
<path d="M990.5 275.6l3 0l-1.5 -2.8z"/>
<rect x="992.5" y="269.9" width="3" height="2"/>
<path d="M992.5 270.2l3 0l-1.5 -2.8z"/>
<rect x="995.5" y="262.8" width="9" height="2"/>
<path d="M995.5 263.1l3 0l-1.5 -2.8z"/>
<path d="M999.5 263.1l3 0l-1.5 -2.8z"/>
<rect x="1006.5" y="242.5" width="23" height="2"/>
<path d="M1006.5 242.8l3 0l-1.5 -2.8z"/>
<path d="M1010.5 242.8l3 0l-1.5 -2.8z"/>
<path d="M1014.5 242.8l3 0l-1.5 -2.8z"/>
<path d="M1018.5 242.8l3 0l-1.5 -2.8z"/>
<path d="M1022.5 242.8l3 0l-1.5 -2.8z"/>
<path d="M1026.5 242.8l3 0l-1.5 -2.8z"/>
<rect x="1029.5" y="240" width="8" height="2"/>
<path d="M1029.5 240.3l3 0l-1.5 -2.8z"/>
<path d="M1033.5 240.3l3 0l-1.5 -2.8z"/>
<rect x="1086.5" y="259.5" width="15" height="2"/>
<path d="M1086.5 259.8l3 0l-1.5 -2.8z"/>
<path d="M1090.5 259.8l3 0l-1.5 -2.8z"/>
<path d="M1094.5 259.8l3 0l-1.5 -2.8z"/>
<path d="M1098.5 259.8l3 0l-1.5 -2.8z"/>
<rect x="1101.5" y="243" width="12" height="2"/>
<path d="M1101.5 243.3l3 0l-1.5 -2.8z"/>
<path d="M1105.5 243.3l3 0l-1.5 -2.8z"/>
<path d="M1109.5 243.3l3 0l-1.5 -2.8z"/>
<ellipse cx="88" cy="286.5" rx="3.6" ry="3"/>
<ellipse cx="192.6" cy="237.4" rx="3.6" ry="3"/>
<ellipse cx="228.4" cy="264.8" rx="3.6" ry="3"/>
<ellipse cx="285.7" cy="327" rx="3.6" ry="3"/>
<ellipse cx="304.5" cy="323.8" rx="3.6" ry="3"/>
<ellipse cx="316" cy="327.7" rx="3.6" ry="3"/>
<ellipse cx="612" cy="220.6" rx="3.6" ry="3"/>
<ellipse cx="804.3" cy="223.5" rx="3.6" ry="3"/>
<ellipse cx="856" cy="301.5" rx="3.6" ry="3"/>
<ellipse cx="880" cy="289.3" rx="3.6" ry="3"/>
<ellipse cx="918.6" cy="298.7" rx="3.6" ry="3"/>
<ellipse cx="919.8" cy="298" rx="3.6" ry="3"/>
<ellipse cx="944" cy="309" rx="3.6" ry="3"/>
<ellipse cx="1084.6" cy="262" rx="3.6" ry="3"/>
</g>
<g fill="#cfcfcf" shape-rendering="crispEdges">
<rect x="0" y="399.8" width="1" height="24.2"/>
<rect x="4" y="399.3" width="1" height="24.7"/>
<rect x="8" y="398.8" width="1" height="25.2"/>
<rect x="12" y="398.2" width="1" height="25.8"/>
<rect x="16" y="397.5" width="1" height="26.5"/>
<rect x="20" y="396.8" width="1" height="27.2"/>
<rect x="24" y="396.2" width="1" height="27.8"/>
<rect x="28" y="395.7" width="1" height="28.3"/>
<rect x="32" y="395.2" width="1" height="28.8"/>
<rect x="36" y="395.1" width="1" height="28.9"/>
<rect x="40" y="395.1" width="1" height="28.9"/>
<rect x="44" y="395.2" width="1" height="28.8"/>
<rect x="48" y="395.6" width="1" height="28.4"/>
<rect x="52" y="395.9" width="1" height="28.1"/>
<rect x="56" y="396.2" width="1" height="27.8"/>
<rect x="60" y="396.9" width="1" height="27.1"/>
<rect x="64" y="398.9" width="1" height="25.1"/>
<rect x="68" y="406.9" width="1" height="17.1"/>
<rect x="72" y="411.9" width="1" height="12.1"/>
<rect x="76" y="414.1" width="1" height="9.9"/>
<rect x="80" y="415.7" width="1" height="8.3"/>
<rect x="84" y="416.1" width="1" height="7.9"/>
<rect x="88" y="413.5" width="1" height="10.5"/>
<rect x="92" y="409.7" width="1" height="14.3"/>
<rect x="96" y="405.7" width="1" height="18.3"/>
<rect x="100" y="402.2" width="1" height="21.8"/>
<rect x="104" y="398.7" width="1" height="25.3"/>
<rect x="108" y="395.7" width="1" height="28.3"/>
<rect x="112" y="393.1" width="1" height="30.9"/>
<rect x="116" y="390.4" width="1" height="33.6"/>
<rect x="120" y="387.9" width="1" height="36.1"/>
<rect x="124" y="386.1" width="1" height="37.9"/>
<rect x="128" y="384.5" width="1" height="39.5"/>
<rect x="132" y="383.9" width="1" height="40.1"/>
<rect x="136" y="389.3" width="1" height="34.7"/>
<rect x="140" y="391" width="1" height="33"/>
<rect x="144" y="392.7" width="1" height="31.3"/>
<rect x="148" y="394.4" width="1" height="29.6"/>
<rect x="152" y="396.1" width="1" height="27.9"/>
<rect x="156" y="398.7" width="1" height="25.3"/>
<rect x="160" y="401.2" width="1" height="22.8"/>
<rect x="164" y="402.7" width="1" height="21.3"/>
<rect x="168" y="404.2" width="1" height="19.8"/>
<rect x="172" y="407.2" width="1" height="16.8"/>
<rect x="176" y="410.4" width="1" height="13.6"/>
<rect x="180" y="411.9" width="1" height="12.1"/>
<rect x="184" y="413.4" width="1" height="10.6"/>
<rect x="188" y="414.2" width="1" height="9.8"/>
<rect x="192" y="414.7" width="1" height="9.3"/>
<rect x="196" y="415.8" width="1" height="8.2"/>
<rect x="200" y="417.8" width="1" height="6.2"/>
<rect x="204" y="420.4" width="1" height="3.6"/>
<rect x="212" y="423" width="1" height="4.8"/>
<rect x="216" y="423" width="1" height="7.1"/>
<rect x="220" y="423" width="1" height="9.4"/>
<rect x="224" y="423" width="1" height="9.6"/>
<rect x="228" y="423" width="1" height="5.6"/>
<rect x="232" y="423" width="1" height="1.9"/>
<rect x="236" y="423" width="1" height="2.1"/>
<rect x="240" y="423" width="1" height="2.3"/>
<rect x="244" y="423" width="1" height="2.6"/>
<rect x="248" y="423" width="1" height="3.1"/>
<rect x="252" y="423" width="1" height="3.6"/>
<rect x="256" y="423" width="1" height="10.5"/>
<rect x="260" y="423" width="1" height="20.9"/>
<rect x="264" y="423" width="1" height="28.1"/>
<rect x="268" y="423" width="1" height="36.7"/>
<rect x="272" y="423" width="1" height="42.5"/>
<rect x="276" y="423" width="1" height="46.5"/>
<rect x="280" y="423" width="1" height="46.2"/>
<rect x="284" y="423" width="1" height="43.1"/>
<rect x="288" y="423" width="1" height="40.2"/>
<rect x="292" y="423" width="1" height="37.9"/>
<rect x="296" y="423" width="1" height="37.1"/>
<rect x="300" y="423" width="1" height="36.4"/>
<rect x="304" y="423" width="1" height="35.4"/>
<rect x="308" y="423" width="1" height="33.4"/>
<rect x="312" y="423" width="1" height="31.2"/>
<rect x="316" y="423" width="1" height="28"/>
<rect x="320" y="423" width="1" height="22"/>
<rect x="324" y="423" width="1" height="17.8"/>
<rect x="328" y="423" width="1" height="12.8"/>
<rect x="332" y="423" width="1" height="8.6"/>
<rect x="336" y="423" width="1" height="5.6"/>
<rect x="340" y="423" width="1" height="1.6"/>
<rect x="364" y="419.3" width="1" height="4.7"/>
<rect x="368" y="415.5" width="1" height="8.5"/>
<rect x="372" y="411.5" width="1" height="12.5"/>
<rect x="376" y="410.2" width="1" height="13.8"/>
<rect x="380" y="408.9" width="1" height="15.1"/>
<rect x="384" y="407.9" width="1" height="16.1"/>
<rect x="388" y="406.9" width="1" height="17.1"/>
<rect x="392" y="405.9" width="1" height="18.1"/>
<rect x="396" y="404.7" width="1" height="19.3"/>
<rect x="400" y="403.3" width="1" height="20.7"/>
<rect x="404" y="402" width="1" height="22"/>
<rect x="408" y="400.5" width="1" height="23.5"/>
<rect x="412" y="398.5" width="1" height="25.5"/>
<rect x="416" y="396.5" width="1" height="27.5"/>
<rect x="420" y="395.4" width="1" height="28.6"/>
<rect x="424" y="396.5" width="1" height="27.5"/>
<rect x="428" y="397.4" width="1" height="26.6"/>
<rect x="432" y="397.4" width="1" height="26.6"/>
<rect x="436" y="398.4" width="1" height="25.6"/>
<rect x="440" y="399.8" width="1" height="24.2"/>
<rect x="444" y="400.8" width="1" height="23.2"/>
<rect x="448" y="401" width="1" height="23"/>
<rect x="452" y="401" width="1" height="23"/>
<rect x="456" y="401" width="1" height="23"/>
<rect x="460" y="401" width="1" height="23"/>
<rect x="464" y="401" width="1" height="23"/>
<rect x="468" y="401" width="1" height="23"/>
<rect x="472" y="401.2" width="1" height="22.8"/>
<rect x="476" y="401.5" width="1" height="22.5"/>
<rect x="480" y="401.8" width="1" height="22.2"/>
<rect x="484" y="402" width="1" height="22"/>
<rect x="488" y="402.7" width="1" height="21.3"/>
<rect x="492" y="404.8" width="1" height="19.2"/>
<rect x="496" y="407.8" width="1" height="16.2"/>
<rect x="500" y="410.8" width="1" height="13.2"/>
<rect x="504" y="413" width="1" height="11"/>
<rect x="508" y="413.8" width="1" height="10.2"/>
<rect x="512" y="413.8" width="1" height="10.2"/>
<rect x="516" y="413.9" width="1" height="10.1"/>
<rect x="520" y="414.1" width="1" height="9.9"/>
<rect x="524" y="414.3" width="1" height="9.7"/>
<rect x="528" y="414.1" width="1" height="9.9"/>
<rect x="532" y="413.9" width="1" height="10.1"/>
<rect x="536" y="412.7" width="1" height="11.3"/>
<rect x="540" y="411.1" width="1" height="12.9"/>
<rect x="544" y="410.1" width="1" height="13.9"/>
<rect x="548" y="409.2" width="1" height="14.8"/>
<rect x="552" y="409.2" width="1" height="14.8"/>
<rect x="556" y="409.2" width="1" height="14.8"/>
<rect x="560" y="409.3" width="1" height="14.7"/>
<rect x="564" y="409.5" width="1" height="14.5"/>
<rect x="568" y="409.5" width="1" height="14.5"/>
<rect x="572" y="409.1" width="1" height="14.9"/>
<rect x="576" y="408.7" width="1" height="15.3"/>
<rect x="580" y="408.7" width="1" height="15.3"/>
<rect x="584" y="409" width="1" height="15"/>
<rect x="588" y="410.1" width="1" height="13.9"/>
<rect x="592" y="414.1" width="1" height="9.9"/>
<rect x="596" y="417.1" width="1" height="6.9"/>
<rect x="600" y="419.2" width="1" height="4.8"/>
<rect x="604" y="420.4" width="1" height="3.6"/>
<rect x="608" y="420.3" width="1" height="3.7"/>
<rect x="612" y="418.9" width="1" height="5.1"/>
<rect x="616" y="416.9" width="1" height="7.1"/>
<rect x="620" y="414.9" width="1" height="9.1"/>
<rect x="624" y="411.9" width="1" height="12.1"/>
<rect x="628" y="408.9" width="1" height="15.1"/>
<rect x="632" y="406.1" width="1" height="17.9"/>
<rect x="636" y="403.5" width="1" height="20.5"/>
<rect x="640" y="400.5" width="1" height="23.5"/>
<rect x="644" y="397.7" width="1" height="26.3"/>
<rect x="648" y="395.1" width="1" height="28.9"/>
<rect x="652" y="395.1" width="1" height="28.9"/>
<rect x="656" y="396.8" width="1" height="27.2"/>
<rect x="660" y="397.4" width="1" height="26.6"/>
<rect x="664" y="397.4" width="1" height="26.6"/>
<rect x="668" y="397.4" width="1" height="26.6"/>
<rect x="672" y="397.4" width="1" height="26.6"/>
<rect x="676" y="398.1" width="1" height="25.9"/>
<rect x="680" y="399.3" width="1" height="24.7"/>
<rect x="684" y="400.3" width="1" height="23.7"/>
<rect x="688" y="400.6" width="1" height="23.4"/>
<rect x="692" y="400.9" width="1" height="23.1"/>
<rect x="696" y="401" width="1" height="23"/>
<rect x="700" y="401" width="1" height="23"/>
<rect x="704" y="401.5" width="1" height="22.5"/>
<rect x="708" y="402.5" width="1" height="21.5"/>
<rect x="712" y="403.5" width="1" height="20.5"/>
<rect x="716" y="404.5" width="1" height="19.5"/>
<rect x="720" y="405.5" width="1" height="18.5"/>
<rect x="724" y="405.6" width="1" height="18.4"/>
<rect x="728" y="405.6" width="1" height="18.4"/>
<rect x="732" y="404.6" width="1" height="19.4"/>
<rect x="736" y="403.4" width="1" height="20.6"/>
<rect x="740" y="403.7" width="1" height="20.3"/>
<rect x="744" y="404" width="1" height="20"/>
<rect x="748" y="406.2" width="1" height="17.8"/>
<rect x="752" y="408.7" width="1" height="15.3"/>
<rect x="756" y="411.9" width="1" height="12.1"/>
<rect x="760" y="418.9" width="1" height="5.1"/>
<rect x="764" y="423" width="1" height="3.4"/>
<rect x="768" y="423" width="1" height="12.7"/>
<rect x="772" y="423" width="1" height="18.7"/>
<rect x="776" y="423" width="1" height="21.8"/>
<rect x="780" y="423" width="1" height="22.9"/>
<rect x="784" y="423" width="1" height="23.4"/>
<rect x="788" y="423" width="1" height="24.7"/>
<rect x="792" y="423" width="1" height="27.1"/>
<rect x="796" y="423" width="1" height="26.6"/>
<rect x="800" y="423" width="1" height="26"/>
<rect x="804" y="423" width="1" height="25.8"/>
<rect x="808" y="423" width="1" height="25.6"/>
<rect x="812" y="423" width="1" height="25.9"/>
<rect x="816" y="423" width="1" height="26.6"/>
<rect x="820" y="423" width="1" height="28.6"/>
<rect x="824" y="423" width="1" height="34.7"/>
<rect x="828" y="423" width="1" height="41.7"/>
<rect x="832" y="423" width="1" height="53.1"/>
<rect x="836" y="423" width="1" height="60.1"/>
<rect x="840" y="423" width="1" height="66.8"/>
<rect x="844" y="423" width="1" height="68.9"/>
<rect x="848" y="423" width="1" height="71.5"/>
<rect x="852" y="423" width="1" height="68"/>
<rect x="856" y="423" width="1" height="63"/>
<rect x="860" y="423" width="1" height="54"/>
<rect x="864" y="423" width="1" height="48.1"/>
<rect x="868" y="423" width="1" height="46.3"/>
<rect x="872" y="423" width="1" height="43.7"/>
<rect x="876" y="423" width="1" height="40.4"/>
<rect x="880" y="423" width="1" height="36.5"/>
<rect x="884" y="423" width="1" height="32.5"/>
<rect x="888" y="423" width="1" height="28.5"/>
<rect x="892" y="423" width="1" height="25.4"/>
<rect x="896" y="423" width="1" height="23.2"/>
<rect x="900" y="423" width="1" height="21.2"/>
<rect x="904" y="423" width="1" height="20.4"/>
<rect x="908" y="423" width="1" height="21.1"/>
<rect x="912" y="423" width="1" height="22.2"/>
<rect x="916" y="423" width="1" height="23.6"/>
<rect x="920" y="423" width="1" height="21.8"/>
<rect x="924" y="423" width="1" height="20.8"/>
<rect x="928" y="423" width="1" height="20.1"/>
<rect x="932" y="423" width="1" height="18.8"/>
<rect x="936" y="423" width="1" height="17.5"/>
<rect x="940" y="423" width="1" height="16.1"/>
<rect x="944" y="423" width="1" height="14.8"/>
<rect x="948" y="423" width="1" height="13.5"/>
<rect x="952" y="423" width="1" height="11.6"/>
<rect x="956" y="423" width="1" height="10"/>
<rect x="960" y="423" width="1" height="8.7"/>
<rect x="964" y="423" width="1" height="7.3"/>
<rect x="968" y="423" width="1" height="6"/>
<rect x="972" y="423" width="1" height="4"/>
<rect x="976" y="423" width="1" height="1.8"/>
<rect x="988" y="417.2" width="1" height="6.8"/>
<rect x="992" y="415.2" width="1" height="8.8"/>
<rect x="996" y="412.3" width="1" height="11.7"/>
<rect x="1000" y="409.6" width="1" height="14.4"/>
<rect x="1004" y="406.6" width="1" height="17.4"/>
<rect x="1008" y="403.6" width="1" height="20.4"/>
<rect x="1012" y="401.1" width="1" height="22.9"/>
<rect x="1016" y="399.6" width="1" height="24.4"/>
<rect x="1020" y="398.9" width="1" height="25.1"/>
<rect x="1024" y="398.2" width="1" height="25.8"/>
<rect x="1028" y="397.6" width="1" height="26.4"/>
<rect x="1032" y="397.4" width="1" height="26.6"/>
<rect x="1036" y="397.6" width="1" height="26.4"/>
<rect x="1040" y="400.6" width="1" height="23.4"/>
<rect x="1044" y="402.7" width="1" height="21.3"/>
<rect x="1048" y="407.1" width="1" height="16.9"/>
<rect x="1052" y="411.3" width="1" height="12.7"/>
<rect x="1056" y="416.3" width="1" height="7.7"/>
<rect x="1060" y="420.5" width="1" height="3.5"/>
<rect x="1068" y="423" width="1" height="3.9"/>
<rect x="1072" y="423" width="1" height="4.4"/>
<rect x="1076" y="423" width="1" height="4.9"/>
<rect x="1080" y="423" width="1" height="5.3"/>
<rect x="1084" y="423" width="1" height="4.9"/>
<rect x="1088" y="423" width="1" height="4.3"/>
<rect x="1092" y="423" width="1" height="3.7"/>
<rect x="1096" y="420.1" width="1" height="3.9"/>
<rect x="1100" y="416.3" width="1" height="7.7"/>
<rect x="1104" y="413.3" width="1" height="10.7"/>
<rect x="1108" y="413.7" width="1" height="10.3"/>
<rect x="1112" y="411.5" width="1" height="12.5"/>
<rect x="1116" y="414.5" width="1" height="9.5"/>
<rect x="1120" y="414.2" width="1" height="9.8"/>
<rect x="1124" y="416.5" width="1" height="7.5"/>
<rect x="1128" y="423" width="1" height="5.9"/>
<rect x="1132" y="423" width="1" height="19.1"/>
</g>
<g stroke="#d4d4d4" stroke-dasharray="5 3" shape-rendering="crispEdges"><line x1="0" y1="423.5" x2="1141" y2="423.5"/></g>
<polyline points="0,404.5 9.4,403.3 18.7,399.8 28.1,396.3 42.2,395.1 65.6,395.6 75,399.8 84.4,405.6 93.7,409.2 103.1,408 112.5,403.3 121.9,396.3 131.2,390.4 140.6,388.1 150,388.1 159.4,391.6 168.7,396.3 178.1,401 187.5,405.6 196.9,410.3 206.2,415 215.6,419.7 225,424.4 234.4,427.9 243.7,429.1 253.1,429.1 262.5,432.6 271.9,442 281.2,452.5 289.7,460.2 299.4,464.2 308.7,463.1 318.1,458.4 327.5,452.5 336.9,443.1 346.2,434.9 355.6,426.7 365,419.7 374.4,415 383.7,411.5 393.1,408 402.5,404.5 411.9,401 421.2,397.4 430.6,396.3 440,396.3 449.4,396.7 458.7,398.6 468.1,400.2 477.5,401 486.9,401.7 496.2,403.3 505.6,405.6 515,409.2 524.4,411.5 533.7,412.7 543.1,411.5 552.5,410.3 561.9,409.6 571.2,409.2 579.7,409.2 589.4,409.2 598.7,411.5 608.1,413.8 617.5,416.2 626.9,415 636.2,411.5 645.6,405.6 655,401 664.4,397.4 673.7,396.3 683.1,397 692.5,398.6 701.9,400.2 711.2,401.7 720.6,402.6 730,403.3 744,403.3 753.4,404.5 760.5,405.6 767.5,412.7 774.5,419.7 781.5,429.1 790.9,439.6 800.3,446.7 809.7,449 819,450.2 828.4,453.7 837.8,463.1 847.2,474.8 856.5,483 859.6,484.1 869.4,483 878.7,477.1 888.1,466.6 897.5,457.2 906.9,450.2 916.2,446.7 925.6,444.8 935,444.3 944.4,443.1 953.7,440.8 963.1,437.3 972.5,433.8 981.9,429.8 991.2,424.4 1000.6,418.5 1010,412.7 1019.4,405.6 1028.7,401 1038.1,398.6 1047.5,398.6 1054.5,402.1 1061.5,406.8 1068.6,412.7 1075.6,418.5 1082.6,422 1089.7,424.4 1096.7,424.4 1103.7,422 1113.1,418.5 1122.5,415.7 1129.5,417.4" fill="none" stroke="#e02020" stroke-width="1" stroke-dasharray="2.5 1.5"/>
<g shape-rendering="crispEdges">
<rect x="20" y="573.5" width="1" height="10.5" fill="#d6d69a"/>
<rect x="20" y="584" width="1" height="17.6" fill="#d42020"/>
<rect x="24" y="574.7" width="1" height="9.3" fill="#d6d69a"/>
<rect x="24" y="584" width="1" height="12.9" fill="#d42020"/>
<rect x="28" y="574.7" width="1" height="9.3" fill="#d6d69a"/>
<rect x="28" y="584" width="1" height="11.7" fill="#d42020"/>
<rect x="32" y="575.1" width="1" height="8.9" fill="#d6d69a"/>
<rect x="32" y="584" width="1" height="12.9" fill="#d42020"/>
<rect x="36" y="575.8" width="1" height="8.2" fill="#d6d69a"/>
<rect x="36" y="584" width="1" height="11.7" fill="#d42020"/>
<rect x="40" y="578.2" width="1" height="5.8" fill="#d6d69a"/>
<rect x="40" y="584" width="1" height="5.9" fill="#d42020"/>
<rect x="44" y="575.1" width="1" height="8.9" fill="#d6d69a"/>
<rect x="44" y="584" width="1" height="7.1" fill="#d42020"/>
<rect x="48" y="577" width="1" height="7" fill="#d6d69a"/>
<rect x="48" y="584" width="1" height="9.4" fill="#d42020"/>
<rect x="52" y="577" width="1" height="7" fill="#d6d69a"/>
<rect x="52" y="584" width="1" height="7.1" fill="#d42020"/>
<rect x="56" y="575.1" width="1" height="8.9" fill="#d6d69a"/>
<rect x="56" y="584" width="1" height="8.2" fill="#d42020"/>
<rect x="60" y="580.5" width="1" height="3.5" fill="#d6d69a"/>
<rect x="60" y="584" width="1" height="7.1" fill="#d42020"/>
<rect x="64" y="582.9" width="1" height="1.1" fill="#d42020"/>
<rect x="68" y="584" width="1" height="11.7" fill="#d6d69a"/>
<rect x="68" y="570" width="1" height="14" fill="#d42020"/>
<rect x="72" y="584" width="1" height="8.2" fill="#d6d69a"/>
<rect x="72" y="570" width="1" height="14" fill="#d42020"/>
<rect x="76" y="584" width="1" height="4.7" fill="#d6d69a"/>
<rect x="76" y="571.8" width="1" height="12.2" fill="#d42020"/>
<rect x="88" y="578.2" width="1" height="5.8" fill="#d6d69a"/>
<rect x="88" y="584" width="1" height="7.1" fill="#d42020"/>
<rect x="92" y="574.2" width="1" height="9.8" fill="#d6d69a"/>
<rect x="92" y="584" width="1" height="15.3" fill="#d42020"/>
<rect x="96" y="573.5" width="1" height="10.5" fill="#d6d69a"/>
<rect x="96" y="584" width="1" height="18.8" fill="#d42020"/>
<rect x="100" y="570.4" width="1" height="13.6" fill="#d6d69a"/>
<rect x="100" y="584" width="1" height="17.6" fill="#d42020"/>
<rect x="104" y="572.3" width="1" height="11.7" fill="#d6d69a"/>
<rect x="104" y="584" width="1" height="18.8" fill="#d42020"/>
<rect x="108" y="571.1" width="1" height="12.9" fill="#d6d69a"/>
<rect x="108" y="584" width="1" height="18.8" fill="#d42020"/>
<rect x="112" y="565.7" width="1" height="18.3" fill="#d6d69a"/>
<rect x="112" y="584" width="1" height="23" fill="#d42020"/>
<rect x="116" y="566.4" width="1" height="17.6" fill="#d6d69a"/>
<rect x="116" y="584" width="1" height="23.5" fill="#d42020"/>
<rect x="120" y="568.1" width="1" height="15.9" fill="#d6d69a"/>
<rect x="120" y="584" width="1" height="21.1" fill="#d42020"/>
<rect x="124" y="565.7" width="1" height="18.3" fill="#d6d69a"/>
<rect x="124" y="584" width="1" height="19.9" fill="#d42020"/>
<rect x="128" y="564.8" width="1" height="19.2" fill="#d6d69a"/>
<rect x="128" y="584" width="1" height="22.3" fill="#d42020"/>
<rect x="132" y="574.7" width="1" height="9.3" fill="#d6d69a"/>
<rect x="132" y="584" width="1" height="11.7" fill="#d42020"/>
<rect x="136" y="576.5" width="1" height="7.5" fill="#d6d69a"/>
<rect x="136" y="584" width="1" height="3.5" fill="#d42020"/>
<rect x="140" y="577" width="1" height="7" fill="#d6d69a"/>
<rect x="140" y="584" width="1" height="2.8" fill="#d42020"/>
<rect x="144" y="578.2" width="1" height="5.8" fill="#d6d69a"/>
<rect x="144" y="584" width="1" height="1.9" fill="#d42020"/>
<rect x="148" y="577.5" width="1" height="6.5" fill="#d6d69a"/>
<rect x="148" y="584" width="1" height="4.7" fill="#d42020"/>
<rect x="152" y="578.9" width="1" height="5.1" fill="#d6d69a"/>
<rect x="152" y="584" width="1" height="6.6" fill="#d42020"/>
<rect x="156" y="582.9" width="1" height="1.1" fill="#d6d69a"/>
<rect x="156" y="584" width="1" height="1.2" fill="#d42020"/>
<rect x="160" y="580.5" width="1" height="3.5" fill="#d42020"/>
<rect x="164" y="581.2" width="1" height="2.8" fill="#d42020"/>
<rect x="172" y="584" width="1" height="7.5" fill="#d6d69a"/>
<rect x="172" y="578.2" width="1" height="5.8" fill="#d42020"/>
<rect x="176" y="584" width="1" height="4.7" fill="#d6d69a"/>
<rect x="176" y="576.5" width="1" height="7.5" fill="#d42020"/>
<rect x="180" y="584" width="1" height="1.2" fill="#d6d69a"/>
<rect x="180" y="582.9" width="1" height="1.1" fill="#d42020"/>
<rect x="184" y="582.9" width="1" height="1.1" fill="#d6d69a"/>
<rect x="188" y="584" width="1" height="1.9" fill="#d6d69a"/>
<rect x="188" y="581.7" width="1" height="2.3" fill="#d42020"/>
<rect x="200" y="584" width="1" height="6.6" fill="#d6d69a"/>
<rect x="200" y="578.9" width="1" height="5.1" fill="#d42020"/>
<rect x="204" y="584" width="1" height="2.4" fill="#d6d69a"/>
<rect x="204" y="579.8" width="1" height="4.2" fill="#d42020"/>
<rect x="208" y="584" width="1" height="14.1" fill="#d6d69a"/>
<rect x="208" y="573.5" width="1" height="10.5" fill="#d42020"/>
<rect x="212" y="584" width="1" height="12.9" fill="#d6d69a"/>
<rect x="212" y="564.1" width="1" height="19.9" fill="#d42020"/>
<rect x="216" y="584" width="1" height="10.6" fill="#d6d69a"/>
<rect x="216" y="570" width="1" height="14" fill="#d42020"/>
<rect x="220" y="584" width="1" height="9.4" fill="#d6d69a"/>
<rect x="220" y="570" width="1" height="14" fill="#d42020"/>
<rect x="224" y="584" width="1" height="5.9" fill="#d6d69a"/>
<rect x="224" y="578.2" width="1" height="5.8" fill="#d42020"/>
<rect x="228" y="581.7" width="1" height="2.3" fill="#d42020"/>
<rect x="232" y="580.5" width="1" height="3.5" fill="#d6d69a"/>
<rect x="232" y="584" width="1" height="6.6" fill="#d42020"/>
<rect x="236" y="581.7" width="1" height="2.3" fill="#d6d69a"/>
<rect x="236" y="584" width="1" height="11.7" fill="#d42020"/>
<rect x="240" y="580.5" width="1" height="3.5" fill="#d6d69a"/>
<rect x="240" y="584" width="1" height="8.2" fill="#d42020"/>
<rect x="244" y="582.9" width="1" height="1.1" fill="#d6d69a"/>
<rect x="244" y="584" width="1" height="4.2" fill="#d42020"/>
<rect x="248" y="584" width="1" height="11.7" fill="#d6d69a"/>
<rect x="248" y="572.3" width="1" height="11.7" fill="#d42020"/>
<rect x="252" y="584" width="1" height="9.4" fill="#d6d69a"/>
<rect x="252" y="564.1" width="1" height="19.9" fill="#d42020"/>
<rect x="256" y="584" width="1" height="15.3" fill="#d6d69a"/>
<rect x="256" y="564.8" width="1" height="19.2" fill="#d42020"/>
<rect x="260" y="584" width="1" height="24.6" fill="#d6d69a"/>
<rect x="260" y="552.4" width="1" height="31.6" fill="#d42020"/>
<rect x="264" y="584" width="1" height="23.5" fill="#d6d69a"/>
<rect x="264" y="547.7" width="1" height="36.3" fill="#d42020"/>
<rect x="268" y="584" width="1" height="39.9" fill="#d6d69a"/>
<rect x="268" y="539.5" width="1" height="44.5" fill="#d42020"/>
<rect x="272" y="584" width="1" height="22.3" fill="#d6d69a"/>
<rect x="272" y="541.8" width="1" height="42.2" fill="#d42020"/>
<rect x="276" y="584" width="1" height="27.7" fill="#d6d69a"/>
<rect x="276" y="555.9" width="1" height="28.1" fill="#d42020"/>
<rect x="280" y="584" width="1" height="17.6" fill="#d6d69a"/>
<rect x="280" y="559.4" width="1" height="24.6" fill="#d42020"/>
<rect x="284" y="584" width="1" height="8.2" fill="#d6d69a"/>
<rect x="284" y="575.8" width="1" height="8.2" fill="#d42020"/>
<rect x="288" y="584" width="1" height="5.9" fill="#d6d69a"/>
<rect x="292" y="584" width="1" height="11.7" fill="#d6d69a"/>
<rect x="292" y="577" width="1" height="7" fill="#d42020"/>
<rect x="296" y="584" width="1" height="19.9" fill="#d6d69a"/>
<rect x="296" y="570" width="1" height="14" fill="#d42020"/>
<rect x="300" y="584" width="1" height="9.4" fill="#d6d69a"/>
<rect x="300" y="566.4" width="1" height="17.6" fill="#d42020"/>
<rect x="304" y="584" width="1" height="8.2" fill="#d6d69a"/>
<rect x="304" y="581.7" width="1" height="2.3" fill="#d42020"/>
<rect x="308" y="584" width="1" height="6.6" fill="#d6d69a"/>
<rect x="308" y="581.2" width="1" height="2.8" fill="#d42020"/>
<rect x="312" y="584" width="1" height="9.4" fill="#d6d69a"/>
<rect x="312" y="574.2" width="1" height="9.8" fill="#d42020"/>
<rect x="320" y="578.2" width="1" height="5.8" fill="#d6d69a"/>
<rect x="320" y="584" width="1" height="11.7" fill="#d42020"/>
<rect x="324" y="572.3" width="1" height="11.7" fill="#d6d69a"/>
<rect x="324" y="584" width="1" height="16.4" fill="#d42020"/>
<rect x="328" y="570" width="1" height="14" fill="#d6d69a"/>
<rect x="328" y="584" width="1" height="16.4" fill="#d42020"/>
<rect x="332" y="572.3" width="1" height="11.7" fill="#d6d69a"/>
<rect x="332" y="584" width="1" height="12.9" fill="#d42020"/>
<rect x="336" y="572.3" width="1" height="11.7" fill="#d6d69a"/>
<rect x="336" y="584" width="1" height="10.6" fill="#d42020"/>
<rect x="340" y="568.8" width="1" height="15.2" fill="#d6d69a"/>
<rect x="340" y="584" width="1" height="11.7" fill="#d42020"/>
<rect x="344" y="573.5" width="1" height="10.5" fill="#d6d69a"/>
<rect x="344" y="584" width="1" height="11.7" fill="#d42020"/>
<rect x="348" y="581.7" width="1" height="2.3" fill="#d6d69a"/>
<rect x="348" y="584" width="1" height="1.2" fill="#d42020"/>
<rect x="352" y="575.8" width="1" height="8.2" fill="#d6d69a"/>
<rect x="352" y="584" width="1" height="5.9" fill="#d42020"/>
<rect x="356" y="577.5" width="1" height="6.5" fill="#d6d69a"/>
<rect x="356" y="584" width="1" height="6.6" fill="#d42020"/>
<rect x="360" y="578.2" width="1" height="5.8" fill="#d6d69a"/>
<rect x="360" y="584" width="1" height="5.2" fill="#d42020"/>
<rect x="364" y="573.5" width="1" height="10.5" fill="#d6d69a"/>
<rect x="364" y="584" width="1" height="7.1" fill="#d42020"/>
<rect x="368" y="568.8" width="1" height="15.2" fill="#d6d69a"/>
<rect x="368" y="584" width="1" height="15.3" fill="#d42020"/>
<rect x="372" y="571.1" width="1" height="12.9" fill="#d6d69a"/>
<rect x="372" y="584" width="1" height="15.3" fill="#d42020"/>
<rect x="376" y="574.7" width="1" height="9.3" fill="#d6d69a"/>
<rect x="376" y="584" width="1" height="11.7" fill="#d42020"/>
<rect x="380" y="573.5" width="1" height="10.5" fill="#d6d69a"/>
<rect x="380" y="584" width="1" height="10.6" fill="#d42020"/>
<rect x="384" y="575.8" width="1" height="8.2" fill="#d6d69a"/>
<rect x="384" y="584" width="1" height="9.4" fill="#d42020"/>
<rect x="388" y="577" width="1" height="7" fill="#d6d69a"/>
<rect x="388" y="584" width="1" height="6.6" fill="#d42020"/>
<rect x="392" y="576.5" width="1" height="7.5" fill="#d6d69a"/>
<rect x="392" y="584" width="1" height="7.5" fill="#d42020"/>
<rect x="396" y="575.1" width="1" height="8.9" fill="#d6d69a"/>
<rect x="396" y="584" width="1" height="10.6" fill="#d42020"/>
<rect x="400" y="576.5" width="1" height="7.5" fill="#d6d69a"/>
<rect x="400" y="584" width="1" height="8.9" fill="#d42020"/>
<rect x="404" y="573.5" width="1" height="10.5" fill="#d6d69a"/>
<rect x="404" y="584" width="1" height="10.6" fill="#d42020"/>
<rect x="408" y="572.3" width="1" height="11.7" fill="#d6d69a"/>
<rect x="408" y="584" width="1" height="12.9" fill="#d42020"/>
<rect x="412" y="571.1" width="1" height="12.9" fill="#d6d69a"/>
<rect x="412" y="584" width="1" height="14.1" fill="#d42020"/>
<rect x="416" y="570" width="1" height="14" fill="#d6d69a"/>
<rect x="416" y="584" width="1" height="16.4" fill="#d42020"/>
<rect x="420" y="571.1" width="1" height="12.9" fill="#d6d69a"/>
<rect x="420" y="584" width="1" height="12.9" fill="#d42020"/>
<rect x="424" y="577" width="1" height="7" fill="#d6d69a"/>
<rect x="424" y="584" width="1" height="7.1" fill="#d42020"/>
<rect x="428" y="577" width="1" height="7" fill="#d6d69a"/>
<rect x="428" y="584" width="1" height="8.2" fill="#d42020"/>
<rect x="432" y="577.5" width="1" height="6.5" fill="#d6d69a"/>
<rect x="432" y="584" width="1" height="8.2" fill="#d42020"/>
<rect x="436" y="580.5" width="1" height="3.5" fill="#d6d69a"/>
<rect x="436" y="584" width="1" height="3.5" fill="#d42020"/>
<rect x="440" y="581.2" width="1" height="2.8" fill="#d6d69a"/>
<rect x="440" y="584" width="1" height="2.4" fill="#d42020"/>
<rect x="444" y="580.5" width="1" height="3.5" fill="#d6d69a"/>
<rect x="444" y="584" width="1" height="2.8" fill="#d42020"/>
<rect x="448" y="579.8" width="1" height="4.2" fill="#d6d69a"/>
<rect x="448" y="584" width="1" height="5.9" fill="#d42020"/>
<rect x="452" y="576.5" width="1" height="7.5" fill="#d6d69a"/>
<rect x="452" y="584" width="1" height="6.6" fill="#d42020"/>
<rect x="456" y="581.2" width="1" height="2.8" fill="#d6d69a"/>
<rect x="456" y="584" width="1" height="4.7" fill="#d42020"/>
<rect x="460" y="579.8" width="1" height="4.2" fill="#d6d69a"/>
<rect x="460" y="584" width="1" height="5.2" fill="#d42020"/>
<rect x="464" y="578.9" width="1" height="5.1" fill="#d6d69a"/>
<rect x="464" y="584" width="1" height="8.2" fill="#d42020"/>
<rect x="468" y="580.5" width="1" height="3.5" fill="#d6d69a"/>
<rect x="468" y="584" width="1" height="5.9" fill="#d42020"/>
<rect x="472" y="579.8" width="1" height="4.2" fill="#d6d69a"/>
<rect x="472" y="584" width="1" height="5.9" fill="#d42020"/>
<rect x="476" y="579.3" width="1" height="4.7" fill="#d6d69a"/>
<rect x="476" y="584" width="1" height="5.2" fill="#d42020"/>
<rect x="480" y="581.2" width="1" height="2.8" fill="#d6d69a"/>
<rect x="480" y="584" width="1" height="5.2" fill="#d42020"/>
<rect x="484" y="582.9" width="1" height="1.1" fill="#d6d69a"/>
<rect x="484" y="584" width="1" height="5.9" fill="#d42020"/>
<rect x="492" y="582.9" width="1" height="1.1" fill="#d6d69a"/>
<rect x="496" y="584" width="1" height="4.2" fill="#d6d69a"/>
<rect x="500" y="584" width="1" height="3.5" fill="#d6d69a"/>
<rect x="500" y="577" width="1" height="7" fill="#d42020"/>
<rect x="504" y="582.9" width="1" height="1.1" fill="#d42020"/>
<rect x="516" y="582.9" width="1" height="1.1" fill="#d6d69a"/>
<rect x="516" y="584" width="1" height="1.9" fill="#d42020"/>
<rect x="520" y="582.1" width="1" height="1.9" fill="#d6d69a"/>
<rect x="520" y="584" width="1" height="2.4" fill="#d42020"/>
<rect x="528" y="582.9" width="1" height="1.1" fill="#d6d69a"/>
<rect x="528" y="584" width="1" height="1.2" fill="#d42020"/>
<rect x="532" y="584" width="1" height="1.2" fill="#d42020"/>
<rect x="536" y="582.1" width="1" height="1.9" fill="#d6d69a"/>
<rect x="536" y="584" width="1" height="2.8" fill="#d42020"/>
<rect x="540" y="577.5" width="1" height="6.5" fill="#d6d69a"/>
<rect x="540" y="584" width="1" height="8.9" fill="#d42020"/>
<rect x="544" y="579.3" width="1" height="4.7" fill="#d6d69a"/>
<rect x="544" y="584" width="1" height="9.4" fill="#d42020"/>
<rect x="548" y="577" width="1" height="7" fill="#d6d69a"/>
<rect x="548" y="584" width="1" height="7.1" fill="#d42020"/>
<rect x="552" y="578.9" width="1" height="5.1" fill="#d6d69a"/>
<rect x="552" y="584" width="1" height="8.2" fill="#d42020"/>
<rect x="556" y="578.9" width="1" height="5.1" fill="#d6d69a"/>
<rect x="556" y="584" width="1" height="6.6" fill="#d42020"/>
<rect x="560" y="580.5" width="1" height="3.5" fill="#d6d69a"/>
<rect x="560" y="584" width="1" height="3.5" fill="#d42020"/>
<rect x="564" y="584" width="1" height="1.2" fill="#d42020"/>
<rect x="568" y="581.7" width="1" height="2.3" fill="#d6d69a"/>
<rect x="572" y="578.2" width="1" height="5.8" fill="#d6d69a"/>
<rect x="572" y="584" width="1" height="4.2" fill="#d42020"/>
<rect x="576" y="579.3" width="1" height="4.7" fill="#d6d69a"/>
<rect x="576" y="584" width="1" height="5.9" fill="#d42020"/>
<rect x="580" y="577" width="1" height="7" fill="#d6d69a"/>
<rect x="580" y="584" width="1" height="6.6" fill="#d42020"/>
<rect x="584" y="581.7" width="1" height="2.3" fill="#d6d69a"/>
<rect x="584" y="584" width="1" height="5.9" fill="#d42020"/>
<rect x="588" y="584" width="1" height="1.2" fill="#d42020"/>
<rect x="592" y="584" width="1" height="3.5" fill="#d6d69a"/>
<rect x="596" y="584" width="1" height="3.5" fill="#d6d69a"/>
<rect x="596" y="572.3" width="1" height="11.7" fill="#d42020"/>
<rect x="600" y="584" width="1" height="1.2" fill="#d6d69a"/>
<rect x="600" y="579.3" width="1" height="4.7" fill="#d42020"/>
<rect x="604" y="584" width="1" height="2.8" fill="#d6d69a"/>
<rect x="604" y="578.2" width="1" height="5.8" fill="#d42020"/>
<rect x="616" y="582.9" width="1" height="1.1" fill="#d6d69a"/>
<rect x="616" y="584" width="1" height="8.2" fill="#d42020"/>
<rect x="620" y="576.5" width="1" height="7.5" fill="#d6d69a"/>
<rect x="620" y="584" width="1" height="12.9" fill="#d42020"/>
<rect x="624" y="577" width="1" height="7" fill="#d6d69a"/>
<rect x="624" y="584" width="1" height="15.3" fill="#d42020"/>
<rect x="628" y="573" width="1" height="11" fill="#d6d69a"/>
<rect x="628" y="584" width="1" height="16" fill="#d42020"/>
<rect x="632" y="572.3" width="1" height="11.7" fill="#d6d69a"/>
<rect x="632" y="584" width="1" height="16.4" fill="#d42020"/>
<rect x="636" y="571.1" width="1" height="12.9" fill="#d6d69a"/>
<rect x="636" y="584" width="1" height="16.9" fill="#d42020"/>
<rect x="640" y="571.1" width="1" height="12.9" fill="#d6d69a"/>
<rect x="640" y="584" width="1" height="17.6" fill="#d42020"/>
<rect x="644" y="568.3" width="1" height="15.7" fill="#d6d69a"/>
<rect x="644" y="584" width="1" height="19.2" fill="#d42020"/>
<rect x="648" y="570" width="1" height="14" fill="#d6d69a"/>
<rect x="648" y="584" width="1" height="17.6" fill="#d42020"/>
<rect x="652" y="571.8" width="1" height="12.2" fill="#d6d69a"/>
<rect x="652" y="584" width="1" height="14.1" fill="#d42020"/>
<rect x="656" y="576.5" width="1" height="7.5" fill="#d6d69a"/>
<rect x="656" y="584" width="1" height="7.1" fill="#d42020"/>
<rect x="660" y="579.3" width="1" height="4.7" fill="#d6d69a"/>
<rect x="660" y="584" width="1" height="3.5" fill="#d42020"/>
<rect x="664" y="577.5" width="1" height="6.5" fill="#d6d69a"/>
<rect x="664" y="584" width="1" height="4.7" fill="#d42020"/>
<rect x="668" y="574.7" width="1" height="9.3" fill="#d6d69a"/>
<rect x="668" y="584" width="1" height="9.4" fill="#d42020"/>
<rect x="672" y="576.5" width="1" height="7.5" fill="#d6d69a"/>
<rect x="672" y="584" width="1" height="8.2" fill="#d42020"/>
<rect x="676" y="577" width="1" height="7" fill="#d6d69a"/>
<rect x="676" y="584" width="1" height="7.5" fill="#d42020"/>
<rect x="680" y="578.9" width="1" height="5.1" fill="#d6d69a"/>
<rect x="680" y="584" width="1" height="5.2" fill="#d42020"/>
<rect x="684" y="579.8" width="1" height="4.2" fill="#d6d69a"/>
<rect x="684" y="584" width="1" height="4.7" fill="#d42020"/>
<rect x="688" y="580.5" width="1" height="3.5" fill="#d6d69a"/>
<rect x="688" y="584" width="1" height="4.2" fill="#d42020"/>
<rect x="692" y="578.9" width="1" height="5.1" fill="#d6d69a"/>
<rect x="692" y="584" width="1" height="5.9" fill="#d42020"/>
<rect x="696" y="578.9" width="1" height="5.1" fill="#d6d69a"/>
<rect x="696" y="584" width="1" height="8.2" fill="#d42020"/>
<rect x="700" y="579.3" width="1" height="4.7" fill="#d6d69a"/>
<rect x="700" y="584" width="1" height="7.1" fill="#d42020"/>
<rect x="704" y="582.9" width="1" height="1.1" fill="#d6d69a"/>
<rect x="704" y="584" width="1" height="2.4" fill="#d42020"/>
<rect x="708" y="584" width="1" height="1.2" fill="#d42020"/>
<rect x="712" y="581.2" width="1" height="2.8" fill="#d6d69a"/>
<rect x="712" y="584" width="1" height="4.7" fill="#d42020"/>
<rect x="716" y="582.9" width="1" height="1.1" fill="#d6d69a"/>
<rect x="716" y="584" width="1" height="5.2" fill="#d42020"/>
<rect x="720" y="584" width="1" height="1.2" fill="#d42020"/>
<rect x="724" y="582.9" width="1" height="1.1" fill="#d6d69a"/>
<rect x="724" y="584" width="1" height="1.9" fill="#d42020"/>
<rect x="728" y="577.5" width="1" height="6.5" fill="#d6d69a"/>
<rect x="728" y="584" width="1" height="8.2" fill="#d42020"/>
<rect x="732" y="577" width="1" height="7" fill="#d6d69a"/>
<rect x="732" y="584" width="1" height="10.6" fill="#d42020"/>
<rect x="736" y="578.2" width="1" height="5.8" fill="#d6d69a"/>
<rect x="736" y="584" width="1" height="8.2" fill="#d42020"/>
<rect x="740" y="577.5" width="1" height="6.5" fill="#d6d69a"/>
<rect x="740" y="584" width="1" height="6.6" fill="#d42020"/>
<rect x="744" y="579.8" width="1" height="4.2" fill="#d6d69a"/>
<rect x="744" y="584" width="1" height="7.1" fill="#d42020"/>
<rect x="748" y="582.1" width="1" height="1.9" fill="#d6d69a"/>
<rect x="748" y="584" width="1" height="2.4" fill="#d42020"/>
<rect x="752" y="584" width="1" height="1.2" fill="#d6d69a"/>
<rect x="752" y="582.9" width="1" height="1.1" fill="#d42020"/>
<rect x="756" y="584" width="1" height="2.4" fill="#d6d69a"/>
<rect x="756" y="575.8" width="1" height="8.2" fill="#d42020"/>
<rect x="760" y="584" width="1" height="21.1" fill="#d6d69a"/>
<rect x="760" y="565.3" width="1" height="18.7" fill="#d42020"/>
<rect x="764" y="584" width="1" height="24.6" fill="#d6d69a"/>
<rect x="764" y="555.9" width="1" height="28.1" fill="#d42020"/>
<rect x="768" y="584" width="1" height="27" fill="#d6d69a"/>
<rect x="768" y="546.5" width="1" height="37.5" fill="#d42020"/>
<rect x="772" y="584" width="1" height="19.9" fill="#d6d69a"/>
<rect x="772" y="551.2" width="1" height="32.8" fill="#d42020"/>
<rect x="776" y="584" width="1" height="19.9" fill="#d6d69a"/>
<rect x="776" y="567.6" width="1" height="16.4" fill="#d42020"/>
<rect x="780" y="584" width="1" height="15.3" fill="#d6d69a"/>
<rect x="780" y="558.2" width="1" height="25.8" fill="#d42020"/>
<rect x="784" y="584" width="1" height="10.6" fill="#d6d69a"/>
<rect x="784" y="571.1" width="1" height="12.9" fill="#d42020"/>
<rect x="788" y="584" width="1" height="15.3" fill="#d6d69a"/>
<rect x="788" y="575.8" width="1" height="8.2" fill="#d42020"/>
<rect x="792" y="584" width="1" height="18.8" fill="#d6d69a"/>
<rect x="792" y="567.6" width="1" height="16.4" fill="#d42020"/>
<rect x="796" y="584" width="1" height="11.7" fill="#d6d69a"/>
<rect x="796" y="571.1" width="1" height="12.9" fill="#d42020"/>
<rect x="800" y="584" width="1" height="15.3" fill="#d6d69a"/>
<rect x="800" y="570" width="1" height="14" fill="#d42020"/>
<rect x="804" y="584" width="1" height="1.2" fill="#d6d69a"/>
<rect x="804" y="582.9" width="1" height="1.1" fill="#d42020"/>
<rect x="808" y="584" width="1" height="15.3" fill="#d6d69a"/>
<rect x="808" y="581.7" width="1" height="2.3" fill="#d42020"/>
<rect x="812" y="584" width="1" height="11.7" fill="#d6d69a"/>
<rect x="812" y="564.1" width="1" height="19.9" fill="#d42020"/>
<rect x="816" y="584" width="1" height="10.6" fill="#d6d69a"/>
<rect x="816" y="571.1" width="1" height="12.9" fill="#d42020"/>
<rect x="820" y="584" width="1" height="14.1" fill="#d6d69a"/>
<rect x="820" y="567.6" width="1" height="16.4" fill="#d42020"/>
<rect x="824" y="584" width="1" height="21.1" fill="#d6d69a"/>
<rect x="824" y="561.8" width="1" height="22.2" fill="#d42020"/>
<rect x="828" y="584" width="1" height="30.5" fill="#d6d69a"/>
<rect x="828" y="547.7" width="1" height="36.3" fill="#d42020"/>
<rect x="832" y="584" width="1" height="38.7" fill="#d6d69a"/>
<rect x="832" y="517.2" width="1" height="66.8" fill="#d42020"/>
<rect x="836" y="584" width="1" height="37.5" fill="#d6d69a"/>
<rect x="836" y="511.4" width="1" height="72.6" fill="#d42020"/>
<rect x="840" y="584" width="1" height="35.2" fill="#d6d69a"/>
<rect x="840" y="533.6" width="1" height="50.4" fill="#d42020"/>
<rect x="844" y="584" width="1" height="28.1" fill="#d6d69a"/>
<rect x="844" y="544.2" width="1" height="39.8" fill="#d42020"/>
<rect x="848" y="584" width="1" height="31.7" fill="#d6d69a"/>
<rect x="848" y="552.4" width="1" height="31.6" fill="#d42020"/>
<rect x="852" y="584" width="1" height="18.8" fill="#d6d69a"/>
<rect x="852" y="557.1" width="1" height="26.9" fill="#d42020"/>
<rect x="856" y="584" width="1" height="7.1" fill="#d6d69a"/>
<rect x="864" y="584" width="1" height="9.4" fill="#d42020"/>
<rect x="868" y="584" width="1" height="8.2" fill="#d42020"/>
<rect x="872" y="584" width="1" height="16.4" fill="#d6d69a"/>
<rect x="872" y="573.5" width="1" height="10.5" fill="#d42020"/>
<rect x="876" y="584" width="1" height="1.2" fill="#d6d69a"/>
<rect x="876" y="575.8" width="1" height="8.2" fill="#d42020"/>
<rect x="884" y="581.7" width="1" height="2.3" fill="#d6d69a"/>
<rect x="884" y="584" width="1" height="8.2" fill="#d42020"/>
<rect x="888" y="580.5" width="1" height="3.5" fill="#d6d69a"/>
<rect x="888" y="584" width="1" height="5.9" fill="#d42020"/>
<rect x="892" y="578.2" width="1" height="5.8" fill="#d6d69a"/>
<rect x="892" y="584" width="1" height="5.9" fill="#d42020"/>
<rect x="896" y="577" width="1" height="7" fill="#d6d69a"/>
<rect x="896" y="584" width="1" height="4.7" fill="#d42020"/>
<rect x="900" y="582.9" width="1" height="1.1" fill="#d6d69a"/>
<rect x="900" y="584" width="1" height="1.9" fill="#d42020"/>
<rect x="904" y="578.2" width="1" height="5.8" fill="#d6d69a"/>
<rect x="908" y="584" width="1" height="3.5" fill="#d6d69a"/>
<rect x="908" y="578.2" width="1" height="5.8" fill="#d42020"/>
<rect x="912" y="584" width="1" height="8.2" fill="#d6d69a"/>
<rect x="912" y="564.1" width="1" height="19.9" fill="#d42020"/>
<rect x="916" y="584" width="1" height="3.5" fill="#d6d69a"/>
<rect x="916" y="572.3" width="1" height="11.7" fill="#d42020"/>
<rect x="920" y="584" width="1" height="1.2" fill="#d6d69a"/>
<rect x="920" y="578.2" width="1" height="5.8" fill="#d42020"/>
<rect x="928" y="582.9" width="1" height="1.1" fill="#d6d69a"/>
<rect x="928" y="584" width="1" height="8.2" fill="#d42020"/>
<rect x="932" y="584" width="1" height="1.9" fill="#d6d69a"/>
<rect x="932" y="581.7" width="1" height="2.3" fill="#d42020"/>
<rect x="936" y="584" width="1" height="2.4" fill="#d6d69a"/>
<rect x="936" y="581.2" width="1" height="2.8" fill="#d42020"/>
<rect x="940" y="584" width="1" height="8.2" fill="#d6d69a"/>
<rect x="940" y="577" width="1" height="7" fill="#d42020"/>
<rect x="944" y="584" width="1" height="2.4" fill="#d6d69a"/>
<rect x="944" y="580.5" width="1" height="3.5" fill="#d42020"/>
<rect x="948" y="582.9" width="1" height="1.1" fill="#d6d69a"/>
<rect x="948" y="584" width="1" height="4.7" fill="#d42020"/>
<rect x="952" y="580.5" width="1" height="3.5" fill="#d6d69a"/>
<rect x="952" y="584" width="1" height="5.9" fill="#d42020"/>
<rect x="956" y="584" width="1" height="1.2" fill="#d6d69a"/>
<rect x="956" y="581.7" width="1" height="2.3" fill="#d42020"/>
<rect x="960" y="580.5" width="1" height="3.5" fill="#d6d69a"/>
<rect x="960" y="584" width="1" height="7.1" fill="#d42020"/>
<rect x="964" y="584" width="1" height="2.8" fill="#d6d69a"/>
<rect x="964" y="580.5" width="1" height="3.5" fill="#d42020"/>
<rect x="968" y="584" width="1" height="1.2" fill="#d6d69a"/>
<rect x="968" y="578.9" width="1" height="5.1" fill="#d42020"/>
<rect x="972" y="581.7" width="1" height="2.3" fill="#d6d69a"/>
<rect x="976" y="577" width="1" height="7" fill="#d6d69a"/>
<rect x="976" y="584" width="1" height="7.1" fill="#d42020"/>
<rect x="980" y="574.7" width="1" height="9.3" fill="#d6d69a"/>
<rect x="980" y="584" width="1" height="7.1" fill="#d42020"/>
<rect x="984" y="574.7" width="1" height="9.3" fill="#d6d69a"/>
<rect x="984" y="584" width="1" height="11.7" fill="#d42020"/>
<rect x="988" y="571.8" width="1" height="12.2" fill="#d6d69a"/>
<rect x="988" y="584" width="1" height="14.1" fill="#d42020"/>
<rect x="992" y="573.5" width="1" height="10.5" fill="#d6d69a"/>
<rect x="992" y="584" width="1" height="12.9" fill="#d42020"/>
<rect x="996" y="570" width="1" height="14" fill="#d6d69a"/>
<rect x="996" y="584" width="1" height="15.3" fill="#d42020"/>
<rect x="1000" y="571.1" width="1" height="12.9" fill="#d6d69a"/>
<rect x="1000" y="584" width="1" height="14.1" fill="#d42020"/>
<rect x="1004" y="567.6" width="1" height="16.4" fill="#d6d69a"/>
<rect x="1004" y="584" width="1" height="16.4" fill="#d42020"/>
<rect x="1008" y="567.6" width="1" height="16.4" fill="#d6d69a"/>
<rect x="1008" y="584" width="1" height="19.9" fill="#d42020"/>
<rect x="1012" y="570" width="1" height="14" fill="#d6d69a"/>
<rect x="1012" y="584" width="1" height="17.6" fill="#d42020"/>
<rect x="1016" y="572.3" width="1" height="11.7" fill="#d6d69a"/>
<rect x="1016" y="584" width="1" height="9.4" fill="#d42020"/>
<rect x="1020" y="571.8" width="1" height="12.2" fill="#d6d69a"/>
<rect x="1020" y="584" width="1" height="15.3" fill="#d42020"/>
<rect x="1024" y="574.7" width="1" height="9.3" fill="#d6d69a"/>
<rect x="1024" y="584" width="1" height="10.6" fill="#d42020"/>
<rect x="1028" y="573.5" width="1" height="10.5" fill="#d6d69a"/>
<rect x="1028" y="584" width="1" height="7.1" fill="#d42020"/>
<rect x="1032" y="575.8" width="1" height="8.2" fill="#d6d69a"/>
<rect x="1032" y="584" width="1" height="8.2" fill="#d42020"/>
<rect x="1036" y="574.7" width="1" height="9.3" fill="#d6d69a"/>
<rect x="1036" y="584" width="1" height="10.6" fill="#d42020"/>
<rect x="1040" y="582.9" width="1" height="1.1" fill="#d42020"/>
<rect x="1044" y="584" width="1" height="1.2" fill="#d6d69a"/>
<rect x="1044" y="581.7" width="1" height="2.3" fill="#d42020"/>
<rect x="1048" y="584" width="1" height="3.5" fill="#d6d69a"/>
<rect x="1048" y="580.5" width="1" height="3.5" fill="#d42020"/>
<rect x="1052" y="584" width="1" height="8.2" fill="#d6d69a"/>
<rect x="1052" y="575.8" width="1" height="8.2" fill="#d42020"/>
<rect x="1056" y="584" width="1" height="10.6" fill="#d6d69a"/>
<rect x="1056" y="567.6" width="1" height="16.4" fill="#d42020"/>
<rect x="1060" y="584" width="1" height="15.3" fill="#d6d69a"/>
<rect x="1060" y="559.4" width="1" height="24.6" fill="#d42020"/>
<rect x="1064" y="584" width="1" height="7.1" fill="#d6d69a"/>
<rect x="1064" y="571.8" width="1" height="12.2" fill="#d42020"/>
<rect x="1068" y="584" width="1" height="9.4" fill="#d6d69a"/>
<rect x="1068" y="574.7" width="1" height="9.3" fill="#d42020"/>
<rect x="1072" y="584" width="1" height="9.4" fill="#d6d69a"/>
<rect x="1072" y="575.1" width="1" height="8.9" fill="#d42020"/>
<rect x="1076" y="584" width="1" height="8.2" fill="#d6d69a"/>
<rect x="1076" y="578.2" width="1" height="5.8" fill="#d42020"/>
<rect x="1080" y="584" width="1" height="8.2" fill="#d6d69a"/>
<rect x="1080" y="577" width="1" height="7" fill="#d42020"/>
<rect x="1088" y="582.9" width="1" height="1.1" fill="#d6d69a"/>
<rect x="1088" y="584" width="1" height="4.7" fill="#d42020"/>
<rect x="1092" y="575.8" width="1" height="8.2" fill="#d6d69a"/>
<rect x="1092" y="584" width="1" height="15.3" fill="#d42020"/>
<rect x="1096" y="580.5" width="1" height="3.5" fill="#d6d69a"/>
<rect x="1096" y="584" width="1" height="19.9" fill="#d42020"/>
<rect x="1100" y="577" width="1" height="7" fill="#d6d69a"/>
<rect x="1100" y="584" width="1" height="12.9" fill="#d42020"/>
<rect x="1104" y="575.8" width="1" height="8.2" fill="#d6d69a"/>
<rect x="1104" y="584" width="1" height="15.3" fill="#d42020"/>
<rect x="1108" y="579.3" width="1" height="4.7" fill="#d6d69a"/>
<rect x="1108" y="584" width="1" height="5.9" fill="#d42020"/>
<rect x="1112" y="575.8" width="1" height="8.2" fill="#d6d69a"/>
<rect x="1112" y="584" width="1" height="7.1" fill="#d42020"/>
<rect x="1116" y="582.9" width="1" height="1.1" fill="#d6d69a"/>
<rect x="1116" y="584" width="1" height="1.2" fill="#d42020"/>
<rect x="1120" y="582.9" width="1" height="1.1" fill="#d42020"/>
<rect x="1124" y="584" width="1" height="16.4" fill="#d6d69a"/>
<rect x="1124" y="570" width="1" height="14" fill="#d42020"/>
<rect x="1128" y="584" width="1" height="17.6" fill="#d6d69a"/>
<rect x="1128" y="547.7" width="1" height="36.3" fill="#d42020"/>
<rect x="1132" y="584" width="1" height="30.5" fill="#d6d69a"/>
<rect x="1132" y="545.4" width="1" height="38.6" fill="#d42020"/>
</g>
<polyline points="0,666.3 4.7,671 12.2,676.4 16.4,666.3 19.9,665.2 24.6,669.8 30.5,667 36.3,667 40.3,673.4 44.5,668.7 49.2,671 52.7,669.8 56.2,665.6 60.9,681.6 68,706.2 71.5,705 77.3,695.6 80.9,691.4 84.4,692.8 87.9,682.7 92.6,675.7 96.1,675 100.8,673.4 105.5,671.7 112.5,665.6 120.7,665.2 127.7,660 132.4,680.4 140.6,682 152.3,678 157,689.8 165.2,685.1 168.3,685.8 173,699.8 180.5,690.5 185.1,692.1 188.7,692.1 192.6,686.2 200.4,701.5 203.9,695.2 208.6,713.2 215.6,710.9 221.5,707.3 226.2,700.3 232,688.1 236.7,687.4 241.4,687.4 244.9,692.8 248.4,710.9 251.9,709.2 260.1,722.6 264.4,723.7 268.3,731.9 272.3,716.2 276.5,717.2 281.2,708.5 287.1,701.5 290,703.1 295.9,712 301.7,702.2 307.6,703.8 312.3,706.2 318.1,696.8 324,690.9 328.7,689.1 335.7,691.4 340.4,688.1 343.9,691.4 348.1,699.1 352.8,691.4 356.8,690.9 360.3,692.1 368.5,683.4 376.7,685.8 382.6,684.4 388.4,685.8 396.6,681.1 400.1,682 406,676.9 416.6,671.7 423.6,681.1 431.8,678 436.5,683.9 443.5,683.4 451.7,676.9 455.9,683.4 463.4,677.3 469.3,679.2 477.5,677.3 483.3,678 488,684.4 492,682.7 496.2,699.8 500.9,692.1 508,691.4 512.6,688.6 516.2,688.6 520.1,683.9 524.4,686.7 531.4,685.1 536.1,680.4 540.8,672.7 544.3,676.9 547.8,674.1 553.7,676.9 559.5,679.2 564.7,687.4 572.4,677.3 575.9,678 580,673.4 584.7,680.4 589.4,690.9 592.9,703.1 597.6,698.4 601.1,698.4 605.3,700.3 609.3,693.7 612.8,684.4 617,680.4 621,673.4 624.5,672.7 629.2,668 632.7,667.5 640.9,664 644.4,660.5 651.5,665.6 656.2,673.4 660.9,681.1 664.4,675.7 668.6,672.7 672.6,674.5 677.3,677.3 684.3,675.7 687.8,675 692.5,671 700.7,668 704.7,693.3 708.4,679.2 714.8,682.7 720.6,685.1 724.1,682.7 727.6,676.4 732.3,674.1 736.6,675 740.5,681.1 744,679.2 747.6,684.4 752.3,694.4 756.2,698 760.5,718.6 765.1,723.7 768.7,726.6 772.6,713.9 776.4,716.2 784.4,705.5 792.1,714.8 796.8,705.5 800.3,708.5 804.5,696.8 807.8,707.3 813.2,706.2 817.9,708.5 823.7,715.5 828.4,722.6 833.1,728.4 840.1,728.4 844.4,721.9 848.3,724.2 852.3,712 856.5,702.7 860,699.1 865.9,699.1 872.2,712 876.4,697.5 881.1,699.1 888.1,699.1 892.8,697.5 897.5,697.5 901,700.3 904.1,698.4 908,705 912,709.2 920.5,698.4 924.4,700.3 935,700.3 940.1,705.5 944.4,693.7 952.6,701.5 956.6,694.4 960.8,693.7 967.8,699.1 977.2,689.1 984.2,688.1 988.9,684.4 992.4,686.2 996.4,682.7 1000.6,682 1004.1,678 1007.6,676.4 1012.3,677.3 1016.6,679.7 1020.5,678.7 1024,681.6 1028.3,679.2 1032.3,680.4 1036.2,678.7 1040.5,690.9 1044,689.8 1048.7,698 1060.4,710.9 1064.4,699.1 1068.6,703.1 1073.3,701.5 1080.3,700.8 1085.5,691.4 1088.5,689.1 1092.5,680.4 1096.7,688.6 1100.2,685.1 1104.9,685.1 1108.4,689.1 1112.6,685.8 1116.6,699.1 1120.6,694.4 1124.4,709.7 1128.3,713.2 1131.9,720.2" fill="none" stroke="#4f8ff0" stroke-width="1" stroke-linejoin="round"/>
<polyline points="0,785.3 4.7,797 12.2,806.4 17.6,795.8 20.6,793.5 24.6,799.4 29.3,798.2 35.2,798.7 40.3,807.6 44.5,800.5 49.2,799.4 52.7,800.5 56.7,792.3 60.5,801.7 64.4,842.7 68.7,878.3 72.7,866.1 76.2,849.7 80.9,830.5 84.4,826.3 88.6,806.4 92.6,791.6 96.6,791.6 103.1,794 107.8,794 112.5,791.6 120.7,799.4 128.4,795.4 133.1,811.1 136.4,817.4 140.6,815.8 144.8,819.7 152.3,812.2 156.6,835.2 160.5,844.6 164.8,830.5 168.3,830.5 173,852.6 176.2,849.7 180.5,834.5 185.1,823.5 188.7,834.5 192.6,812.7 196.4,827.5 200.4,850.2 203.9,838 208.6,876.7 212.1,873.2 216.8,855.6 221.5,843.9 226.2,829.1 232,808.7 236.7,803.6 241.4,804 244.9,810.4 248.4,836.9 252.6,843.9 256.6,849.7 260.6,861.5 264.4,858.6 268.3,863.3 272.3,849.7 276.5,842.7 281.2,835.7 285.9,826.3 290,824 295.9,835.7 300.5,828.7 304.1,818.8 308.3,817.4 312.3,825.1 315.8,805.2 319.3,791.2 324,785.3 328,784.1 332.2,791.2 336.4,799.4 339.7,797.7 344.4,801.7 348.6,814.1 352.8,809.9 356.8,806.4 360.3,808.7 364.5,801.7 368.5,777.6 372,778.3 376.7,791.2 382.6,797.7 388.4,805.2 393.1,801.7 396.6,797.7 400.1,799.4 404.8,793 409.1,783.7 413,785.3 417,786 420.1,793 424.1,808 428.3,802.9 431.8,801.7 436.5,809.9 440.5,815.1 444.7,810.4 452.9,794.7 456.4,808.7 464.6,781.3 468.6,793 472.8,793.5 477,797 479.8,796.3 483.3,800.1 488,814.1 491.5,813.4 496.2,842.7 500.5,849.3 504.4,833.3 509.1,830.5 513.8,826.3 520.8,806.4 524.4,814.1 530.2,804 532.6,802.4 536.1,792.3 540.3,767.7 544.3,781.3 547.8,791.2 552.5,791.6 559.5,805.2 564.7,817.4 568.9,809.9 572.4,799.4 577.1,796.3 580,793 584.2,794.7 588.2,812.2 592.2,849.7 596.4,865 600.6,845.5 604.6,843.9 608.6,828.7 612.8,809.9 617,797.7 621,786.9 624.5,786.9 628,785.3 632.7,788.8 640.5,794 643.7,793 650.3,799.4 656.2,808.7 660.1,816.5 664.4,808 668.6,801.7 672.6,805.2 676.6,809.4 683.1,808.7 687.8,808.7 692.5,793.5 696.7,782.2 700,782.2 704.7,822.8 708.4,806.4 712.4,794.7 715.9,797.7 720.6,811.1 724.8,804 728.8,780.6 732.3,778.3 736.6,785.3 740.5,798.2 744,799.4 748.3,812.2 752.3,826.3 756.2,842.7 760.5,879.7 765.1,875.5 768.7,865.7 772.6,847.4 776.4,840.4 780.4,838 784.4,831.5 788.6,831.5 792.1,836.1 796.1,831.5 800.3,832.2 804.5,816.9 808.5,833.3 812.5,849.7 816.2,842.7 820.2,856.8 824.9,869.7 828.4,875.5 832.6,876.7 836.6,859.1 840.6,846.2 844.4,840.4 848.3,838 852.3,832.2 856.5,821.6 860,818.1 864.2,811.8 868.2,811.1 872.2,824 876.4,812.2 880.6,806.4 884.6,802.4 888.6,806.4 892.8,806.4 897,809.4 901,812.7 904.1,813.4 908,842.7 912,863.3 916.2,843.9 920.5,828.7 924.4,824 928.4,815.8 932.7,829.1 936.2,832.2 940.1,841.5 944.4,817.4 948.6,811.1 952.6,831 956.6,802.9 960.8,791.6 964.3,809.4 968.3,829.1 972.5,808.7 976.7,786.5 980.7,786 984.7,783.7 988.4,781.3 992.4,791.2 996.4,787.6 1000.1,793 1004.1,790.7 1008.1,790.7 1012.3,795.8 1016.6,802.9 1020.5,798.7 1024,802.9 1028.3,805.7 1032.3,805.2 1036.2,799.4 1040.5,824 1044.7,833.3 1048.7,848.6 1052.6,861.5 1056.4,868 1060.4,866.1 1064.4,841.5 1068.6,839.2 1072.1,836.9 1076.8,832.9 1080.3,831 1084.5,820.4 1088.5,810.4 1092.5,786.5 1096.7,790 1100.9,792.3 1104.9,793.5 1108.4,805.2 1112.6,804 1116.6,819.3 1120.6,817.4 1124.4,846.2 1128.3,865 1131.9,865.7" fill="none" stroke="#4cc4ae" stroke-width="1" stroke-linejoin="round"/>
<g fill="#fff" shape-rendering="crispEdges">
<rect x="0" y="120" width="1142" height="1"/>
<rect x="0" y="374" width="1142" height="1"/>
<rect x="0" y="376" width="1142" height="1"/>
<rect x="0" y="502" width="1142" height="1"/>
<rect x="0" y="504" width="1142" height="1"/>
<rect x="0" y="630" width="1142" height="1"/>
<rect x="0" y="632" width="1142" height="1"/>
<rect x="0" y="758" width="1142" height="1"/>
<rect x="0" y="760" width="1142" height="1"/>
<rect x="0" y="886" width="1142" height="1"/>
<rect x="1141" y="120" width="1" height="255"/>
<rect x="1141" y="376" width="1" height="127"/>
<rect x="1141" y="504" width="1" height="127"/>
<rect x="1141" y="632" width="1" height="127"/>
<rect x="1141" y="760" width="1" height="127"/>
<rect x="1142" y="148" width="3" height="1"/>
<rect x="1142" y="180" width="3" height="1"/>
<rect x="1142" y="212" width="3" height="1"/>
<rect x="1142" y="244" width="3" height="1"/>
<rect x="1142" y="276" width="3" height="1"/>
<rect x="1142" y="308" width="3" height="1"/>
<rect x="1142" y="340" width="3" height="1"/>
<rect x="1142" y="372" width="3" height="1"/>
<rect x="1142" y="423" width="3" height="1"/>
<rect x="1142" y="584" width="3" height="1"/>
<rect x="1142" y="633" width="3" height="1"/>
<rect x="1142" y="757" width="3" height="1"/>
<rect x="1142" y="820" width="3" height="1"/>
<rect x="1142" y="378" width="3" height="1"/>
<rect x="1142" y="500" width="3" height="1"/>
<rect x="1142" y="506" width="3" height="1"/>
<rect x="1142" y="628" width="3" height="1"/>
<rect x="1142" y="762" width="3" height="1"/>
<rect x="1142" y="884" width="3" height="1"/>
<rect x="36" y="887" width="1" height="3"/>
<rect x="100" y="887" width="1" height="3"/>
<rect x="164" y="887" width="1" height="3"/>
<rect x="228" y="887" width="1" height="3"/>
<rect x="292" y="887" width="1" height="3"/>
<rect x="356" y="887" width="1" height="3"/>
<rect x="420" y="887" width="1" height="3"/>
<rect x="484" y="887" width="1" height="3"/>
<rect x="548" y="887" width="1" height="3"/>
<rect x="612" y="887" width="1" height="3"/>
<rect x="676" y="887" width="1" height="3"/>
<rect x="740" y="887" width="1" height="3"/>
<rect x="804" y="887" width="1" height="3"/>
<rect x="868" y="887" width="1" height="3"/>
<rect x="932" y="887" width="1" height="3"/>
<rect x="996" y="887" width="1" height="3"/>
<rect x="1060" y="887" width="1" height="3"/>
<rect x="1124" y="887" width="1" height="3"/>
</g>
<g fill="#fff">
<text x="1146.5" y="150.2">249.10</text>
<text x="1146.5" y="182.2">244.70</text>
<text x="1146.5" y="214.2">240.40</text>
<text x="1146.5" y="246.2">236.00</text>
<text x="1146.5" y="278.2">231.70</text>
<text x="1146.5" y="310.2">227.30</text>
<text x="1146.5" y="342.2">222.90</text>
<text x="1146.5" y="374.2">218.60</text>
<text x="1144.7" y="386.70000000000005">2.946</text>
<text x="1146.5" y="426.6">0.00</text>
<text x="1144.7" y="498.5">-5.011</text>
<text x="1144.7" y="514.1">24.3888</text>
<text x="1146.5" y="587.1">0.00</text>
<text x="1144.7" y="627.1">-14.1613</text>
<text x="1144.7" y="643.1">100</text>
<text x="1144.7" y="755.1">0</text>
<text x="1144.7" y="770.8000000000001">269.5252</text>
<text x="1146.5" y="823.4">0.00</text>
<text x="1144.7" y="883.1">-303.762</text>
<text x="-29.5" y="899">8 Dec 2006</text>
<text x="34.5" y="899">26 Dec 2006</text>
<text x="98.5" y="899">15 Jan 2007</text>
<text x="162.5" y="899">2 Feb 2007</text>
<text x="226.5" y="899">21 Feb 2007</text>
<text x="290.5" y="899">12 Mar 2007</text>
<text x="354.5" y="899">30 Mar 2007</text>
<text x="418.5" y="899">18 Apr 2007</text>
<text x="482.5" y="899">7 May 2007</text>
<text x="546.5" y="899">25 May 2007</text>
<text x="610.5" y="899">13 Jun 2007</text>
<text x="674.5" y="899">2 Jul 2007</text>
<text x="738.5" y="899">20 Jul 2007</text>
<text x="802.5" y="899">8 Aug 2007</text>
<text x="866.5" y="899">27 Aug 2007</text>
<text x="930.5" y="899">14 Sep 2007</text>
<text x="994.5" y="899">3 Oct 2007</text>
<text x="1058.5" y="899">22 Oct 2007</text>
<text x="1122.5" y="899">9 Nov 2007</text>
<text x="98" y="132" text-anchor="end" font-size="8.8">GBPJPY,Daily  229.16 231.02 225.26 225.51</text>
<text x="33.5" y="142" text-anchor="end">Forex System 7.0</text>
<text x="32" y="390" text-anchor="end">MACD(12,26,9) 0.147 0.260</text>
<text x="12.2" y="518" text-anchor="end">Volumes 16290</text>
</g>
<rect x="1143" y="315.5" width="35" height="10" fill="#fff"/>
<text x="1146.5" y="323.8" fill="#000">225.51</text>
</svg>
<!-- bottom tab bar -->
<div style="position:absolute;left:0;top:904px;width:1183px;height:2px;background:#fff"></div>
<div style="position:absolute;left:70px;top:906px;width:1113px;height:1px;background:#111"></div>
<div style="position:absolute;left:0;top:907px;width:1183px;height:19px;background:#ece9d8"></div>
<div style="position:absolute;left:0;top:904px;width:70px;height:20px;background:#fff;border-right:1px solid #000;border-bottom:1px solid #000"></div>
<div style="position:absolute;left:-5.5px;top:909px;font:10px 'Liberation Sans',sans-serif;color:#000;line-height:12px">GBPJPY,Daily</div>
<div style="position:absolute;left:82.5px;top:909px;font:10px 'Liberation Sans',sans-serif;color:#6a6a60;line-height:12px">USDCHF,M30</div><div style="position:absolute;left:169.5px;top:909px;font:10px 'Liberation Sans',sans-serif;color:#6a6a60;line-height:12px">USDJPY,H1</div><div style="position:absolute;left:246.5px;top:909px;font:10px 'Liberation Sans',sans-serif;color:#6a6a60;line-height:12px">GBPUSD,H1</div><div style="position:absolute;left:324.5px;top:909px;font:10px 'Liberation Sans',sans-serif;color:#6a6a60;line-height:12px">EURJPY,H1</div><div style="position:absolute;left:159px;top:909px;width:1px;height:12px;background:#77756a"></div><div style="position:absolute;left:235px;top:909px;width:1px;height:12px;background:#77756a"></div><div style="position:absolute;left:315px;top:909px;width:1px;height:12px;background:#77756a"></div><div style="position:absolute;left:391px;top:909px;width:1px;height:12px;background:#77756a"></div>
<svg style="position:absolute;left:1154px;top:912px" width="24" height="8"><path d="M4 0v7l-3.5-3.5zM18 0v7l3.5-3.5z" fill="#a3a08f"/></svg>
<div style="position:absolute;left:1181px;top:37px;width:2px;height:889px;background:#ece9d8"></div>
</div></body></html>
